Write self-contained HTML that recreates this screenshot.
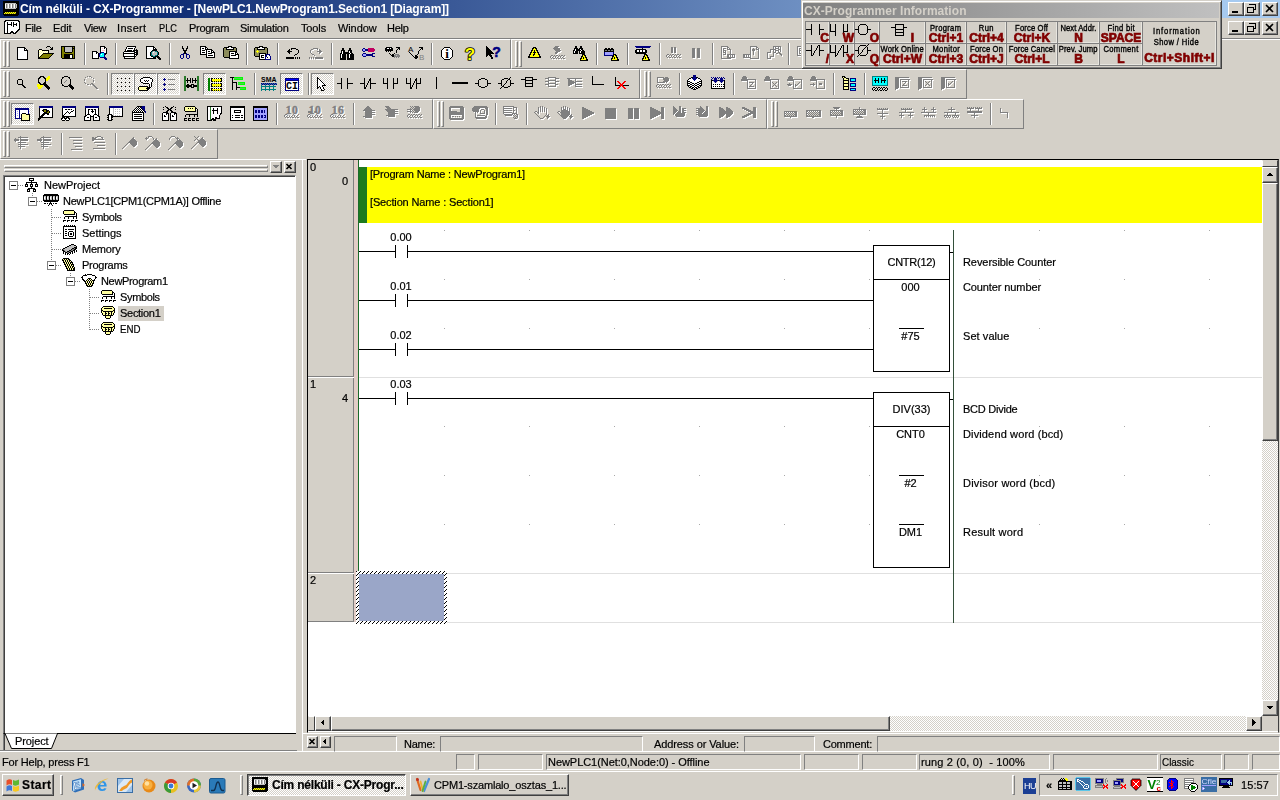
<!DOCTYPE html>
<html lang="hu">
<head>
<meta charset="utf-8">
<title>Cím nélküli - CX-Programmer</title>
<style>

*{box-sizing:border-box;margin:0;padding:0}
html,body{width:1280px;height:800px;overflow:hidden;background:#d4d0c8}
body{font-family:"Liberation Sans",sans-serif;font-size:11px;color:#000;line-height:1}
#screen{position:relative;width:1280px;height:800px;overflow:hidden;background:#d4d0c8}
.t{will-change:transform}
.a{position:absolute}
.t{position:absolute;white-space:nowrap;line-height:13px;height:13px;-webkit-text-stroke:0.2px currentColor}
.ui{font-family:"Liberation Sans",sans-serif;font-size:11px}
.b{font-weight:bold}
svg{position:absolute;display:block;overflow:visible}
.raised{border:1px solid;border-color:#fff #404040 #404040 #fff;box-shadow:inset -1px -1px 0 #808080,inset 1px 1px 0 #d4d0c8;background:#d4d0c8}
.btn{border:1px solid;border-color:#fff #404040 #404040 #fff;box-shadow:inset -1px -1px 0 #808080;background:#d4d0c8}
.sunk{border:1px solid;border-color:#808080 #fff #fff #808080}
.sunk2{border:1px solid;border-color:#808080 #fff #fff #808080;box-shadow:inset 1px 1px 0 #404040}
.tb{position:absolute;height:30px;border:1px solid;border-color:#fff #808080 #808080 #fff}
.grip{position:absolute;width:3px;height:26px;top:1px;border:1px solid;border-color:#fff #808080 #808080 #fff}
.sep{position:absolute;width:2px;height:22px;top:3px;border-left:1px solid #808080;border-right:1px solid #fff}
.ic{position:absolute}
.chk{position:absolute;width:23px;height:22px;border:1px solid;border-color:#808080 #fff #fff #808080;background-color:#e9e7e3;background-image:conic-gradient(#fff 25%,#d4d0c8 0 50%,#fff 0 75%,#d4d0c8 0);background-size:2px 2px}
.il{font-size:9.5px;text-align:center;line-height:11px;height:11px;-webkit-text-stroke:0.4px currentColor}
.il span{display:inline-block;transform:scaleX(.8);transform-origin:50% 50%}
.ik{font-size:12px;font-weight:bold;color:#800000;text-align:center;line-height:12px;height:12px;-webkit-text-stroke:0.7px #800000}
.dither{background-color:#e9e7e3;background-image:conic-gradient(#fff 25%,#d4d0c8 0 50%,#fff 0 75%,#d4d0c8 0);background-size:2px 2px}
</style>
</head>
<body>
<div id="screen">
<div class="a" style="left:0px;top:0px;width:1280px;height:18px;background:linear-gradient(90deg,#0a246a 0,#0d2a72 150px,#a6caf0 1180px,#a6caf0 100%)"></div>
<svg class="ic" style="left:3px;top:1px" width="16" height="16" viewBox="0 0 16 16" shape-rendering="crispEdges"><path fill="#000" d="M0 0h16v1h-16zM0 1h16v1h-16zM0 2h2v1h-2zM13 2h3v1h-3zM0 3h2v1h-2zM14 3h2v1h-2zM0 4h2v1h-2zM14 4h2v1h-2zM0 5h2v1h-2zM14 5h2v1h-2zM0 6h2v1h-2zM14 6h2v1h-2zM0 7h2v1h-2zM13 7h3v1h-3zM0 8h16v1h-16zM0 9h16v1h-16zM0 10h16v1h-16zM0 11h2v1h-2zM13 11h3v1h-3zM0 12h1v1h-1zM13 12h3v1h-3zM0 13h16v1h-16zM1 14h14v1h-14z"/><path fill="#c0c0c0" d="M2 2h11v1h-11zM4 3h1v1h-1zM7 3h1v1h-1zM10 3h1v1h-1zM13 3h1v1h-1zM4 4h1v1h-1zM7 4h1v1h-1zM10 4h1v1h-1zM13 4h1v1h-1zM4 5h1v1h-1zM7 5h1v1h-1zM10 5h1v1h-1zM13 5h1v1h-1zM4 6h1v1h-1zM7 6h1v1h-1zM10 6h1v1h-1zM13 6h1v1h-1zM2 7h11v1h-11z"/><path fill="#fff" d="M2 3h1v1h-1zM5 3h1v1h-1zM8 3h1v1h-1zM11 3h1v1h-1zM2 4h1v1h-1zM5 4h1v1h-1zM8 4h1v1h-1zM11 4h1v1h-1zM2 5h1v1h-1zM5 5h1v1h-1zM8 5h1v1h-1zM11 5h1v1h-1zM2 6h1v1h-1zM5 6h1v1h-1zM8 6h1v1h-1zM11 6h1v1h-1z"/><path fill="#808080" d="M3 3h1v1h-1zM6 3h1v1h-1zM9 3h1v1h-1zM12 3h1v1h-1zM3 4h1v1h-1zM6 4h1v1h-1zM9 4h1v1h-1zM12 4h1v1h-1zM3 5h1v1h-1zM6 5h1v1h-1zM9 5h1v1h-1zM12 5h1v1h-1zM3 6h1v1h-1zM6 6h1v1h-1zM9 6h1v1h-1zM12 6h1v1h-1z"/><path fill="#ff0" d="M2 11h1v1h-1zM4 11h1v1h-1zM6 11h1v1h-1zM8 11h1v1h-1zM10 11h1v1h-1zM12 11h1v1h-1zM1 12h1v1h-1zM3 12h1v1h-1zM5 12h1v1h-1zM7 12h1v1h-1zM9 12h1v1h-1zM11 12h1v1h-1z"/><path fill="#808000" d="M3 11h1v1h-1zM5 11h1v1h-1zM7 11h1v1h-1zM9 11h1v1h-1zM11 11h1v1h-1zM2 12h1v1h-1zM4 12h1v1h-1zM6 12h1v1h-1zM8 12h1v1h-1zM10 12h1v1h-1zM12 12h1v1h-1z"/></svg>
<div class="t ttl" style="left:20px;top:3px;color:#fff;font-weight:bold;font-size:12px;-webkit-text-stroke:0;letter-spacing:-0.121px;">Cím nélküli - CX-Programmer - [NewPLC1.NewProgram1.Section1 [Diagram]]</div>
<div class="a btn" style="left:1228px;top:2px;width:16px;height:14px"><svg style="left:-1px;top:-1px" width="16" height="14" viewBox="0 0 16 14" shape-rendering="crispEdges"><rect x="4" y="9" width="6" height="2" fill="#000"/></svg></div>
<div class="a btn" style="left:1244px;top:2px;width:16px;height:14px"><svg style="left:-1px;top:-1px" width="16" height="14" viewBox="0 0 16 14" shape-rendering="crispEdges"><path d="M5.5 2.5h6v5h-2" stroke="#000" fill="none" stroke-width="1" /><rect x="5" y="2" width="7" height="1" fill="#000"/><path d="M3.5 5.5h6v5h-6z" stroke="#000" fill="none" stroke-width="1" /><rect x="3" y="5" width="7" height="1" fill="#000"/></svg></div>
<div class="a btn" style="left:1262px;top:2px;width:16px;height:14px"><svg style="left:-1px;top:-1px" width="16" height="14" viewBox="0 0 16 14" shape-rendering="crispEdges"><path d="M4 3l7 7M11 3l-7 7" stroke="#000" fill="none" stroke-width="1.6" shape-rendering="auto"/></svg></div>
<div class="a" style="left:0px;top:18px;width:1280px;height:20px;background:#d4d0c8"></div>
<svg class="ic" style="left:4px;top:20px" width="16" height="16" viewBox="0 0 16 16" shape-rendering="crispEdges"><path fill="#000" d="M1 0h14v1h-14zM0 1h2v1h-2zM14 1h2v1h-2zM0 2h1v1h-1zM3 2h1v1h-1zM7 2h1v1h-1zM9 2h1v1h-1zM15 2h1v1h-1zM0 3h1v1h-1zM3 3h1v1h-1zM7 3h1v1h-1zM9 3h1v1h-1zM12 3h1v1h-1zM15 3h1v1h-1zM0 4h1v1h-1zM3 4h5v1h-5zM9 4h4v1h-4zM15 4h1v1h-1zM0 5h1v1h-1zM3 5h1v1h-1zM7 5h1v1h-1zM9 5h1v1h-1zM12 5h1v1h-1zM15 5h1v1h-1zM0 6h1v1h-1zM3 6h1v1h-1zM9 6h1v1h-1zM15 6h1v1h-1zM0 7h1v1h-1zM3 7h1v1h-1zM15 7h1v1h-1zM0 8h1v1h-1zM3 8h1v1h-1zM15 8h1v1h-1zM0 9h1v1h-1zM3 9h1v1h-1zM14 9h2v1h-2zM0 10h1v1h-1zM3 10h1v1h-1zM13 10h2v1h-2zM0 11h1v1h-1zM3 11h1v1h-1zM7 11h2v1h-2zM12 11h2v1h-2zM0 12h1v1h-1zM3 12h1v1h-1zM6 12h4v1h-4zM11 12h2v1h-2zM0 13h7v1h-7zM9 13h3v1h-3z"/><path fill="#fff" d="M2 1h12v1h-12zM1 2h2v1h-2zM4 2h3v1h-3zM8 2h1v1h-1zM10 2h5v1h-5zM1 3h2v1h-2zM4 3h3v1h-3zM8 3h1v1h-1zM10 3h2v1h-2zM13 3h2v1h-2zM1 4h2v1h-2zM8 4h1v1h-1zM13 4h2v1h-2zM1 5h2v1h-2zM4 5h3v1h-3zM8 5h1v1h-1zM10 5h2v1h-2zM13 5h2v1h-2zM1 6h2v1h-2zM4 6h5v1h-5zM10 6h5v1h-5zM1 7h2v1h-2zM4 7h11v1h-11zM1 8h2v1h-2zM4 8h11v1h-11zM1 9h2v1h-2zM4 9h10v1h-10zM1 10h2v1h-2zM4 10h9v1h-9zM1 11h2v1h-2zM4 11h3v1h-3zM9 11h3v1h-3zM1 12h2v1h-2zM4 12h2v1h-2zM10 12h1v1h-1z"/></svg>
<div class="t mn" style="left:25px;top:22px;letter-spacing:-0.309px;">File</div>
<div class="t mn" style="left:53px;top:22px;letter-spacing:-0.117px;">Edit</div>
<div class="t mn" style="left:84px;top:22px;letter-spacing:-0.414px;">View</div>
<div class="t mn" style="left:117px;top:22px;letter-spacing:0.331px;">Insert</div>
<div class="t mn" style="left:159px;top:22px;"><span style="display:inline-block;transform:scaleX(0.84);transform-origin:0 50%">PLC</span></div>
<div class="t mn" style="left:189px;top:22px;letter-spacing:-0.312px;">Program</div>
<div class="t mn" style="left:240px;top:22px;letter-spacing:-0.286px;">Simulation</div>
<div class="t mn" style="left:301px;top:22px;letter-spacing:-0.138px;">Tools</div>
<div class="t mn" style="left:338px;top:22px;letter-spacing:-0.104px;">Window</div>
<div class="t mn" style="left:387px;top:22px;letter-spacing:-0.281px;">Help</div>
<div class="a btn" style="left:1228px;top:21px;width:16px;height:14px"><svg style="left:-1px;top:-1px" width="16" height="14" viewBox="0 0 16 14" shape-rendering="crispEdges"><rect x="4" y="9" width="6" height="2" fill="#000"/></svg></div>
<div class="a btn" style="left:1244px;top:21px;width:16px;height:14px"><svg style="left:-1px;top:-1px" width="16" height="14" viewBox="0 0 16 14" shape-rendering="crispEdges"><path d="M5.5 2.5h6v5h-2" stroke="#000" fill="none" stroke-width="1" /><rect x="5" y="2" width="7" height="1" fill="#000"/><path d="M3.5 5.5h6v5h-6z" stroke="#000" fill="none" stroke-width="1" /><rect x="3" y="5" width="7" height="1" fill="#000"/></svg></div>
<div class="a btn" style="left:1262px;top:21px;width:16px;height:14px"><svg style="left:-1px;top:-1px" width="16" height="14" viewBox="0 0 16 14" shape-rendering="crispEdges"><path d="M4 3l7 7M11 3l-7 7" stroke="#000" fill="none" stroke-width="1.6" shape-rendering="auto"/></svg></div>
<div class="a" style="left:0px;top:38px;width:1280px;height:1px;background:#808080"></div>
<div class="a" style="left:0px;top:39px;width:1280px;height:1px;background:#fff"></div>
<div class="tb" style="left:0px;top:39px;width:511px"><div class="grip" style="left:2px"></div><div class="grip" style="left:6px"></div><svg class="ic" style="left:14px;top:5px" width="17" height="17" viewBox="0 0 17 17" shape-rendering="crispEdges"><path fill="#000" d="M2 2h8v1h-8zM2 3h1v1h-1zM9 3h2v1h-2zM2 4h1v1h-1zM9 4h1v1h-1zM11 4h1v1h-1zM2 5h1v1h-1zM9 5h4v1h-4zM2 6h1v1h-1zM12 6h1v1h-1zM2 7h1v1h-1zM12 7h1v1h-1zM2 8h1v1h-1zM12 8h1v1h-1zM2 9h1v1h-1zM12 9h1v1h-1zM2 10h1v1h-1zM12 10h1v1h-1zM2 11h1v1h-1zM12 11h1v1h-1zM2 12h1v1h-1zM12 12h1v1h-1zM2 13h1v1h-1zM12 13h1v1h-1zM2 14h11v1h-11z"/><path fill="#fff" d="M3 3h6v1h-6zM3 4h6v1h-6zM10 4h1v1h-1zM3 5h6v1h-6zM3 6h9v1h-9zM3 7h9v1h-9zM3 8h9v1h-9zM3 9h9v1h-9zM3 10h9v1h-9zM3 11h9v1h-9zM3 12h9v1h-9zM3 13h9v1h-9z"/></svg><svg class="ic" style="left:37px;top:5px" width="17" height="17" viewBox="0 0 17 17" shape-rendering="crispEdges"><path fill="#000" d="M9 1h3v1h-3zM8 2h1v1h-1zM12 2h1v1h-1zM14 2h1v1h-1zM13 3h2v1h-2zM1 4h3v1h-3zM12 4h3v1h-3zM0 5h1v1h-1zM4 5h7v1h-7zM0 6h1v1h-1zM10 6h1v1h-1zM0 7h1v1h-1zM10 7h1v1h-1zM0 8h1v1h-1zM5 8h11v1h-11zM0 9h1v1h-1zM4 9h1v1h-1zM14 9h1v1h-1zM0 10h1v1h-1zM3 10h1v1h-1zM13 10h1v1h-1zM0 11h1v1h-1zM2 11h1v1h-1zM12 11h1v1h-1zM0 12h2v1h-2zM11 12h1v1h-1zM0 13h11v1h-11z"/><path fill="#ffffa0" d="M1 5h1v1h-1zM3 5h1v1h-1zM2 6h1v1h-1zM4 6h1v1h-1zM6 6h1v1h-1zM8 6h1v1h-1zM1 7h1v1h-1zM3 7h1v1h-1zM5 7h1v1h-1zM7 7h1v1h-1zM9 7h1v1h-1zM2 8h1v1h-1zM4 8h1v1h-1zM1 9h1v1h-1zM3 9h1v1h-1zM2 10h1v1h-1zM1 11h1v1h-1z"/><path fill="#fff" d="M2 5h1v1h-1zM1 6h1v1h-1zM3 6h1v1h-1zM5 6h1v1h-1zM7 6h1v1h-1zM9 6h1v1h-1zM2 7h1v1h-1zM4 7h1v1h-1zM6 7h1v1h-1zM8 7h1v1h-1zM1 8h1v1h-1zM3 8h1v1h-1zM2 9h1v1h-1zM1 10h1v1h-1z"/><path fill="#808000" d="M5 9h9v1h-9zM4 10h9v1h-9zM3 11h9v1h-9zM2 12h9v1h-9z"/></svg><svg class="ic" style="left:60px;top:5px" width="17" height="17" viewBox="0 0 17 17" shape-rendering="crispEdges"><path fill="#000" d="M0 1h14v1h-14zM0 2h1v1h-1zM3 2h1v1h-1zM11 2h1v1h-1zM13 2h1v1h-1zM0 3h1v1h-1zM3 3h1v1h-1zM11 3h3v1h-3zM0 4h1v1h-1zM3 4h1v1h-1zM11 4h1v1h-1zM13 4h1v1h-1zM0 5h1v1h-1zM3 5h1v1h-1zM11 5h1v1h-1zM13 5h1v1h-1zM0 6h1v1h-1zM3 6h1v1h-1zM11 6h1v1h-1zM13 6h1v1h-1zM0 7h1v1h-1zM4 7h7v1h-7zM13 7h1v1h-1zM0 8h1v1h-1zM13 8h1v1h-1zM0 9h1v1h-1zM3 9h9v1h-9zM13 9h1v1h-1zM0 10h1v1h-1zM3 10h6v1h-6zM11 10h1v1h-1zM13 10h1v1h-1zM0 11h1v1h-1zM3 11h6v1h-6zM11 11h1v1h-1zM13 11h1v1h-1zM0 12h1v1h-1zM3 12h6v1h-6zM11 12h1v1h-1zM13 12h1v1h-1zM1 13h13v1h-13z"/><path fill="#808000" d="M1 2h2v1h-2zM12 2h1v1h-1zM1 3h2v1h-2zM1 4h2v1h-2zM12 4h1v1h-1zM1 5h2v1h-2zM12 5h1v1h-1zM1 6h2v1h-2zM12 6h1v1h-1zM1 7h3v1h-3zM11 7h2v1h-2zM1 8h12v1h-12zM1 9h2v1h-2zM12 9h1v1h-1zM1 10h2v1h-2zM12 10h1v1h-1zM1 11h2v1h-2zM12 11h1v1h-1zM1 12h2v1h-2zM12 12h1v1h-1z"/><path fill="#c0c0c0" d="M4 2h7v1h-7zM4 3h7v1h-7zM4 4h7v1h-7zM4 5h7v1h-7zM4 6h7v1h-7z"/><path fill="#fff" d="M9 10h2v1h-2zM9 11h2v1h-2zM9 12h2v1h-2z"/></svg><div class="sep" style="left:83px"></div><svg class="ic" style="left:91px;top:5px" width="17" height="17" viewBox="0 0 17 17" shape-rendering="crispEdges"><path fill="#000" d="M8 1h5v1h-5zM8 2h1v1h-1zM12 2h2v1h-2zM8 3h1v1h-1zM12 3h1v1h-1zM14 3h1v1h-1zM8 4h1v1h-1zM14 4h1v1h-1zM8 5h1v1h-1zM14 5h1v1h-1zM0 6h5v1h-5zM8 6h1v1h-1zM14 6h1v1h-1zM0 7h1v1h-1zM4 7h2v1h-2zM8 7h1v1h-1zM14 7h1v1h-1zM0 8h1v1h-1zM4 8h1v1h-1zM6 8h1v1h-1zM13 8h2v1h-2zM0 9h1v1h-1zM6 9h1v1h-1zM13 9h1v1h-1zM0 10h1v1h-1zM6 10h1v1h-1zM0 11h1v1h-1zM6 11h1v1h-1zM0 12h1v1h-1zM6 12h1v1h-1zM0 13h7v1h-7z"/><path fill="#fff" d="M9 2h3v1h-3zM9 3h1v1h-1zM11 3h1v1h-1zM13 3h1v1h-1zM9 4h5v1h-5zM9 5h1v1h-1zM13 5h1v1h-1zM9 6h5v1h-5zM1 7h3v1h-3zM12 7h2v1h-2zM1 8h3v1h-3zM5 8h1v1h-1zM1 9h5v1h-5zM9 9h1v1h-1zM1 10h5v1h-5zM1 11h5v1h-5zM1 12h5v1h-5z"/><path fill="#ffc0c0" d="M10 3h1v1h-1zM10 5h3v1h-3z"/><path fill="#000080" d="M9 7h3v1h-3zM7 8h2v1h-2zM12 8h1v1h-1zM7 9h1v1h-1zM12 9h1v1h-1zM7 10h1v1h-1zM12 10h1v1h-1zM7 11h1v1h-1zM12 11h1v1h-1zM8 12h6v1h-6zM12 13h3v1h-3zM13 14h2v1h-2z"/><path fill="#0ff" d="M9 8h3v1h-3zM8 9h1v1h-1zM10 9h2v1h-2zM8 10h4v1h-4zM8 11h4v1h-4z"/></svg><div class="sep" style="left:114px"></div><svg class="ic" style="left:122px;top:5px" width="17" height="17" viewBox="0 0 17 17" shape-rendering="crispEdges"><path fill="#000" d="M4 1h9v1h-9zM3 2h1v1h-1zM12 2h1v1h-1zM3 3h1v1h-1zM5 3h5v1h-5zM11 3h1v1h-1zM2 4h1v1h-1zM11 4h1v1h-1zM13 4h1v1h-1zM2 5h1v1h-1zM4 5h5v1h-5zM10 5h5v1h-5zM1 6h11v1h-11zM13 6h2v1h-2zM0 7h1v1h-1zM11 7h4v1h-4zM0 8h12v1h-12zM13 8h2v1h-2zM0 9h1v1h-1zM11 9h4v1h-4zM0 10h1v1h-1zM11 10h1v1h-1zM13 10h1v1h-1zM0 11h13v1h-13zM1 12h1v1h-1zM11 12h1v1h-1zM1 13h11v1h-11z"/><path fill="#fff" d="M4 2h8v1h-8zM4 3h1v1h-1zM10 3h1v1h-1zM3 4h8v1h-8zM3 5h1v1h-1zM9 5h1v1h-1zM12 6h1v1h-1zM1 7h10v1h-10zM12 8h1v1h-1zM1 9h10v1h-10zM1 10h10v1h-10zM12 10h1v1h-1zM2 12h9v1h-9z"/></svg><svg class="ic" style="left:145px;top:5px" width="17" height="17" viewBox="0 0 17 17" shape-rendering="crispEdges"><path fill="#000" d="M0 1h8v1h-8zM0 2h1v1h-1zM7 2h2v1h-2zM0 3h1v1h-1zM7 3h1v1h-1zM9 3h1v1h-1zM0 4h1v1h-1zM7 4h4v1h-4zM0 5h1v1h-1zM6 5h5v1h-5zM0 6h1v1h-1zM5 6h1v1h-1zM11 6h1v1h-1zM0 7h1v1h-1zM4 7h1v1h-1zM12 7h1v1h-1zM0 8h1v1h-1zM4 8h1v1h-1zM12 8h1v1h-1zM0 9h1v1h-1zM4 9h1v1h-1zM12 9h1v1h-1zM0 10h1v1h-1zM4 10h1v1h-1zM11 10h1v1h-1zM0 11h1v1h-1zM5 11h2v1h-2zM9 11h4v1h-4zM0 12h1v1h-1zM7 12h3v1h-3zM11 12h3v1h-3zM0 13h10v1h-10zM12 13h3v1h-3zM13 14h2v1h-2z"/><path fill="#fff" d="M1 2h6v1h-6zM1 3h6v1h-6zM8 3h1v1h-1zM1 4h6v1h-6zM1 5h5v1h-5zM1 6h4v1h-4zM1 7h3v1h-3zM7 7h1v1h-1zM1 8h3v1h-3zM1 9h3v1h-3zM1 10h3v1h-3zM1 11h4v1h-4zM1 12h6v1h-6z"/><path fill="#008080" d="M6 6h1v1h-1zM9 6h2v1h-2zM5 7h1v1h-1zM11 7h1v1h-1zM5 8h1v1h-1zM11 8h1v1h-1zM5 9h1v1h-1zM11 9h1v1h-1zM5 10h2v1h-2zM9 10h2v1h-2zM7 11h2v1h-2z"/><path fill="#c0c0c0" d="M7 6h2v1h-2zM6 7h1v1h-1zM8 7h3v1h-3zM6 8h5v1h-5zM6 9h5v1h-5zM7 10h2v1h-2z"/></svg><div class="sep" style="left:168px"></div><svg class="ic" style="left:176px;top:5px" width="17" height="17" viewBox="0 0 17 17" shape-rendering="crispEdges"><path fill="#000" d="M5 1h1v1h-1zM10 1h1v1h-1zM5 2h1v1h-1zM10 2h1v1h-1zM5 3h2v1h-2zM9 3h2v1h-2zM6 4h1v1h-1zM9 4h1v1h-1zM6 5h4v1h-4zM7 6h2v1h-2zM7 7h2v1h-2zM7 8h2v1h-2z"/><path fill="#000080" d="M6 8h1v1h-1zM9 8h1v1h-1zM4 9h3v1h-3zM9 9h3v1h-3zM3 10h1v1h-1zM6 10h1v1h-1zM9 10h1v1h-1zM12 10h1v1h-1zM3 11h1v1h-1zM6 11h1v1h-1zM9 11h1v1h-1zM12 11h1v1h-1zM3 12h1v1h-1zM6 12h1v1h-1zM9 12h1v1h-1zM12 12h1v1h-1zM4 13h2v1h-2zM10 13h2v1h-2z"/></svg><svg class="ic" style="left:199px;top:5px" width="17" height="17" viewBox="0 0 17 17" shape-rendering="crispEdges"><path fill="#000" d="M0 1h6v1h-6zM0 2h1v1h-1zM5 2h2v1h-2zM0 3h1v1h-1zM2 3h2v1h-2zM5 3h1v1h-1zM7 3h1v1h-1zM0 4h1v1h-1zM5 4h7v1h-7zM0 5h1v1h-1zM2 5h3v1h-3zM6 5h1v1h-1zM11 5h2v1h-2zM0 6h1v1h-1zM6 6h1v1h-1zM8 6h2v1h-2zM11 6h1v1h-1zM13 6h1v1h-1zM0 7h1v1h-1zM2 7h3v1h-3zM6 7h1v1h-1zM11 7h4v1h-4zM0 8h1v1h-1zM6 8h1v1h-1zM8 8h4v1h-4zM14 8h1v1h-1zM0 9h7v1h-7zM14 9h1v1h-1zM6 10h1v1h-1zM8 10h5v1h-5zM14 10h1v1h-1zM6 11h1v1h-1zM14 11h1v1h-1zM6 12h9v1h-9z"/><path fill="#fff" d="M1 2h4v1h-4zM1 3h1v1h-1zM4 3h1v1h-1zM6 3h1v1h-1zM1 4h4v1h-4zM1 5h1v1h-1zM5 5h1v1h-1zM7 5h4v1h-4zM1 6h5v1h-5zM7 6h1v1h-1zM10 6h1v1h-1zM12 6h1v1h-1zM1 7h1v1h-1zM5 7h1v1h-1zM7 7h4v1h-4zM1 8h5v1h-5zM7 8h1v1h-1zM12 8h2v1h-2zM7 9h7v1h-7zM7 10h1v1h-1zM13 10h1v1h-1zM7 11h7v1h-7z"/></svg><svg class="ic" style="left:222px;top:5px" width="17" height="17" viewBox="0 0 17 17" shape-rendering="crispEdges"><path fill="#000" d="M5 1h4v1h-4zM1 2h5v1h-5zM8 2h5v1h-5zM0 3h1v1h-1zM3 3h1v1h-1zM10 3h1v1h-1zM13 3h1v1h-1zM0 4h1v1h-1zM3 4h8v1h-8zM13 4h1v1h-1zM0 5h1v1h-1zM13 5h1v1h-1zM0 6h1v1h-1zM6 6h8v1h-8zM0 7h1v1h-1zM6 7h1v1h-1zM12 7h2v1h-2zM0 8h1v1h-1zM6 8h1v1h-1zM8 8h3v1h-3zM12 8h1v1h-1zM14 8h1v1h-1zM0 9h1v1h-1zM6 9h1v1h-1zM12 9h4v1h-4zM0 10h1v1h-1zM6 10h1v1h-1zM8 10h5v1h-5zM15 10h1v1h-1zM0 11h1v1h-1zM6 11h1v1h-1zM15 11h1v1h-1zM1 12h6v1h-6zM15 12h1v1h-1zM6 13h10v1h-10z"/><path fill="#fff" d="M6 2h2v1h-2zM4 3h6v1h-6zM7 7h5v1h-5zM7 8h1v1h-1zM11 8h1v1h-1zM13 8h1v1h-1zM7 9h5v1h-5zM7 10h1v1h-1zM13 10h2v1h-2zM7 11h8v1h-8zM7 12h8v1h-8z"/><path fill="#8c8c5a" d="M1 3h2v1h-2zM11 3h2v1h-2zM1 4h2v1h-2zM11 4h2v1h-2zM1 5h12v1h-12zM1 6h5v1h-5zM1 7h5v1h-5zM1 8h5v1h-5zM1 9h5v1h-5zM1 10h5v1h-5zM1 11h5v1h-5z"/></svg><div class="sep" style="left:245px"></div><svg class="ic" style="left:253px;top:5px" width="17" height="17" viewBox="0 0 17 17" shape-rendering="crispEdges"><path fill="#000" d="M5 1h4v1h-4zM1 2h5v1h-5zM8 2h5v1h-5zM0 3h1v1h-1zM3 3h1v1h-1zM10 3h1v1h-1zM13 3h1v1h-1zM0 4h1v1h-1zM3 4h8v1h-8zM13 4h1v1h-1zM0 5h1v1h-1zM13 5h1v1h-1zM0 6h1v1h-1zM13 6h1v1h-1zM0 7h1v1h-1zM13 7h1v1h-1zM0 8h1v1h-1zM5 8h7v1h-7zM13 8h1v1h-1zM0 9h1v1h-1zM5 9h1v1h-1zM11 9h1v1h-1zM0 10h1v1h-1zM5 10h1v1h-1zM7 10h3v1h-3zM11 10h1v1h-1zM1 11h5v1h-5zM7 11h1v1h-1zM5 12h1v1h-1zM7 12h3v1h-3zM13 12h1v1h-1zM5 13h1v1h-1zM5 14h6v1h-6z"/><path fill="#fff" d="M6 2h2v1h-2zM4 3h6v1h-6zM6 9h5v1h-5zM6 10h1v1h-1zM10 10h1v1h-1zM13 10h2v1h-2zM6 11h1v1h-1zM8 11h3v1h-3zM13 11h3v1h-3zM6 12h1v1h-1zM10 12h1v1h-1zM12 12h1v1h-1zM14 12h2v1h-2zM6 13h5v1h-5zM12 13h4v1h-4z"/><path fill="#8c8c5a" d="M1 3h2v1h-2zM11 3h2v1h-2zM1 4h2v1h-2zM11 4h2v1h-2zM1 5h2v1h-2zM4 5h9v1h-9zM1 6h1v1h-1zM5 6h8v1h-8zM1 7h2v1h-2zM4 7h9v1h-9zM1 8h4v1h-4zM12 8h1v1h-1zM1 9h4v1h-4zM1 10h4v1h-4z"/><path fill="#ff0" d="M3 5h1v1h-1zM2 6h3v1h-3zM3 7h1v1h-1z"/><path fill="#000080" d="M12 9h4v1h-4zM12 10h1v1h-1zM15 10h1v1h-1zM11 11h2v1h-2zM16 11h1v1h-1zM11 12h1v1h-1zM16 12h1v1h-1zM11 13h1v1h-1zM16 13h1v1h-1zM11 14h6v1h-6z"/></svg><div class="sep" style="left:276px"></div><svg class="ic" style="left:284px;top:5px" width="17" height="17" viewBox="0 0 17 17" shape-rendering="crispEdges"><path fill="#000" d="M6 3h5v1h-5zM4 4h1v1h-1zM6 4h1v1h-1zM11 4h2v1h-2zM3 5h2v1h-2zM13 5h1v1h-1zM2 6h5v1h-5zM13 6h1v1h-1zM3 7h2v1h-2zM13 7h1v1h-1zM4 8h1v1h-1zM12 8h1v1h-1zM10 9h2v1h-2zM9 10h1v1h-1zM1 12h8v1h-8zM10 12h1v1h-1zM12 12h1v1h-1zM14 12h1v1h-1zM1 13h8v1h-8zM10 13h1v1h-1zM12 13h1v1h-1zM14 13h1v1h-1z"/></svg><svg class="ic" style="left:307px;top:5px" width="17" height="17" viewBox="0 0 17 17" shape-rendering="crispEdges"><path fill="#808080" d="M5 3h5v1h-5zM3 4h2v1h-2zM9 4h1v1h-1zM11 4h1v1h-1zM2 5h1v1h-1zM11 5h2v1h-2zM2 6h1v1h-1zM9 6h5v1h-5zM2 7h1v1h-1zM11 7h2v1h-2zM3 8h1v1h-1zM11 8h1v1h-1zM4 9h2v1h-2zM6 10h1v1h-1zM1 12h1v1h-1zM3 12h1v1h-1zM5 12h1v1h-1zM7 12h8v1h-8zM1 13h1v1h-1zM3 13h1v1h-1zM5 13h1v1h-1zM7 13h8v1h-8z"/><path fill="#fff" d="M6 4h3v1h-3zM10 4h1v1h-1zM4 5h2v1h-2zM10 5h1v1h-1zM3 6h1v1h-1zM3 7h1v1h-1zM10 7h1v1h-1zM13 7h2v1h-2zM12 8h2v1h-2zM12 9h1v1h-1zM5 10h1v1h-1zM7 11h1v1h-1zM2 13h1v1h-1zM4 13h1v1h-1zM6 13h1v1h-1zM15 13h1v1h-1zM2 14h1v1h-1zM4 14h1v1h-1zM6 14h1v1h-1zM8 14h8v1h-8z"/></svg><div class="sep" style="left:330px"></div><svg class="ic" style="left:338px;top:5px" width="17" height="17" viewBox="0 0 17 17" shape-rendering="crispEdges"><path fill="#000" d="M3 3h2v1h-2zM10 3h2v1h-2zM3 4h2v1h-2zM10 4h2v1h-2zM2 5h4v1h-4zM9 5h4v1h-4zM2 6h1v1h-1zM4 6h2v1h-2zM9 6h1v1h-1zM11 6h2v1h-2zM2 7h1v1h-1zM4 7h6v1h-6zM11 7h2v1h-2zM1 8h2v1h-2zM4 8h7v1h-7zM12 8h2v1h-2zM1 9h1v1h-1zM3 9h4v1h-4zM8 9h2v1h-2zM11 9h4v1h-4zM1 10h1v1h-1zM3 10h4v1h-4zM8 10h2v1h-2zM11 10h4v1h-4zM1 11h1v1h-1zM3 11h4v1h-4zM8 11h2v1h-2zM11 11h4v1h-4zM1 12h1v1h-1zM3 12h4v1h-4zM8 12h2v1h-2zM11 12h4v1h-4zM1 13h6v1h-6zM8 13h7v1h-7zM1 14h6v1h-6zM8 14h7v1h-7z"/><path fill="#fff" d="M3 6h1v1h-1zM10 6h1v1h-1zM3 7h1v1h-1zM10 7h1v1h-1zM3 8h1v1h-1zM11 8h1v1h-1zM2 9h1v1h-1zM10 9h1v1h-1zM2 10h1v1h-1zM10 10h1v1h-1zM2 11h1v1h-1zM10 11h1v1h-1zM2 12h1v1h-1zM10 12h1v1h-1z"/></svg><svg class="ic" style="left:361px;top:5px" width="17" height="17" viewBox="0 0 17 17" shape-rendering="crispEdges"><path fill="#000080" d="M1 3h2v1h-2zM0 4h1v1h-1zM3 4h3v1h-3zM0 5h1v1h-1zM3 5h3v1h-3zM1 6h2v1h-2zM1 8h3v1h-3zM10 8h3v1h-3zM0 9h1v1h-1zM4 9h7v1h-7zM0 10h1v1h-1zM4 10h7v1h-7zM1 11h3v1h-3zM10 11h3v1h-3z"/><path fill="#c00060" d="M6 3h6v1h-6zM6 4h7v1h-7zM6 5h7v1h-7zM6 6h6v1h-6z"/><path fill="#a0a0ff" d="M1 4h2v1h-2zM1 5h2v1h-2zM1 9h3v1h-3zM1 10h3v1h-3z"/></svg><svg class="ic" style="left:384px;top:5px" width="17" height="17" viewBox="0 0 17 17" shape-rendering="crispEdges"><path fill="#000" d="M1 2h6v1h-6zM11 2h4v1h-4zM0 3h2v1h-2zM4 3h1v1h-1zM6 3h2v1h-2zM13 3h2v1h-2zM0 4h8v1h-8zM12 4h1v1h-1zM14 4h1v1h-1zM0 5h8v1h-8zM11 5h1v1h-1zM1 6h1v1h-1zM3 6h1v1h-1zM5 6h1v1h-1zM11 6h1v1h-1zM11 7h1v1h-1zM4 8h1v1h-1zM9 8h1v1h-1zM5 9h1v1h-1zM7 9h2v1h-2zM6 10h3v1h-3zM7 11h2v1h-2z"/><path fill="#fff" d="M2 3h2v1h-2zM5 3h1v1h-1z"/><path fill="#808080" d="M10 9h4v1h-4zM9 10h2v1h-2zM12 10h3v1h-3zM9 11h6v1h-6zM9 12h1v1h-1zM11 12h1v1h-1zM13 12h1v1h-1z"/><path fill="#c0c0c0" d="M11 10h1v1h-1z"/></svg><svg class="ic" style="left:407px;top:5px" width="17" height="17" viewBox="0 0 17 17" shape-rendering="crispEdges"><path fill="#000" d="M11 2h4v1h-4zM13 3h2v1h-2zM12 4h1v1h-1zM14 4h1v1h-1zM11 5h1v1h-1zM10 6h1v1h-1zM1 7h1v1h-1zM10 7h1v1h-1zM2 8h1v1h-1zM10 8h1v1h-1zM3 9h1v1h-1zM9 9h1v1h-1zM4 10h1v1h-1zM7 10h2v1h-2zM5 11h1v1h-1zM7 11h3v1h-3zM6 12h4v1h-4zM7 13h2v1h-2z"/><text x="0" y="6.5" font-family="Liberation Sans,sans-serif" font-size="8" font-weight="normal" fill="#000" text-anchor="start" >A</text><text x="11" y="15" font-family="Liberation Sans,sans-serif" font-size="8" font-weight="normal" fill="#808080" text-anchor="start" >B</text></svg><div class="sep" style="left:430px"></div><svg class="ic" style="left:438px;top:5px" width="17" height="17" viewBox="0 0 17 17" shape-rendering="crispEdges"><path fill="#000" d="M5 2h6v1h-6zM4 3h1v1h-1zM11 3h1v1h-1zM3 4h1v1h-1zM12 4h1v1h-1zM2 5h1v1h-1zM13 5h1v1h-1zM2 6h1v1h-1zM13 6h1v1h-1zM2 7h1v1h-1zM13 7h1v1h-1zM2 8h1v1h-1zM13 8h1v1h-1zM2 9h1v1h-1zM13 9h1v1h-1zM2 10h1v1h-1zM13 10h1v1h-1zM2 11h1v1h-1zM13 11h1v1h-1zM3 12h1v1h-1zM12 12h1v1h-1zM4 13h1v1h-1zM11 13h1v1h-1zM5 14h6v1h-6z"/><path fill="#fff" d="M5 3h6v1h-6zM4 4h8v1h-8zM3 5h10v1h-10zM3 6h10v1h-10zM3 7h10v1h-10zM3 8h10v1h-10zM3 9h10v1h-10zM3 10h10v1h-10zM3 11h10v1h-10zM4 12h8v1h-8zM5 13h6v1h-6z"/><text x="8" y="13" font-family="Liberation Serif,serif" font-size="13" font-weight="bold" fill="#000" text-anchor="middle" >i</text></svg><svg class="ic" style="left:461px;top:5px" width="17" height="17" viewBox="0 0 17 17" shape-rendering="crispEdges"><text x="8" y="15" font-family="Liberation Sans,sans-serif" font-size="17" font-weight="bold" fill="#ff0" text-anchor="middle" stroke="#000" stroke-width="1.6" paint-order="stroke" stroke-linejoin="round">?</text></svg><svg class="ic" style="left:484px;top:5px" width="17" height="17" viewBox="0 0 17 17" shape-rendering="crispEdges"><path fill="#000" d="M1 1h1v1h-1zM1 2h2v1h-2zM1 3h3v1h-3zM1 4h4v1h-4zM1 5h5v1h-5zM1 6h6v1h-6zM1 7h7v1h-7zM1 8h8v1h-8zM1 9h5v1h-5zM1 10h2v1h-2zM4 10h3v1h-3zM1 11h1v1h-1zM5 11h2v1h-2zM6 12h2v1h-2zM6 13h2v1h-2z"/><text x="11.5" y="11.5" font-family="Liberation Sans,sans-serif" font-size="14" font-weight="bold" fill="#000080" text-anchor="middle" stroke="#000080" stroke-width="0.5">?</text></svg></div>
<div class="tb" style="left:511px;top:39px;width:700px"><div class="grip" style="left:3px"></div><div class="grip" style="left:7px"></div><svg class="ic" style="left:15px;top:5px" width="17" height="17" viewBox="0 0 17 17" shape-rendering="crispEdges"><path fill="#000" d="M6 2h3v1h-3zM5 3h2v1h-2zM8 3h2v1h-2zM5 4h1v1h-1zM9 4h1v1h-1zM4 5h2v1h-2zM7 5h1v1h-1zM9 5h2v1h-2zM4 6h1v1h-1zM7 6h1v1h-1zM10 6h1v1h-1zM3 7h2v1h-2zM6 7h3v1h-3zM10 7h2v1h-2zM3 8h1v1h-1zM7 8h1v1h-1zM11 8h1v1h-1zM2 9h2v1h-2zM6 9h2v1h-2zM11 9h2v1h-2zM2 10h1v1h-1zM6 10h1v1h-1zM12 10h1v1h-1zM1 11h2v1h-2zM12 11h2v1h-2zM1 12h13v1h-13z"/><path fill="#ff0" d="M7 3h1v1h-1zM6 4h3v1h-3zM6 5h1v1h-1zM8 5h1v1h-1zM5 6h2v1h-2zM8 6h2v1h-2zM5 7h1v1h-1zM9 7h1v1h-1zM4 8h3v1h-3zM8 8h3v1h-3zM4 9h2v1h-2zM8 9h3v1h-3zM3 10h3v1h-3zM7 10h5v1h-5zM3 11h9v1h-9z"/></svg><svg class="ic" style="left:38px;top:5px" width="17" height="17" viewBox="0 0 17 17" shape-rendering="crispEdges"><path fill="#808080" d="M5 1h4v1h-4zM4 2h4v1h-4zM3 3h7v1h-7zM4 4h6v1h-6zM5 5h6v1h-6zM6 6h4v1h-4zM5 7h3v1h-3zM5 8h2v1h-2zM1 10h2v1h-2zM4 10h1v1h-1zM6 10h2v1h-2zM9 10h1v1h-1zM11 10h2v1h-2zM14 10h1v1h-1zM0 11h1v1h-1zM3 11h1v1h-1zM5 11h1v1h-1zM8 11h1v1h-1zM10 11h1v1h-1zM13 11h1v1h-1zM0 12h1v1h-1zM2 12h1v1h-1zM5 12h1v1h-1zM7 12h1v1h-1zM10 12h1v1h-1zM12 12h1v1h-1zM1 13h1v1h-1zM3 13h2v1h-2zM6 13h1v1h-1zM8 13h2v1h-2zM11 13h1v1h-1zM13 13h2v1h-2z"/><path fill="#fff" d="M8 2h2v1h-2zM10 4h1v1h-1zM10 6h2v1h-2zM8 7h3v1h-3zM7 8h2v1h-2zM6 9h2v1h-2zM2 11h1v1h-1zM7 11h1v1h-1zM12 11h1v1h-1zM15 11h1v1h-1zM1 12h1v1h-1zM4 12h1v1h-1zM6 12h1v1h-1zM9 12h1v1h-1zM11 12h1v1h-1zM14 12h1v1h-1zM2 14h1v1h-1zM4 14h2v1h-2zM7 14h1v1h-1zM9 14h2v1h-2zM12 14h1v1h-1zM14 14h2v1h-2z"/></svg><svg class="ic" style="left:61px;top:5px" width="17" height="17" viewBox="0 0 17 17" shape-rendering="crispEdges"><path fill="#000" d="M2 1h2v1h-2zM7 1h2v1h-2zM2 2h2v1h-2zM7 2h2v1h-2zM1 3h4v1h-4zM6 3h4v1h-4zM1 4h1v1h-1zM3 4h4v1h-4zM8 4h2v1h-2zM0 5h2v1h-2zM3 5h5v1h-5zM9 5h2v1h-2zM0 6h1v1h-1zM2 6h3v1h-3zM6 6h1v1h-1zM8 6h4v1h-4zM0 7h1v1h-1zM2 7h3v1h-3zM6 7h1v1h-1zM8 7h4v1h-4zM0 8h5v1h-5zM6 8h6v1h-6zM9 9h3v1h-3zM9 10h1v1h-1zM11 10h2v1h-2zM8 11h2v1h-2zM12 11h1v1h-1zM8 12h1v1h-1zM10 12h1v1h-1zM12 12h2v1h-2zM7 13h2v1h-2zM10 13h1v1h-1zM13 13h1v1h-1zM7 14h1v1h-1zM13 14h2v1h-2zM7 15h8v1h-8z"/><path fill="#fff" d="M2 4h1v1h-1zM7 4h1v1h-1zM2 5h1v1h-1zM8 5h1v1h-1zM1 6h1v1h-1zM7 6h1v1h-1zM1 7h1v1h-1zM7 7h1v1h-1z"/><path fill="#ff0" d="M10 10h1v1h-1zM10 11h2v1h-2zM9 12h1v1h-1zM11 12h1v1h-1zM9 13h1v1h-1zM11 13h2v1h-2zM8 14h5v1h-5z"/></svg><div class="sep" style="left:84px"></div><svg class="ic" style="left:92px;top:5px" width="17" height="17" viewBox="0 0 17 17" shape-rendering="crispEdges"><path fill="#000" d="M1 3h2v1h-2zM4 3h2v1h-2zM7 3h2v1h-2zM0 4h10v1h-10zM0 5h1v1h-1zM3 5h1v1h-1zM6 5h1v1h-1zM9 5h1v1h-1zM0 6h10v1h-10zM9 9h3v1h-3zM9 10h1v1h-1zM11 10h2v1h-2zM8 11h2v1h-2zM12 11h1v1h-1zM8 12h1v1h-1zM10 12h1v1h-1zM12 12h2v1h-2zM7 13h2v1h-2zM10 13h1v1h-1zM13 13h1v1h-1zM7 14h1v1h-1zM13 14h2v1h-2zM7 15h8v1h-8z"/><path fill="#808080" d="M1 5h2v1h-2zM4 5h2v1h-2zM7 5h2v1h-2z"/><path fill="#000080" d="M0 7h1v1h-1zM9 7h1v1h-1zM0 8h1v1h-1zM9 8h1v1h-1zM0 9h1v1h-1zM0 10h9v1h-9z"/><path fill="#a0a0ff" d="M1 7h8v1h-8zM1 8h8v1h-8zM1 9h8v1h-8z"/><path fill="#ff0" d="M10 10h1v1h-1zM10 11h2v1h-2zM9 12h1v1h-1zM11 12h1v1h-1zM9 13h1v1h-1zM11 13h2v1h-2zM8 14h5v1h-5z"/></svg><div class="sep" style="left:115px"></div><svg class="ic" style="left:123px;top:5px" width="17" height="17" viewBox="0 0 17 17" shape-rendering="crispEdges"><path fill="#000080" d="M0 1h16v1h-16zM1 2h14v1h-14z"/><path fill="#000" d="M7 3h1v1h-1zM1 4h10v1h-10zM0 5h2v1h-2zM4 5h1v1h-1zM7 5h1v1h-1zM10 5h2v1h-2zM0 6h2v1h-2zM4 6h1v1h-1zM7 6h1v1h-1zM10 6h2v1h-2zM0 7h12v1h-12zM1 8h10v1h-10zM9 9h3v1h-3zM9 10h1v1h-1zM11 10h2v1h-2zM8 11h2v1h-2zM12 11h1v1h-1zM8 12h1v1h-1zM10 12h1v1h-1zM12 12h2v1h-2zM7 13h2v1h-2zM10 13h1v1h-1zM13 13h1v1h-1zM7 14h1v1h-1zM13 14h2v1h-2zM7 15h8v1h-8z"/><path fill="#fff" d="M2 5h2v1h-2zM5 5h2v1h-2zM8 5h2v1h-2zM2 6h2v1h-2zM5 6h2v1h-2zM8 6h2v1h-2z"/><path fill="#ff0" d="M10 10h1v1h-1zM10 11h2v1h-2zM9 12h1v1h-1zM11 12h1v1h-1zM9 13h1v1h-1zM11 13h2v1h-2zM8 14h5v1h-5z"/></svg><div class="sep" style="left:147px"></div><svg class="ic" style="left:154px;top:5px" width="17" height="17" viewBox="0 0 17 17" shape-rendering="crispEdges"><path fill="#808080" d="M5 2h2v1h-2zM8 2h2v1h-2zM5 3h2v1h-2zM8 3h2v1h-2zM5 4h2v1h-2zM8 4h2v1h-2zM5 5h2v1h-2zM8 5h2v1h-2zM5 6h2v1h-2zM8 6h2v1h-2zM5 7h2v1h-2zM8 7h2v1h-2zM1 9h2v1h-2zM4 9h1v1h-1zM6 9h2v1h-2zM9 9h1v1h-1zM11 9h2v1h-2zM14 9h1v1h-1zM0 10h1v1h-1zM3 10h1v1h-1zM5 10h1v1h-1zM8 10h1v1h-1zM10 10h1v1h-1zM13 10h1v1h-1zM0 11h1v1h-1zM2 11h1v1h-1zM5 11h1v1h-1zM7 11h1v1h-1zM10 11h1v1h-1zM12 11h1v1h-1zM1 12h1v1h-1zM3 12h2v1h-2zM6 12h1v1h-1zM8 12h2v1h-2zM11 12h1v1h-1zM13 12h2v1h-2z"/><path fill="#fff" d="M7 3h1v1h-1zM10 3h1v1h-1zM7 4h1v1h-1zM10 4h1v1h-1zM7 5h1v1h-1zM10 5h1v1h-1zM7 6h1v1h-1zM10 6h1v1h-1zM7 7h1v1h-1zM10 7h1v1h-1zM6 8h2v1h-2zM9 8h2v1h-2zM2 10h1v1h-1zM7 10h1v1h-1zM12 10h1v1h-1zM15 10h1v1h-1zM1 11h1v1h-1zM4 11h1v1h-1zM6 11h1v1h-1zM9 11h1v1h-1zM11 11h1v1h-1zM14 11h1v1h-1zM2 13h1v1h-1zM4 13h2v1h-2zM7 13h1v1h-1zM9 13h2v1h-2zM12 13h1v1h-1zM14 13h2v1h-2z"/></svg><svg class="ic" style="left:177px;top:5px" width="17" height="17" viewBox="0 0 17 17" shape-rendering="crispEdges"><path fill="#808080" d="M3 3h3v1h-3zM8 3h3v1h-3zM3 4h3v1h-3zM8 4h3v1h-3zM3 5h3v1h-3zM8 5h3v1h-3zM3 6h3v1h-3zM8 6h3v1h-3zM3 7h3v1h-3zM8 7h3v1h-3zM3 8h3v1h-3zM8 8h3v1h-3zM3 9h3v1h-3zM8 9h3v1h-3zM3 10h3v1h-3zM8 10h3v1h-3zM3 11h3v1h-3zM8 11h3v1h-3zM3 12h3v1h-3zM8 12h3v1h-3z"/><path fill="#fff" d="M6 4h1v1h-1zM11 4h1v1h-1zM6 5h1v1h-1zM11 5h1v1h-1zM6 6h1v1h-1zM11 6h1v1h-1zM6 7h1v1h-1zM11 7h1v1h-1zM6 8h1v1h-1zM11 8h1v1h-1zM6 9h1v1h-1zM11 9h1v1h-1zM6 10h1v1h-1zM11 10h1v1h-1zM6 11h1v1h-1zM11 11h1v1h-1zM6 12h1v1h-1zM11 12h1v1h-1zM4 13h3v1h-3zM9 13h3v1h-3z"/></svg><div class="sep" style="left:200px"></div><svg class="ic" style="left:208px;top:5px" width="17" height="17" viewBox="0 0 17 17" shape-rendering="crispEdges"><path fill="#808080" d="M1 1h7v1h-7zM1 2h1v1h-1zM7 2h2v1h-2zM1 3h1v1h-1zM3 3h3v1h-3zM7 3h1v1h-1zM9 3h1v1h-1zM1 4h1v1h-1zM3 4h1v1h-1zM7 4h4v1h-4zM1 5h1v1h-1zM3 5h3v1h-3zM10 5h1v1h-1zM1 6h1v1h-1zM3 6h1v1h-1zM5 6h1v1h-1zM10 6h1v1h-1zM1 7h1v1h-1zM3 7h3v1h-3zM10 7h1v1h-1zM1 8h1v1h-1zM5 8h1v1h-1zM10 8h1v1h-1zM1 9h1v1h-1zM3 9h3v1h-3zM7 9h8v1h-8zM1 10h1v1h-1zM7 10h2v1h-2zM10 10h1v1h-1zM12 10h1v1h-1zM14 10h1v1h-1zM1 11h1v1h-1zM7 11h2v1h-2zM10 11h1v1h-1zM12 11h1v1h-1zM14 11h1v1h-1zM1 12h1v1h-1zM7 12h8v1h-8zM1 13h10v1h-10z"/><path fill="#fff" d="M2 2h5v1h-5zM2 3h1v1h-1zM8 3h1v1h-1zM2 4h1v1h-1zM4 4h3v1h-3zM2 5h1v1h-1zM8 5h2v1h-2zM11 5h1v1h-1zM2 6h1v1h-1zM4 6h1v1h-1zM6 6h1v1h-1zM11 6h1v1h-1zM2 7h1v1h-1zM6 7h1v1h-1zM11 7h1v1h-1zM2 8h1v1h-1zM4 8h1v1h-1zM6 8h1v1h-1zM11 8h1v1h-1zM2 9h1v1h-1zM6 9h1v1h-1zM2 10h1v1h-1zM4 10h3v1h-3zM9 10h1v1h-1zM11 10h1v1h-1zM13 10h1v1h-1zM15 10h1v1h-1zM2 11h1v1h-1zM9 11h1v1h-1zM11 11h1v1h-1zM13 11h1v1h-1zM15 11h1v1h-1zM2 12h1v1h-1zM15 12h1v1h-1zM11 13h5v1h-5zM2 14h10v1h-10z"/></svg><svg class="ic" style="left:231px;top:5px" width="17" height="17" viewBox="0 0 17 17" shape-rendering="crispEdges"><path fill="#808080" d="M7 1h7v1h-7zM7 2h1v1h-1zM13 2h2v1h-2zM7 3h1v1h-1zM10 3h1v1h-1zM13 3h1v1h-1zM15 3h1v1h-1zM7 4h1v1h-1zM9 4h3v1h-3zM13 4h3v1h-3zM7 5h1v1h-1zM9 5h3v1h-3zM15 5h1v1h-1zM7 6h1v1h-1zM10 6h1v1h-1zM15 6h1v1h-1zM7 7h1v1h-1zM10 7h1v1h-1zM15 7h1v1h-1zM7 8h1v1h-1zM10 8h1v1h-1zM15 8h1v1h-1zM0 9h8v1h-8zM10 9h1v1h-1zM15 9h1v1h-1zM0 10h2v1h-2zM3 10h1v1h-1zM5 10h1v1h-1zM7 10h1v1h-1zM15 10h1v1h-1zM0 11h2v1h-2zM3 11h1v1h-1zM5 11h1v1h-1zM7 11h1v1h-1zM15 11h1v1h-1zM0 12h8v1h-8zM15 12h1v1h-1zM7 13h9v1h-9z"/><path fill="#fff" d="M8 2h5v1h-5zM8 3h1v1h-1zM14 3h1v1h-1zM8 4h1v1h-1zM16 4h1v1h-1zM8 5h1v1h-1zM12 5h1v1h-1zM14 5h1v1h-1zM16 5h1v1h-1zM8 6h1v1h-1zM11 6h2v1h-2zM16 6h1v1h-1zM8 7h1v1h-1zM11 7h1v1h-1zM16 7h1v1h-1zM8 8h1v1h-1zM11 8h1v1h-1zM16 8h1v1h-1zM8 9h1v1h-1zM11 9h1v1h-1zM16 9h1v1h-1zM2 10h1v1h-1zM4 10h1v1h-1zM6 10h1v1h-1zM8 10h1v1h-1zM11 10h1v1h-1zM16 10h1v1h-1zM2 11h1v1h-1zM4 11h1v1h-1zM6 11h1v1h-1zM8 11h1v1h-1zM16 11h1v1h-1zM8 12h1v1h-1zM16 12h1v1h-1zM1 13h6v1h-6zM16 13h1v1h-1zM8 14h9v1h-9z"/></svg><svg class="ic" style="left:254px;top:5px" width="17" height="17" viewBox="0 0 17 17" shape-rendering="crispEdges"><path fill="#808080" d="M7 1h8v1h-8zM7 2h1v1h-1zM9 2h1v1h-1zM12 2h1v1h-1zM14 2h1v1h-1zM7 3h1v1h-1zM9 3h4v1h-4zM14 3h1v1h-1zM4 4h6v1h-6zM12 4h3v1h-3zM4 5h1v1h-1zM7 5h1v1h-1zM9 5h4v1h-4zM14 5h1v1h-1zM4 6h1v1h-1zM7 6h1v1h-1zM9 6h1v1h-1zM12 6h1v1h-1zM14 6h1v1h-1zM1 7h4v1h-4zM7 7h3v1h-3zM12 7h2v1h-2zM1 8h1v1h-1zM7 8h1v1h-1zM10 8h2v1h-2zM13 8h2v1h-2zM1 9h1v1h-1zM7 9h1v1h-1zM14 9h2v1h-2zM1 10h1v1h-1zM7 10h1v1h-1zM15 10h1v1h-1zM1 11h1v1h-1zM4 11h4v1h-4zM1 12h1v1h-1zM4 12h1v1h-1zM1 13h4v1h-4z"/><path fill="#fff" d="M8 2h1v1h-1zM10 2h2v1h-2zM13 2h1v1h-1zM15 2h1v1h-1zM8 3h1v1h-1zM13 3h1v1h-1zM15 3h1v1h-1zM10 4h2v1h-2zM15 4h1v1h-1zM5 5h2v1h-2zM8 5h1v1h-1zM13 5h1v1h-1zM15 5h1v1h-1zM5 6h1v1h-1zM8 6h1v1h-1zM10 6h2v1h-2zM13 6h1v1h-1zM15 6h1v1h-1zM5 7h1v1h-1zM10 7h1v1h-1zM15 7h1v1h-1zM2 8h4v1h-4zM8 8h2v1h-2zM2 9h1v1h-1zM8 9h1v1h-1zM11 9h2v1h-2zM2 10h1v1h-1zM8 10h1v1h-1zM16 10h1v1h-1zM2 11h1v1h-1zM8 11h1v1h-1zM16 11h1v1h-1zM2 12h1v1h-1zM5 12h4v1h-4zM5 13h1v1h-1zM2 14h4v1h-4z"/></svg><div class="sep" style="left:276px"></div><svg class="ic" style="left:284px;top:5px" width="17" height="17" viewBox="0 0 17 17" shape-rendering="crispEdges"><path fill="#808080" d="M1 1h7v1h-7zM1 2h1v1h-1zM7 2h2v1h-2zM1 3h1v1h-1zM3 3h2v1h-2zM7 3h1v1h-1zM9 3h1v1h-1zM1 4h1v1h-1zM3 4h1v1h-1zM5 4h1v1h-1zM7 4h4v1h-4zM1 5h1v1h-1zM3 5h3v1h-3zM10 5h1v1h-1zM1 6h1v1h-1zM3 6h1v1h-1zM10 6h1v1h-1zM1 7h1v1h-1zM3 7h1v1h-1zM10 7h1v1h-1zM1 8h1v1h-1zM3 8h3v1h-3zM7 8h8v1h-8zM1 9h1v1h-1zM7 9h2v1h-2zM10 9h1v1h-1zM12 9h1v1h-1zM14 9h1v1h-1zM1 10h14v1h-14z"/><path fill="#fff" d="M2 2h5v1h-5zM2 3h1v1h-1zM8 3h1v1h-1zM2 4h1v1h-1zM4 4h1v1h-1zM2 5h1v1h-1zM6 5h1v1h-1zM8 5h2v1h-2zM11 5h1v1h-1zM2 6h1v1h-1zM4 6h3v1h-3zM11 6h1v1h-1zM2 7h1v1h-1zM4 7h1v1h-1zM11 7h1v1h-1zM2 8h1v1h-1zM2 9h1v1h-1zM4 9h3v1h-3zM9 9h1v1h-1zM11 9h1v1h-1zM13 9h1v1h-1zM15 9h1v1h-1zM15 10h1v1h-1zM2 11h14v1h-14z"/></svg></div>
<div class="tb" style="left:0px;top:69px;width:640px"><div class="grip" style="left:2px"></div><div class="grip" style="left:6px"></div><svg class="ic" style="left:13px;top:5px" width="17" height="17" viewBox="0 0 17 17" shape-rendering="crispEdges"><path fill="#000" d="M4 4h4v1h-4zM3 5h1v1h-1zM8 5h1v1h-1zM3 6h1v1h-1zM8 6h1v1h-1zM3 7h1v1h-1zM8 7h1v1h-1zM3 8h1v1h-1zM8 8h1v1h-1zM4 9h5v1h-5zM8 10h2v1h-2zM9 11h2v1h-2zM10 12h2v1h-2z"/></svg><svg class="ic" style="left:36px;top:5px" width="17" height="17" viewBox="0 0 17 17" shape-rendering="crispEdges"><path fill="#000" d="M3 1h4v1h-4zM2 2h2v1h-2zM6 2h2v1h-2zM1 3h2v1h-2zM7 3h2v1h-2zM1 4h1v1h-1zM8 4h1v1h-1zM1 5h1v1h-1zM8 5h1v1h-1zM1 6h1v1h-1zM8 6h1v1h-1zM1 7h2v1h-2zM7 7h2v1h-2zM2 8h2v1h-2zM6 8h3v1h-3zM3 9h7v1h-7zM7 10h4v1h-4zM8 11h4v1h-4zM9 12h4v1h-4zM10 13h3v1h-3zM11 14h1v1h-1z"/><path fill="#ff0" d="M11 1h2v1h-2zM10 2h3v1h-3zM9 3h4v1h-4zM9 4h3v1h-3zM9 5h2v1h-2zM0 9h3v1h-3zM0 10h6v1h-6zM0 11h6v1h-6zM1 12h4v1h-4zM1 13h3v1h-3z"/></svg><svg class="ic" style="left:59px;top:5px" width="17" height="17" viewBox="0 0 17 17" shape-rendering="crispEdges"><path fill="#000" d="M4 1h4v1h-4zM2 2h2v1h-2zM8 2h2v1h-2zM2 3h1v1h-1zM9 3h1v1h-1zM1 4h1v1h-1zM10 4h1v1h-1zM1 5h1v1h-1zM10 5h1v1h-1zM1 6h1v1h-1zM10 6h1v1h-1zM1 7h1v1h-1zM10 7h1v1h-1zM1 8h1v1h-1zM10 8h1v1h-1zM2 9h1v1h-1zM9 9h2v1h-2zM2 10h2v1h-2zM8 10h4v1h-4zM4 11h4v1h-4zM9 11h4v1h-4zM10 12h4v1h-4zM11 13h3v1h-3zM12 14h1v1h-1z"/><path fill="#d4d0c8" d="M4 2h1v1h-1zM7 2h1v1h-1zM3 3h1v1h-1zM8 3h1v1h-1zM2 4h1v1h-1zM9 4h1v1h-1zM2 8h1v1h-1zM9 8h1v1h-1zM3 9h1v1h-1zM8 9h1v1h-1zM4 10h1v1h-1zM7 10h1v1h-1z"/><path fill="#808080" d="M6 5h1v1h-1zM5 6h1v1h-1zM4 7h1v1h-1z"/></svg><svg class="ic" style="left:82px;top:5px" width="17" height="17" viewBox="0 0 17 17" shape-rendering="crispEdges"><path fill="#808080" d="M4 1h1v1h-1zM6 1h2v1h-2zM2 2h1v1h-1zM8 2h1v1h-1zM10 3h1v1h-1zM1 4h1v1h-1zM1 5h1v1h-1zM10 5h1v1h-1zM10 6h1v1h-1zM1 7h1v1h-1zM2 8h1v1h-1zM8 8h2v1h-2zM4 9h2v1h-2zM7 9h1v1h-1zM9 9h2v1h-2zM10 10h2v1h-2zM11 11h2v1h-2zM12 12h2v1h-2zM13 13h2v1h-2z"/><path fill="#fff" d="M5 2h1v1h-1zM7 2h1v1h-1zM3 3h1v1h-1zM9 3h1v1h-1zM11 4h1v1h-1zM2 5h1v1h-1zM2 6h1v1h-1zM11 6h1v1h-1zM11 7h1v1h-1zM3 9h1v1h-1zM5 10h2v1h-2zM8 10h1v1h-1zM14 14h2v1h-2z"/></svg><div class="sep" style="left:106px"></div><div class="chk" style="left:110px;top:3px"></div><svg class="ic" style="left:114px;top:5px" width="17" height="17" viewBox="0 0 17 17" shape-rendering="crispEdges"><path fill="#000" d="M2 3h1v1h-1zM6 3h1v1h-1zM10 3h1v1h-1zM14 3h1v1h-1zM2 7h1v1h-1zM6 7h1v1h-1zM10 7h1v1h-1zM14 7h1v1h-1zM2 11h1v1h-1zM6 11h1v1h-1zM10 11h1v1h-1zM14 11h1v1h-1zM2 15h1v1h-1zM6 15h1v1h-1zM10 15h1v1h-1zM14 15h1v1h-1z"/></svg><div class="chk" style="left:133px;top:3px"></div><svg class="ic" style="left:137px;top:5px" width="17" height="17" viewBox="0 0 17 17" shape-rendering="crispEdges"><path fill="#000" d="M5 2h7v1h-7zM3 3h2v1h-2zM12 3h2v1h-2zM2 4h1v1h-1zM14 4h1v1h-1zM2 5h1v1h-1zM6 5h1v1h-1zM8 5h1v1h-1zM10 5h1v1h-1zM14 5h1v1h-1zM2 6h1v1h-1zM7 6h1v1h-1zM9 6h1v1h-1zM14 6h1v1h-1zM3 7h2v1h-2zM13 7h1v1h-1zM5 8h6v1h-6zM13 8h1v1h-1zM11 9h1v1h-1zM13 9h1v1h-1zM11 10h1v1h-1zM13 10h1v1h-1zM1 11h9v1h-9zM11 11h1v1h-1zM13 11h1v1h-1zM0 12h1v1h-1zM9 12h4v1h-4zM0 13h1v1h-1zM8 13h4v1h-4zM0 14h1v1h-1zM9 14h2v1h-2zM1 15h9v1h-9z"/><path fill="#fff" d="M5 3h7v1h-7zM3 4h11v1h-11zM3 5h3v1h-3zM7 5h1v1h-1zM9 5h1v1h-1zM11 5h3v1h-3zM3 6h4v1h-4zM8 6h1v1h-1zM10 6h4v1h-4zM5 7h8v1h-8zM11 8h2v1h-2zM12 9h1v1h-1zM12 10h1v1h-1zM12 11h1v1h-1z"/><path fill="#ffffa0" d="M1 12h8v1h-8zM1 13h7v1h-7zM1 14h8v1h-8z"/></svg><div class="chk" style="left:156px;top:3px"></div><svg class="ic" style="left:160px;top:5px" width="17" height="17" viewBox="0 0 17 17" shape-rendering="crispEdges"><path fill="#000080" d="M3 3h1v1h-1zM2 4h3v1h-3zM3 5h1v1h-1zM3 8h1v1h-1zM2 9h3v1h-3zM3 10h1v1h-1zM3 13h1v1h-1zM2 14h3v1h-3zM3 15h1v1h-1z"/><path fill="#808080" d="M7 4h7v1h-7zM7 9h7v1h-7zM7 14h7v1h-7z"/></svg><svg class="ic" style="left:183px;top:5px" width="17" height="17" viewBox="0 0 17 17" shape-rendering="crispEdges"><path fill="#2a7a2a" d="M0 1h2v1h-2zM13 1h2v1h-2zM0 2h2v1h-2zM13 2h2v1h-2zM0 3h2v1h-2zM13 3h2v1h-2zM0 4h2v1h-2zM13 4h2v1h-2zM0 5h2v1h-2zM13 5h2v1h-2zM0 6h2v1h-2zM13 6h2v1h-2zM0 7h2v1h-2zM13 7h2v1h-2zM0 8h2v1h-2zM13 8h2v1h-2zM0 9h2v1h-2zM13 9h2v1h-2zM0 10h2v1h-2zM13 10h2v1h-2zM0 11h2v1h-2zM13 11h2v1h-2zM0 12h2v1h-2zM13 12h2v1h-2zM0 13h2v1h-2zM13 13h2v1h-2zM0 14h2v1h-2zM13 14h2v1h-2zM0 15h2v1h-2zM13 15h2v1h-2z"/><path fill="#000" d="M3 3h1v1h-1zM6 3h1v1h-1zM8 3h1v1h-1zM11 3h1v1h-1zM3 4h1v1h-1zM6 4h1v1h-1zM8 4h1v1h-1zM11 4h1v1h-1zM2 5h5v1h-5zM8 5h5v1h-5zM3 6h1v1h-1zM6 6h1v1h-1zM8 6h1v1h-1zM11 6h1v1h-1zM3 7h1v1h-1zM6 7h1v1h-1zM8 7h1v1h-1zM11 7h1v1h-1zM3 9h2v1h-2zM7 9h3v1h-3zM2 10h6v1h-6zM9 10h4v1h-4zM2 11h6v1h-6zM9 11h4v1h-4zM3 12h2v1h-2zM7 12h3v1h-3z"/></svg><div class="chk" style="left:202px;top:3px"></div><svg class="ic" style="left:206px;top:5px" width="17" height="17" viewBox="0 0 17 17" shape-rendering="crispEdges"><path fill="#008000" d="M1 3h2v1h-2zM1 4h2v1h-2zM1 5h2v1h-2zM1 6h2v1h-2zM1 7h2v1h-2zM1 8h2v1h-2zM1 9h2v1h-2zM1 10h2v1h-2zM1 11h2v1h-2zM1 12h2v1h-2zM1 13h2v1h-2zM1 14h2v1h-2zM1 15h2v1h-2z"/><path fill="#000" d="M4 3h2v1h-2zM7 3h1v1h-1zM9 3h1v1h-1zM11 3h1v1h-1zM13 3h2v1h-2zM4 4h1v1h-1zM14 4h1v1h-1zM4 5h1v1h-1zM14 5h1v1h-1zM4 6h2v1h-2zM7 6h1v1h-1zM9 6h1v1h-1zM11 6h1v1h-1zM13 6h2v1h-2zM4 8h2v1h-2zM7 8h1v1h-1zM9 8h1v1h-1zM11 8h1v1h-1zM13 8h2v1h-2zM4 9h1v1h-1zM14 9h1v1h-1zM4 10h1v1h-1zM14 10h1v1h-1zM4 11h2v1h-2zM7 11h1v1h-1zM9 11h1v1h-1zM11 11h1v1h-1zM13 11h2v1h-2zM4 13h2v1h-2zM7 13h1v1h-1zM9 13h1v1h-1zM11 13h1v1h-1zM13 13h2v1h-2zM4 14h1v1h-1zM14 14h1v1h-1zM4 15h2v1h-2zM7 15h1v1h-1zM9 15h1v1h-1zM11 15h1v1h-1zM13 15h2v1h-2z"/><path fill="#ff0" d="M5 4h9v1h-9zM5 5h9v1h-9zM6 6h1v1h-1zM8 6h1v1h-1zM10 6h1v1h-1zM12 6h1v1h-1zM5 9h9v1h-9zM5 10h9v1h-9zM6 11h1v1h-1zM8 11h1v1h-1zM10 11h1v1h-1zM12 11h1v1h-1zM5 14h9v1h-9zM6 15h1v1h-1zM8 15h1v1h-1zM10 15h1v1h-1zM12 15h1v1h-1z"/></svg><svg class="ic" style="left:229px;top:5px" width="17" height="17" viewBox="0 0 17 17" shape-rendering="crispEdges"><path fill="#000" d="M0 2h4v1h-4zM2 3h1v1h-1zM2 4h1v1h-1zM2 5h1v1h-1zM2 6h1v1h-1zM2 7h5v1h-5zM2 8h1v1h-1zM6 8h1v1h-1zM2 9h1v1h-1zM6 9h1v1h-1zM2 10h1v1h-1zM6 10h1v1h-1zM2 11h1v1h-1zM6 11h1v1h-1zM2 12h1v1h-1zM6 12h4v1h-4zM2 13h1v1h-1zM6 13h1v1h-1zM2 14h1v1h-1zM6 14h1v1h-1z"/><path fill="#0f0" d="M4 2h9v1h-9zM12 3h1v1h-1zM4 4h9v1h-9zM8 7h7v1h-7zM14 8h1v1h-1zM8 9h7v1h-7zM10 12h6v1h-6zM15 13h1v1h-1zM10 14h6v1h-6z"/><path fill="#4fd24f" d="M4 3h8v1h-8zM8 8h6v1h-6zM10 13h5v1h-5z"/></svg><div class="sep" style="left:253px"></div><svg class="ic" style="left:260px;top:5px" width="17" height="17" viewBox="0 0 17 17" shape-rendering="crispEdges"><path fill="#000080" d="M0 8h1v1h-1zM2 8h1v1h-1zM4 8h1v1h-1zM6 8h1v1h-1zM8 8h1v1h-1zM10 8h1v1h-1zM12 8h1v1h-1zM14 8h1v1h-1zM1 9h1v1h-1zM3 9h1v1h-1zM5 9h1v1h-1zM7 9h1v1h-1zM9 9h1v1h-1zM11 9h1v1h-1zM13 9h1v1h-1zM15 9h1v1h-1z"/><path fill="#3a6ea5" d="M1 8h1v1h-1zM3 8h1v1h-1zM5 8h1v1h-1zM7 8h1v1h-1zM9 8h1v1h-1zM11 8h1v1h-1zM13 8h1v1h-1zM15 8h1v1h-1zM0 9h1v1h-1zM2 9h1v1h-1zM4 9h1v1h-1zM6 9h1v1h-1zM8 9h1v1h-1zM10 9h1v1h-1zM12 9h1v1h-1zM14 9h1v1h-1z"/><path fill="#008080" d="M0 10h1v1h-1zM4 10h1v1h-1zM8 10h1v1h-1zM12 10h1v1h-1zM0 11h15v1h-15zM0 12h1v1h-1zM4 12h1v1h-1zM8 12h1v1h-1zM12 12h1v1h-1zM0 13h1v1h-1zM4 13h1v1h-1zM8 13h1v1h-1zM12 13h1v1h-1zM0 14h15v1h-15zM0 15h1v1h-1zM4 15h1v1h-1zM8 15h1v1h-1zM12 15h1v1h-1z"/><text x="0" y="7" font-family="Liberation Sans,sans-serif" font-size="7.2" font-weight="bold" fill="#000" text-anchor="start" textLength="15.5" lengthAdjust="spacingAndGlyphs">SMA</text></svg><div class="chk" style="left:279px;top:3px"></div><svg class="ic" style="left:283px;top:5px" width="17" height="17" viewBox="0 0 17 17" shape-rendering="crispEdges"><path fill="#000080" d="M1 3h14v1h-14zM1 4h1v1h-1zM14 4h1v1h-1zM1 5h14v1h-14zM1 6h1v1h-1zM14 6h1v1h-1zM1 7h1v1h-1zM14 7h1v1h-1zM1 8h1v1h-1zM14 8h1v1h-1zM1 9h1v1h-1zM14 9h1v1h-1zM1 10h1v1h-1zM14 10h1v1h-1zM1 11h1v1h-1zM14 11h1v1h-1zM1 12h1v1h-1zM14 12h1v1h-1zM1 13h1v1h-1zM14 13h1v1h-1zM1 14h1v1h-1zM14 14h1v1h-1zM1 15h14v1h-14z"/><path fill="#00f" d="M2 4h12v1h-12z"/><path fill="#fff" d="M2 6h12v1h-12zM2 7h12v1h-12zM2 8h12v1h-12zM2 9h12v1h-12zM2 10h12v1h-12zM2 11h12v1h-12zM2 12h12v1h-12zM2 13h12v1h-12zM2 14h12v1h-12z"/><text x="8" y="14" font-family="Liberation Mono,monospace" font-size="10" font-weight="bold" fill="#000" text-anchor="middle" >CI</text></svg><div class="sep" style="left:307px"></div><div class="chk" style="left:310px;top:3px"></div><svg class="ic" style="left:314px;top:5px" width="17" height="17" viewBox="0 0 17 17" shape-rendering="crispEdges"><path fill="#000" d="M2 2h1v1h-1zM2 3h2v1h-2zM2 4h1v1h-1zM4 4h1v1h-1zM2 5h1v1h-1zM5 5h1v1h-1zM2 6h1v1h-1zM6 6h1v1h-1zM2 7h1v1h-1zM7 7h1v1h-1zM2 8h1v1h-1zM8 8h1v1h-1zM2 9h1v1h-1zM9 9h1v1h-1zM2 10h1v1h-1zM7 10h4v1h-4zM2 11h1v1h-1zM4 11h1v1h-1zM7 11h1v1h-1zM2 12h2v1h-2zM5 12h1v1h-1zM8 12h1v1h-1zM2 13h1v1h-1zM5 13h1v1h-1zM8 13h1v1h-1zM6 14h1v1h-1zM9 14h1v1h-1zM6 15h3v1h-3z"/><path fill="#fff" d="M3 4h1v1h-1zM3 5h2v1h-2zM3 6h3v1h-3zM3 7h4v1h-4zM3 8h5v1h-5zM3 9h6v1h-6zM3 10h4v1h-4zM3 11h1v1h-1zM5 11h2v1h-2zM6 12h2v1h-2zM6 13h2v1h-2zM7 14h2v1h-2z"/></svg><svg class="ic" style="left:337px;top:5px" width="17" height="17" viewBox="0 0 17 17" shape-rendering="crispEdges"><path fill="#000" d="M3 3h1v1h-1zM9 3h1v1h-1zM3 4h1v1h-1zM9 4h1v1h-1zM3 5h1v1h-1zM9 5h1v1h-1zM3 6h1v1h-1zM9 6h1v1h-1zM3 7h1v1h-1zM9 7h1v1h-1zM-1 8h5v1h-5zM9 8h6v1h-6zM3 9h1v1h-1zM9 9h1v1h-1zM3 10h1v1h-1zM9 10h1v1h-1zM3 11h1v1h-1zM9 11h1v1h-1zM3 12h1v1h-1zM9 12h1v1h-1zM3 13h1v1h-1zM9 13h1v1h-1z"/></svg><svg class="ic" style="left:360px;top:5px" width="17" height="17" viewBox="0 0 17 17" shape-rendering="crispEdges"><path fill="#000" d="M3 3h1v1h-1zM9 3h1v1h-1zM3 4h1v1h-1zM8 4h2v1h-2zM3 5h1v1h-1zM8 5h2v1h-2zM3 6h1v1h-1zM7 6h1v1h-1zM9 6h1v1h-1zM3 7h1v1h-1zM7 7h1v1h-1zM9 7h1v1h-1zM-1 8h5v1h-5zM6 8h1v1h-1zM9 8h6v1h-6zM3 9h1v1h-1zM6 9h1v1h-1zM9 9h1v1h-1zM3 10h1v1h-1zM5 10h1v1h-1zM9 10h1v1h-1zM3 11h1v1h-1zM5 11h1v1h-1zM9 11h1v1h-1zM3 12h2v1h-2zM9 12h1v1h-1zM3 13h2v1h-2zM9 13h1v1h-1z"/></svg><svg class="ic" style="left:383px;top:5px" width="17" height="17" viewBox="0 0 17 17" shape-rendering="crispEdges"><path fill="#000" d="M-1 3h1v1h-1zM3 3h1v1h-1zM9 3h1v1h-1zM13 3h1v1h-1zM-1 4h1v1h-1zM3 4h1v1h-1zM9 4h1v1h-1zM13 4h1v1h-1zM-1 5h1v1h-1zM3 5h1v1h-1zM9 5h1v1h-1zM13 5h1v1h-1zM-1 6h1v1h-1zM3 6h1v1h-1zM9 6h1v1h-1zM13 6h1v1h-1zM-1 7h1v1h-1zM3 7h1v1h-1zM9 7h1v1h-1zM13 7h1v1h-1zM-1 8h5v1h-5zM9 8h5v1h-5zM3 9h1v1h-1zM9 9h1v1h-1zM3 10h1v1h-1zM9 10h1v1h-1zM3 11h1v1h-1zM9 11h1v1h-1zM3 12h1v1h-1zM9 12h1v1h-1zM3 13h1v1h-1zM9 13h1v1h-1z"/></svg><svg class="ic" style="left:406px;top:5px" width="17" height="17" viewBox="0 0 17 17" shape-rendering="crispEdges"><path fill="#000" d="M-1 3h1v1h-1zM3 3h1v1h-1zM9 3h1v1h-1zM13 3h1v1h-1zM-1 4h1v1h-1zM3 4h1v1h-1zM8 4h2v1h-2zM13 4h1v1h-1zM-1 5h1v1h-1zM3 5h1v1h-1zM8 5h2v1h-2zM13 5h1v1h-1zM-1 6h1v1h-1zM3 6h1v1h-1zM7 6h1v1h-1zM9 6h1v1h-1zM13 6h1v1h-1zM-1 7h1v1h-1zM3 7h1v1h-1zM7 7h1v1h-1zM9 7h1v1h-1zM13 7h1v1h-1zM-1 8h5v1h-5zM6 8h1v1h-1zM9 8h5v1h-5zM3 9h1v1h-1zM6 9h1v1h-1zM9 9h1v1h-1zM3 10h1v1h-1zM5 10h1v1h-1zM9 10h1v1h-1zM3 11h1v1h-1zM5 11h1v1h-1zM9 11h1v1h-1zM3 12h2v1h-2zM9 12h1v1h-1zM3 13h2v1h-2zM9 13h1v1h-1z"/></svg><svg class="ic" style="left:429px;top:5px" width="17" height="17" viewBox="0 0 17 17" shape-rendering="crispEdges"><path fill="#000" d="M6 2h1v1h-1zM6 3h1v1h-1zM6 4h1v1h-1zM6 5h1v1h-1zM6 6h1v1h-1zM6 7h1v1h-1zM6 8h1v1h-1zM6 9h1v1h-1zM6 10h1v1h-1zM6 11h1v1h-1zM6 12h1v1h-1zM6 13h1v1h-1z"/></svg><svg class="ic" style="left:452px;top:5px" width="17" height="17" viewBox="0 0 17 17" shape-rendering="crispEdges"><path fill="#000" d="M-1 7h16v1h-16zM-1 8h16v1h-16z"/></svg><svg class="ic" style="left:475px;top:5px" width="17" height="17" viewBox="0 0 17 17" shape-rendering="crispEdges"><path fill="#000" d="M5 3h4v1h-4zM3 4h2v1h-2zM9 4h2v1h-2zM2 5h1v1h-1zM11 5h1v1h-1zM2 6h1v1h-1zM11 6h1v1h-1zM2 7h1v1h-1zM11 7h1v1h-1zM-1 8h4v1h-4zM11 8h4v1h-4zM2 9h1v1h-1zM11 9h1v1h-1zM2 10h1v1h-1zM11 10h1v1h-1zM3 11h2v1h-2zM9 11h2v1h-2zM5 12h4v1h-4z"/></svg><svg class="ic" style="left:498px;top:5px" width="17" height="17" viewBox="0 0 17 17" shape-rendering="crispEdges"><path fill="#000" d="M11 2h1v1h-1zM5 3h4v1h-4zM10 3h1v1h-1zM3 4h2v1h-2zM9 4h2v1h-2zM2 5h1v1h-1zM8 5h1v1h-1zM11 5h1v1h-1zM2 6h1v1h-1zM7 6h1v1h-1zM11 6h1v1h-1zM2 7h1v1h-1zM7 7h1v1h-1zM11 7h1v1h-1zM-1 8h4v1h-4zM6 8h1v1h-1zM11 8h4v1h-4zM2 9h1v1h-1zM5 9h1v1h-1zM11 9h1v1h-1zM2 10h1v1h-1zM4 10h1v1h-1zM11 10h1v1h-1zM3 11h2v1h-2zM9 11h2v1h-2zM2 12h1v1h-1zM5 12h4v1h-4zM1 13h1v1h-1z"/></svg><svg class="ic" style="left:521px;top:5px" width="17" height="17" viewBox="0 0 17 17" shape-rendering="crispEdges"><path fill="#000" d="M3 2h8v1h-8zM3 3h1v1h-1zM10 3h1v1h-1zM-1 4h5v1h-5zM10 4h5v1h-5zM3 5h8v1h-8zM3 6h1v1h-1zM10 6h1v1h-1zM3 7h1v1h-1zM10 7h1v1h-1zM3 8h8v1h-8zM3 9h1v1h-1zM10 9h1v1h-1zM3 10h1v1h-1zM10 10h1v1h-1zM3 11h8v1h-8z"/></svg><svg class="ic" style="left:544px;top:5px" width="17" height="17" viewBox="0 0 17 17" shape-rendering="crispEdges"><path fill="#808080" d="M3 2h8v1h-8zM0 3h4v1h-4zM10 3h4v1h-4zM3 4h1v1h-1zM10 4h1v1h-1zM3 5h8v1h-8zM0 6h4v1h-4zM10 6h4v1h-4zM3 7h1v1h-1zM10 7h1v1h-1zM3 8h8v1h-8zM0 9h4v1h-4zM10 9h3v1h-3zM3 10h1v1h-1zM10 10h1v1h-1zM3 11h8v1h-8z"/><path fill="#fff" d="M4 3h6v1h-6zM1 4h2v1h-2zM4 4h1v1h-1zM11 4h4v1h-4zM11 5h1v1h-1zM4 6h6v1h-6zM1 7h2v1h-2zM4 7h1v1h-1zM11 7h4v1h-4zM11 8h1v1h-1zM4 9h6v1h-6zM1 10h2v1h-2zM4 10h1v1h-1zM11 10h3v1h-3zM11 11h1v1h-1zM4 12h8v1h-8z"/></svg><svg class="ic" style="left:567px;top:5px" width="17" height="17" viewBox="0 0 17 17" shape-rendering="crispEdges"><path fill="#808080" d="M-1 3h15v1h-15zM0 4h2v1h-2zM7 4h1v1h-1zM0 5h4v1h-4zM7 5h1v1h-1zM0 6h6v1h-6zM7 6h7v1h-7zM0 7h8v1h-8zM0 8h6v1h-6zM7 8h1v1h-1zM0 9h4v1h-4zM7 9h7v1h-7zM0 10h2v1h-2zM7 10h1v1h-1zM7 11h7v1h-7z"/><path fill="#fff" d="M2 4h5v1h-5zM8 4h7v1h-7zM8 5h1v1h-1zM8 7h7v1h-7zM6 8h1v1h-1zM8 8h1v1h-1zM4 9h3v1h-3zM2 10h3v1h-3zM8 10h7v1h-7zM1 11h2v1h-2zM8 12h7v1h-7z"/></svg><svg class="ic" style="left:590px;top:5px" width="17" height="17" viewBox="0 0 17 17" shape-rendering="crispEdges"><path fill="#000" d="M1 1h1v1h-1zM1 2h1v1h-1zM1 3h1v1h-1zM1 4h1v1h-1zM1 5h1v1h-1zM1 6h1v1h-1zM1 7h1v1h-1zM1 8h1v1h-1zM1 9h12v1h-12z"/></svg><svg class="ic" style="left:613px;top:5px" width="17" height="17" viewBox="0 0 17 17" shape-rendering="crispEdges"><path fill="#000" d="M1 2h1v1h-1zM1 3h1v1h-1zM1 4h1v1h-1zM1 5h1v1h-1zM1 6h1v1h-1zM1 7h1v1h-1zM1 8h1v1h-1zM1 9h1v1h-1zM1 10h5v1h-5zM9 10h6v1h-6z"/><path fill="#f00" d="M3 6h2v1h-2zM10 6h2v1h-2zM4 7h2v1h-2zM9 7h2v1h-2zM5 8h2v1h-2zM8 8h2v1h-2zM6 9h3v1h-3zM6 10h3v1h-3zM5 11h2v1h-2zM8 11h2v1h-2zM4 12h2v1h-2zM9 12h2v1h-2zM3 13h2v1h-2zM10 13h2v1h-2z"/></svg></div>
<div class="tb" style="left:640px;top:69px;width:327px"><div class="grip" style="left:3px"></div><div class="grip" style="left:7px"></div><svg class="ic" style="left:15px;top:5px" width="17" height="17" viewBox="0 0 17 17" shape-rendering="crispEdges"><path fill="#808080" d="M1 2h7v1h-7zM9 2h3v1h-3zM1 3h1v1h-1zM7 3h6v1h-6zM1 4h1v1h-1zM7 4h6v1h-6zM1 5h1v1h-1zM8 5h5v1h-5zM1 6h1v1h-1zM7 6h5v1h-5zM1 7h8v1h-8zM10 7h1v1h-1zM1 9h2v1h-2zM4 9h1v1h-1zM6 9h2v1h-2zM9 9h1v1h-1zM11 9h2v1h-2zM14 9h1v1h-1zM0 10h1v1h-1zM3 10h1v1h-1zM5 10h1v1h-1zM8 10h1v1h-1zM10 10h1v1h-1zM13 10h1v1h-1zM0 11h1v1h-1zM2 11h1v1h-1zM5 11h1v1h-1zM7 11h1v1h-1zM10 11h1v1h-1zM12 11h1v1h-1zM1 12h1v1h-1zM3 12h2v1h-2zM6 12h1v1h-1zM8 12h2v1h-2zM11 12h1v1h-1zM13 12h2v1h-2z"/><path fill="#fff" d="M2 3h5v1h-5zM2 4h1v1h-1zM13 4h1v1h-1zM2 5h1v1h-1zM13 5h1v1h-1zM2 6h1v1h-1zM12 6h2v1h-2zM9 7h1v1h-1zM11 7h2v1h-2zM2 8h8v1h-8zM11 8h1v1h-1zM2 10h1v1h-1zM7 10h1v1h-1zM12 10h1v1h-1zM15 10h1v1h-1zM1 11h1v1h-1zM4 11h1v1h-1zM6 11h1v1h-1zM9 11h1v1h-1zM11 11h1v1h-1zM14 11h1v1h-1zM2 13h1v1h-1zM4 13h2v1h-2zM7 13h1v1h-1zM9 13h2v1h-2zM12 13h1v1h-1zM14 13h2v1h-2z"/></svg><div class="sep" style="left:38px"></div><svg class="ic" style="left:46px;top:5px" width="17" height="17" viewBox="0 0 17 17" shape-rendering="crispEdges"><path fill="#000080" d="M6 0h3v1h-3zM6 1h3v1h-3zM6 2h3v1h-3zM5 3h5v1h-5zM6 4h3v1h-3zM7 5h1v1h-1z"/><path fill="#000" d="M4 2h2v1h-2zM9 2h2v1h-2zM2 3h2v1h-2zM11 3h2v1h-2zM1 4h1v1h-1zM13 4h1v1h-1zM0 5h1v1h-1zM14 5h1v1h-1zM0 6h3v1h-3zM12 6h3v1h-3zM0 7h1v1h-1zM3 7h2v1h-2zM10 7h2v1h-2zM14 7h1v1h-1zM0 8h3v1h-3zM5 8h2v1h-2zM8 8h2v1h-2zM12 8h3v1h-3zM0 9h1v1h-1zM3 9h2v1h-2zM7 9h1v1h-1zM10 9h2v1h-2zM14 9h1v1h-1zM0 10h3v1h-3zM5 10h2v1h-2zM8 10h2v1h-2zM12 10h3v1h-3zM1 11h1v1h-1zM3 11h2v1h-2zM7 11h1v1h-1zM10 11h2v1h-2zM13 11h1v1h-1zM2 12h2v1h-2zM5 12h2v1h-2zM8 12h2v1h-2zM11 12h2v1h-2zM4 13h2v1h-2zM7 13h1v1h-1zM9 13h2v1h-2zM6 14h3v1h-3z"/><path fill="#fff" d="M4 3h1v1h-1zM10 3h1v1h-1zM2 4h4v1h-4zM9 4h4v1h-4zM1 5h6v1h-6zM8 5h6v1h-6zM3 6h9v1h-9zM1 7h2v1h-2zM5 7h5v1h-5zM12 7h2v1h-2zM3 8h2v1h-2zM7 8h1v1h-1zM10 8h2v1h-2zM1 9h2v1h-2zM5 9h2v1h-2zM8 9h2v1h-2zM12 9h2v1h-2zM3 10h2v1h-2zM7 10h1v1h-1zM10 10h2v1h-2zM2 11h1v1h-1zM5 11h2v1h-2zM8 11h2v1h-2zM12 11h1v1h-1zM4 12h1v1h-1zM7 12h1v1h-1zM10 12h1v1h-1zM6 13h1v1h-1zM8 13h1v1h-1z"/></svg><svg class="ic" style="left:69px;top:5px" width="17" height="17" viewBox="0 0 17 17" shape-rendering="crispEdges"><path fill="#000080" d="M1 2h1v1h-1zM3 2h1v1h-1zM5 2h1v1h-1zM7 2h1v1h-1zM9 2h1v1h-1zM11 2h1v1h-1zM13 2h1v1h-1zM2 3h1v1h-1zM4 3h3v1h-3zM8 3h1v1h-1zM10 3h3v1h-3zM14 3h1v1h-1zM1 4h1v1h-1zM4 4h3v1h-3zM10 4h3v1h-3zM3 5h5v1h-5zM9 5h5v1h-5zM4 6h3v1h-3zM10 6h3v1h-3zM5 7h1v1h-1zM11 7h1v1h-1z"/><path fill="#000" d="M1 5h2v1h-2zM8 5h1v1h-1zM14 5h1v1h-1zM1 6h1v1h-1zM14 6h1v1h-1zM1 7h1v1h-1zM14 7h1v1h-1zM1 8h1v1h-1zM14 8h1v1h-1zM1 9h1v1h-1zM3 9h1v1h-1zM5 9h1v1h-1zM7 9h1v1h-1zM9 9h1v1h-1zM11 9h1v1h-1zM13 9h2v1h-2zM1 10h1v1h-1zM14 10h1v1h-1zM1 11h1v1h-1zM3 11h1v1h-1zM5 11h1v1h-1zM7 11h1v1h-1zM9 11h1v1h-1zM11 11h1v1h-1zM13 11h2v1h-2zM1 12h1v1h-1zM14 12h1v1h-1zM1 13h14v1h-14z"/><path fill="#fff" d="M2 6h1v1h-1zM8 6h1v1h-1zM2 7h2v1h-2zM7 7h3v1h-3zM13 7h1v1h-1zM2 8h12v1h-12zM2 9h1v1h-1zM4 9h1v1h-1zM6 9h1v1h-1zM8 9h1v1h-1zM10 9h1v1h-1zM12 9h1v1h-1zM2 10h12v1h-12zM2 11h1v1h-1zM4 11h1v1h-1zM6 11h1v1h-1zM8 11h1v1h-1zM10 11h1v1h-1zM12 11h1v1h-1zM2 12h12v1h-12z"/></svg><div class="sep" style="left:92px"></div><svg class="ic" style="left:100px;top:5px" width="17" height="17" viewBox="0 0 17 17" shape-rendering="crispEdges"><path fill="#808080" d="M2 1h3v1h-3zM1 2h5v1h-5zM1 3h5v1h-5zM0 4h15v1h-15zM0 5h7v1h-7zM14 5h1v1h-1zM6 6h1v1h-1zM14 6h1v1h-1zM6 7h1v1h-1zM8 7h5v1h-5zM14 7h1v1h-1zM6 8h1v1h-1zM11 8h1v1h-1zM14 8h1v1h-1zM6 9h1v1h-1zM10 9h1v1h-1zM14 9h1v1h-1zM6 10h1v1h-1zM9 10h1v1h-1zM14 10h1v1h-1zM6 11h1v1h-1zM8 11h5v1h-5zM14 11h1v1h-1zM6 12h1v1h-1zM14 12h1v1h-1zM6 13h9v1h-9z"/><path fill="#fff" d="M6 3h1v1h-1zM7 5h7v1h-7zM15 5h1v1h-1zM1 6h5v1h-5zM7 6h1v1h-1zM15 6h1v1h-1zM7 7h1v1h-1zM15 7h1v1h-1zM7 8h1v1h-1zM9 8h2v1h-2zM12 8h2v1h-2zM15 8h1v1h-1zM7 9h1v1h-1zM12 9h1v1h-1zM15 9h1v1h-1zM7 10h1v1h-1zM11 10h1v1h-1zM15 10h1v1h-1zM7 11h1v1h-1zM15 11h1v1h-1zM7 12h1v1h-1zM9 12h5v1h-5zM15 12h1v1h-1zM15 13h1v1h-1zM7 14h9v1h-9z"/></svg><svg class="ic" style="left:123px;top:5px" width="17" height="17" viewBox="0 0 17 17" shape-rendering="crispEdges"><path fill="#808080" d="M2 1h3v1h-3zM1 2h5v1h-5zM1 3h5v1h-5zM0 4h15v1h-15zM0 5h7v1h-7zM14 5h1v1h-1zM6 6h1v1h-1zM14 6h1v1h-1zM6 7h1v1h-1zM8 7h1v1h-1zM12 7h1v1h-1zM14 7h1v1h-1zM6 8h1v1h-1zM9 8h1v1h-1zM11 8h1v1h-1zM14 8h1v1h-1zM6 9h1v1h-1zM10 9h1v1h-1zM14 9h1v1h-1zM6 10h1v1h-1zM9 10h1v1h-1zM11 10h1v1h-1zM14 10h1v1h-1zM6 11h1v1h-1zM8 11h1v1h-1zM12 11h1v1h-1zM14 11h1v1h-1zM6 12h1v1h-1zM14 12h1v1h-1zM6 13h9v1h-9z"/><path fill="#fff" d="M6 3h1v1h-1zM7 5h7v1h-7zM15 5h1v1h-1zM1 6h5v1h-5zM7 6h1v1h-1zM15 6h1v1h-1zM7 7h1v1h-1zM15 7h1v1h-1zM7 8h1v1h-1zM13 8h1v1h-1zM15 8h1v1h-1zM7 9h1v1h-1zM12 9h1v1h-1zM15 9h1v1h-1zM7 10h1v1h-1zM15 10h1v1h-1zM7 11h1v1h-1zM10 11h1v1h-1zM15 11h1v1h-1zM7 12h1v1h-1zM9 12h1v1h-1zM13 12h1v1h-1zM15 12h1v1h-1zM15 13h1v1h-1zM7 14h9v1h-9z"/></svg><svg class="ic" style="left:146px;top:5px" width="17" height="17" viewBox="0 0 17 17" shape-rendering="crispEdges"><path fill="#808080" d="M2 1h3v1h-3zM1 2h5v1h-5zM1 3h5v1h-5zM0 4h15v1h-15zM0 5h7v1h-7zM14 5h1v1h-1zM6 6h1v1h-1zM14 6h1v1h-1zM6 7h1v1h-1zM12 7h1v1h-1zM14 7h1v1h-1zM2 8h1v1h-1zM6 8h1v1h-1zM11 8h1v1h-1zM14 8h1v1h-1zM0 9h5v1h-5zM6 9h1v1h-1zM8 9h1v1h-1zM10 9h1v1h-1zM14 9h1v1h-1zM1 10h3v1h-3zM6 10h1v1h-1zM8 10h2v1h-2zM14 10h1v1h-1zM6 11h1v1h-1zM8 11h1v1h-1zM14 11h1v1h-1zM6 12h1v1h-1zM14 12h1v1h-1zM6 13h9v1h-9z"/><path fill="#fff" d="M6 3h1v1h-1zM7 5h7v1h-7zM15 5h1v1h-1zM1 6h5v1h-5zM7 6h1v1h-1zM15 6h1v1h-1zM7 7h1v1h-1zM15 7h1v1h-1zM7 8h1v1h-1zM13 8h1v1h-1zM15 8h1v1h-1zM7 9h1v1h-1zM12 9h1v1h-1zM15 9h1v1h-1zM4 10h2v1h-2zM7 10h1v1h-1zM11 10h1v1h-1zM15 10h1v1h-1zM2 11h3v1h-3zM7 11h1v1h-1zM9 11h2v1h-2zM15 11h1v1h-1zM7 12h1v1h-1zM9 12h1v1h-1zM15 12h1v1h-1zM15 13h1v1h-1zM7 14h9v1h-9z"/></svg><svg class="ic" style="left:169px;top:5px" width="17" height="17" viewBox="0 0 17 17" shape-rendering="crispEdges"><path fill="#808080" d="M2 1h3v1h-3zM1 2h5v1h-5zM1 3h5v1h-5zM0 4h15v1h-15zM0 5h7v1h-7zM14 5h1v1h-1zM6 6h1v1h-1zM14 6h1v1h-1zM6 7h1v1h-1zM14 7h1v1h-1zM3 8h1v1h-1zM6 8h1v1h-1zM9 8h3v1h-3zM14 8h1v1h-1zM0 9h5v1h-5zM6 9h1v1h-1zM9 9h3v1h-3zM14 9h1v1h-1zM3 10h1v1h-1zM6 10h1v1h-1zM14 10h1v1h-1zM6 11h1v1h-1zM14 11h1v1h-1zM6 12h1v1h-1zM14 12h1v1h-1zM6 13h9v1h-9z"/><path fill="#fff" d="M6 3h1v1h-1zM7 5h7v1h-7zM15 5h1v1h-1zM1 6h5v1h-5zM7 6h1v1h-1zM15 6h1v1h-1zM7 7h1v1h-1zM15 7h1v1h-1zM7 8h1v1h-1zM15 8h1v1h-1zM7 9h1v1h-1zM12 9h1v1h-1zM15 9h1v1h-1zM1 10h2v1h-2zM4 10h2v1h-2zM7 10h1v1h-1zM10 10h3v1h-3zM15 10h1v1h-1zM4 11h1v1h-1zM7 11h1v1h-1zM15 11h1v1h-1zM7 12h1v1h-1zM15 12h1v1h-1zM15 13h1v1h-1zM7 14h9v1h-9z"/></svg><div class="sep" style="left:192px"></div><svg class="ic" style="left:200px;top:5px" width="17" height="17" viewBox="0 0 17 17" shape-rendering="crispEdges"><path fill="#000" d="M1 1h3v1h-3zM1 2h1v1h-1zM3 2h2v1h-2zM2 3h1v1h-1zM5 3h3v1h-3zM2 4h1v1h-1zM7 4h1v1h-1zM2 5h6v1h-6zM2 6h1v1h-1zM7 6h1v1h-1zM2 7h1v1h-1zM7 7h1v1h-1zM2 8h6v1h-6zM2 9h1v1h-1zM7 9h1v1h-1zM2 10h1v1h-1zM7 10h1v1h-1zM2 11h6v1h-6zM2 12h1v1h-1zM7 12h1v1h-1zM2 13h1v1h-1zM7 13h1v1h-1zM2 14h6v1h-6z"/><path fill="#ffffa0" d="M2 2h1v1h-1zM3 3h2v1h-2zM3 4h4v1h-4zM3 6h4v1h-4zM3 7h4v1h-4zM3 9h4v1h-4zM3 10h4v1h-4zM3 12h4v1h-4zM3 13h4v1h-4z"/><path fill="#000080" d="M9 3h6v1h-6zM9 4h1v1h-1zM14 4h1v1h-1zM9 5h1v1h-1zM14 5h1v1h-1zM9 6h6v1h-6zM9 8h6v1h-6zM9 9h1v1h-1zM14 9h1v1h-1zM9 10h1v1h-1zM14 10h1v1h-1zM9 11h6v1h-6zM9 13h6v1h-6zM9 14h1v1h-1zM14 14h1v1h-1zM9 15h6v1h-6z"/><path fill="#0ff" d="M10 4h4v1h-4zM10 5h4v1h-4zM10 9h4v1h-4zM10 10h4v1h-4zM10 14h4v1h-4z"/></svg><div class="sep" style="left:223px"></div><svg class="ic" style="left:231px;top:5px" width="17" height="17" viewBox="0 0 17 17" shape-rendering="crispEdges"><path fill="#008080" d="M0 1h16v1h-16zM0 2h1v1h-1zM15 2h1v1h-1zM0 3h1v1h-1zM15 3h1v1h-1zM0 4h1v1h-1zM15 4h1v1h-1zM0 5h1v1h-1zM15 5h1v1h-1zM0 6h1v1h-1zM15 6h1v1h-1zM0 7h1v1h-1zM15 7h1v1h-1zM0 8h1v1h-1zM15 8h1v1h-1zM0 9h1v1h-1zM15 9h1v1h-1zM0 10h16v1h-16z"/><path fill="#0ff" d="M1 2h14v1h-14zM1 3h2v1h-2zM4 3h2v1h-2zM7 3h2v1h-2zM10 3h2v1h-2zM13 3h2v1h-2zM1 4h2v1h-2zM4 4h2v1h-2zM7 4h2v1h-2zM10 4h2v1h-2zM13 4h2v1h-2zM1 5h1v1h-1zM7 5h2v1h-2zM14 5h1v1h-1zM1 6h2v1h-2zM4 6h2v1h-2zM7 6h2v1h-2zM10 6h2v1h-2zM13 6h2v1h-2zM1 7h2v1h-2zM4 7h2v1h-2zM7 7h2v1h-2zM10 7h2v1h-2zM13 7h2v1h-2zM1 8h14v1h-14zM1 9h14v1h-14z"/><path fill="#000" d="M3 3h1v1h-1zM6 3h1v1h-1zM9 3h1v1h-1zM12 3h1v1h-1zM3 4h1v1h-1zM6 4h1v1h-1zM9 4h1v1h-1zM12 4h1v1h-1zM2 5h5v1h-5zM9 5h5v1h-5zM3 6h1v1h-1zM6 6h1v1h-1zM9 6h1v1h-1zM12 6h1v1h-1zM3 7h1v1h-1zM6 7h1v1h-1zM9 7h1v1h-1zM12 7h1v1h-1zM1 12h2v1h-2zM4 12h1v1h-1zM6 12h2v1h-2zM9 12h1v1h-1zM11 12h2v1h-2zM14 12h1v1h-1zM0 13h1v1h-1zM3 13h1v1h-1zM5 13h1v1h-1zM8 13h1v1h-1zM10 13h1v1h-1zM13 13h1v1h-1zM15 13h1v1h-1zM0 14h1v1h-1zM2 14h1v1h-1zM5 14h1v1h-1zM7 14h1v1h-1zM10 14h1v1h-1zM12 14h1v1h-1zM15 14h1v1h-1zM1 15h1v1h-1zM3 15h2v1h-2zM6 15h1v1h-1zM8 15h2v1h-2zM11 15h1v1h-1zM13 15h2v1h-2z"/></svg><svg class="ic" style="left:254px;top:5px" width="17" height="17" viewBox="0 0 17 17" shape-rendering="crispEdges"><path fill="#808080" d="M0 2h14v1h-14zM0 3h4v1h-4zM0 4h4v1h-4zM5 4h10v1h-10zM0 5h4v1h-4zM5 5h1v1h-1zM13 5h1v1h-1zM0 6h4v1h-4zM5 6h1v1h-1zM7 6h5v1h-5zM13 6h1v1h-1zM0 7h4v1h-4zM5 7h1v1h-1zM10 7h1v1h-1zM13 7h1v1h-1zM0 8h4v1h-4zM5 8h1v1h-1zM9 8h1v1h-1zM13 8h1v1h-1zM0 9h4v1h-4zM5 9h1v1h-1zM8 9h1v1h-1zM13 9h1v1h-1zM0 10h4v1h-4zM5 10h1v1h-1zM7 10h5v1h-5zM13 10h1v1h-1zM0 11h4v1h-4zM5 11h1v1h-1zM13 11h1v1h-1zM0 12h4v1h-4zM5 12h9v1h-9zM0 13h3v1h-3zM0 14h1v1h-1z"/><path fill="#fff" d="M4 3h11v1h-11zM4 4h1v1h-1zM4 5h1v1h-1zM6 5h7v1h-7zM14 5h2v1h-2zM4 6h1v1h-1zM6 6h1v1h-1zM14 6h1v1h-1zM4 7h1v1h-1zM6 7h1v1h-1zM8 7h2v1h-2zM11 7h2v1h-2zM14 7h1v1h-1zM4 8h1v1h-1zM6 8h1v1h-1zM11 8h1v1h-1zM14 8h1v1h-1zM4 9h1v1h-1zM6 9h1v1h-1zM10 9h1v1h-1zM14 9h1v1h-1zM4 10h1v1h-1zM6 10h1v1h-1zM14 10h1v1h-1zM4 11h1v1h-1zM6 11h1v1h-1zM8 11h5v1h-5zM14 11h1v1h-1zM4 12h1v1h-1zM14 12h1v1h-1zM3 13h2v1h-2zM6 13h9v1h-9zM1 14h3v1h-3zM1 15h1v1h-1z"/></svg><svg class="ic" style="left:277px;top:5px" width="17" height="17" viewBox="0 0 17 17" shape-rendering="crispEdges"><path fill="#808080" d="M0 2h14v1h-14zM0 3h4v1h-4zM0 4h4v1h-4zM5 4h10v1h-10zM0 5h4v1h-4zM5 5h1v1h-1zM13 5h1v1h-1zM0 6h4v1h-4zM5 6h1v1h-1zM7 6h1v1h-1zM11 6h1v1h-1zM13 6h1v1h-1zM0 7h4v1h-4zM5 7h1v1h-1zM8 7h1v1h-1zM10 7h1v1h-1zM13 7h1v1h-1zM0 8h4v1h-4zM5 8h1v1h-1zM9 8h1v1h-1zM13 8h1v1h-1zM0 9h4v1h-4zM5 9h1v1h-1zM8 9h1v1h-1zM10 9h1v1h-1zM13 9h1v1h-1zM0 10h4v1h-4zM5 10h1v1h-1zM7 10h1v1h-1zM11 10h1v1h-1zM13 10h1v1h-1zM0 11h4v1h-4zM5 11h1v1h-1zM13 11h1v1h-1zM0 12h4v1h-4zM5 12h9v1h-9zM0 13h3v1h-3zM0 14h1v1h-1z"/><path fill="#fff" d="M4 3h11v1h-11zM4 4h1v1h-1zM4 5h1v1h-1zM6 5h7v1h-7zM14 5h2v1h-2zM4 6h1v1h-1zM6 6h1v1h-1zM14 6h1v1h-1zM4 7h1v1h-1zM6 7h1v1h-1zM12 7h1v1h-1zM14 7h1v1h-1zM4 8h1v1h-1zM6 8h1v1h-1zM11 8h1v1h-1zM14 8h1v1h-1zM4 9h1v1h-1zM6 9h1v1h-1zM14 9h1v1h-1zM4 10h1v1h-1zM6 10h1v1h-1zM9 10h1v1h-1zM14 10h1v1h-1zM4 11h1v1h-1zM6 11h1v1h-1zM8 11h1v1h-1zM12 11h1v1h-1zM14 11h1v1h-1zM4 12h1v1h-1zM14 12h1v1h-1zM3 13h2v1h-2zM6 13h9v1h-9zM1 14h3v1h-3zM1 15h1v1h-1z"/></svg><svg class="ic" style="left:300px;top:5px" width="17" height="17" viewBox="0 0 17 17" shape-rendering="crispEdges"><path fill="#808080" d="M0 2h14v1h-14zM0 3h4v1h-4zM0 4h4v1h-4zM5 4h10v1h-10zM0 5h4v1h-4zM5 5h1v1h-1zM13 5h1v1h-1zM0 6h4v1h-4zM5 6h1v1h-1zM11 6h1v1h-1zM13 6h1v1h-1zM0 7h4v1h-4zM5 7h1v1h-1zM10 7h1v1h-1zM13 7h1v1h-1zM0 8h4v1h-4zM5 8h1v1h-1zM7 8h1v1h-1zM9 8h1v1h-1zM13 8h1v1h-1zM0 9h4v1h-4zM5 9h1v1h-1zM7 9h2v1h-2zM13 9h1v1h-1zM0 10h4v1h-4zM5 10h1v1h-1zM7 10h1v1h-1zM13 10h1v1h-1zM0 11h4v1h-4zM5 11h1v1h-1zM13 11h1v1h-1zM0 12h4v1h-4zM5 12h9v1h-9zM0 13h3v1h-3zM0 14h1v1h-1z"/><path fill="#fff" d="M4 3h11v1h-11zM4 4h1v1h-1zM4 5h1v1h-1zM6 5h7v1h-7zM14 5h2v1h-2zM4 6h1v1h-1zM6 6h1v1h-1zM14 6h1v1h-1zM4 7h1v1h-1zM6 7h1v1h-1zM12 7h1v1h-1zM14 7h1v1h-1zM4 8h1v1h-1zM6 8h1v1h-1zM11 8h1v1h-1zM14 8h1v1h-1zM4 9h1v1h-1zM6 9h1v1h-1zM10 9h1v1h-1zM14 9h1v1h-1zM4 10h1v1h-1zM6 10h1v1h-1zM8 10h2v1h-2zM14 10h1v1h-1zM4 11h1v1h-1zM6 11h1v1h-1zM8 11h1v1h-1zM14 11h1v1h-1zM4 12h1v1h-1zM14 12h1v1h-1zM3 13h2v1h-2zM6 13h9v1h-9zM1 14h3v1h-3zM1 15h1v1h-1z"/></svg></div>
<div class="tb" style="left:0px;top:99px;width:433px"><div class="grip" style="left:2px"></div><div class="grip" style="left:6px"></div><div class="chk" style="left:10px;top:3px"></div><svg class="ic" style="left:14px;top:5px" width="17" height="17" viewBox="0 0 17 17" shape-rendering="crispEdges"><path fill="#000080" d="M0 3h14v1h-14zM0 4h14v1h-14zM0 5h1v1h-1zM4 5h1v1h-1zM13 5h1v1h-1zM0 6h1v1h-1zM4 6h1v1h-1zM13 6h1v1h-1zM0 7h1v1h-1zM4 7h1v1h-1zM13 7h1v1h-1zM0 8h1v1h-1zM4 8h1v1h-1zM13 8h1v1h-1zM0 9h1v1h-1zM4 9h1v1h-1zM0 10h1v1h-1zM4 10h1v1h-1zM0 11h1v1h-1zM4 11h1v1h-1zM0 12h1v1h-1zM4 12h1v1h-1zM0 13h6v1h-6z"/><path fill="#fff" d="M1 5h3v1h-3zM5 5h8v1h-8zM1 6h1v1h-1zM3 6h1v1h-1zM5 6h8v1h-8zM1 7h3v1h-3zM5 7h8v1h-8zM1 8h1v1h-1zM3 8h1v1h-1zM5 8h2v1h-2zM11 8h2v1h-2zM1 9h3v1h-3zM5 9h1v1h-1zM1 10h1v1h-1zM3 10h1v1h-1zM5 10h1v1h-1zM1 11h3v1h-3zM5 11h1v1h-1zM1 12h3v1h-3zM5 12h1v1h-1z"/><path fill="#a0a0ff" d="M2 6h1v1h-1zM2 8h1v1h-1zM2 10h1v1h-1z"/><path fill="#000" d="M7 8h4v1h-4zM6 9h1v1h-1zM11 9h4v1h-4zM6 10h1v1h-1zM14 10h1v1h-1zM6 11h1v1h-1zM14 11h1v1h-1zM6 12h1v1h-1zM14 12h1v1h-1zM6 13h1v1h-1zM14 13h1v1h-1zM6 14h1v1h-1zM14 14h1v1h-1zM6 15h9v1h-9z"/><path fill="#ffffa0" d="M7 9h4v1h-4zM7 10h7v1h-7zM7 11h7v1h-7zM7 12h7v1h-7zM7 13h7v1h-7zM7 14h7v1h-7z"/></svg><svg class="ic" style="left:37px;top:5px" width="17" height="17" viewBox="0 0 17 17" shape-rendering="crispEdges"><path fill="#000080" d="M1 1h14v1h-14zM1 2h14v1h-14z"/><path fill="#000" d="M1 3h1v1h-1zM14 3h1v1h-1zM1 4h1v1h-1zM5 4h4v1h-4zM14 4h1v1h-1zM1 5h1v1h-1zM4 5h2v1h-2zM8 5h3v1h-3zM14 5h1v1h-1zM1 6h1v1h-1zM5 6h1v1h-1zM8 6h2v1h-2zM11 6h1v1h-1zM14 6h1v1h-1zM1 7h1v1h-1zM6 7h3v1h-3zM11 7h1v1h-1zM14 7h1v1h-1zM1 8h1v1h-1zM5 8h6v1h-6zM14 8h1v1h-1zM1 9h1v1h-1zM4 9h3v1h-3zM9 9h2v1h-2zM14 9h1v1h-1zM1 10h1v1h-1zM3 10h3v1h-3zM14 10h1v1h-1zM1 11h4v1h-4zM14 11h1v1h-1zM1 12h14v1h-14zM0 13h3v1h-3zM0 14h2v1h-2zM0 15h1v1h-1z"/><path fill="#fff" d="M2 3h12v1h-12zM2 4h3v1h-3zM9 4h5v1h-5zM2 5h2v1h-2zM11 5h3v1h-3zM2 6h3v1h-3zM12 6h2v1h-2zM2 7h4v1h-4zM12 7h2v1h-2zM2 8h3v1h-3zM11 8h3v1h-3zM2 9h2v1h-2zM7 9h2v1h-2zM11 9h3v1h-3zM2 10h1v1h-1zM6 10h8v1h-8zM5 11h9v1h-9z"/><path fill="#808000" d="M6 5h2v1h-2zM6 6h2v1h-2zM10 6h1v1h-1zM9 7h2v1h-2z"/></svg><svg class="ic" style="left:60px;top:5px" width="17" height="17" viewBox="0 0 17 17" shape-rendering="crispEdges"><path fill="#000080" d="M1 1h14v1h-14zM1 2h14v1h-14z"/><path fill="#000" d="M1 3h1v1h-1zM14 3h1v1h-1zM1 4h1v1h-1zM4 4h2v1h-2zM7 4h2v1h-2zM10 4h1v1h-1zM14 4h1v1h-1zM1 5h1v1h-1zM12 5h1v1h-1zM14 5h1v1h-1zM1 6h1v1h-1zM6 6h1v1h-1zM10 6h2v1h-2zM14 6h1v1h-1zM1 7h1v1h-1zM5 7h1v1h-1zM7 7h1v1h-1zM9 7h1v1h-1zM14 7h1v1h-1zM1 8h1v1h-1zM4 8h1v1h-1zM8 8h1v1h-1zM14 8h1v1h-1zM1 9h1v1h-1zM3 9h1v1h-1zM14 9h1v1h-1zM1 10h2v1h-2zM14 10h1v1h-1zM1 11h14v1h-14zM1 12h3v1h-3zM5 12h3v1h-3zM0 13h2v1h-2zM3 13h3v1h-3zM7 13h2v1h-2zM0 14h1v1h-1zM4 14h1v1h-1zM8 14h1v1h-1zM1 15h3v1h-3zM5 15h3v1h-3z"/><path fill="#fff" d="M2 3h12v1h-12zM2 4h2v1h-2zM11 4h3v1h-3zM2 5h10v1h-10zM13 5h1v1h-1zM2 6h4v1h-4zM7 6h3v1h-3zM12 6h2v1h-2zM2 7h3v1h-3zM6 7h1v1h-1zM8 7h1v1h-1zM10 7h4v1h-4zM2 8h2v1h-2zM5 8h3v1h-3zM9 8h5v1h-5zM2 9h1v1h-1zM4 9h10v1h-10zM3 10h11v1h-11zM2 13h1v1h-1zM6 13h1v1h-1zM1 14h3v1h-3zM5 14h3v1h-3z"/></svg><svg class="ic" style="left:83px;top:5px" width="17" height="17" viewBox="0 0 17 17" shape-rendering="crispEdges"><path fill="#000080" d="M1 1h14v1h-14zM1 2h14v1h-14z"/><path fill="#000" d="M1 3h1v1h-1zM14 3h1v1h-1zM1 4h1v1h-1zM4 4h2v1h-2zM7 4h2v1h-2zM10 4h2v1h-2zM14 4h1v1h-1zM1 5h1v1h-1zM4 5h1v1h-1zM8 5h1v1h-1zM11 5h1v1h-1zM14 5h1v1h-1zM1 6h1v1h-1zM4 6h1v1h-1zM7 6h3v1h-3zM11 6h1v1h-1zM14 6h1v1h-1zM1 7h1v1h-1zM4 7h1v1h-1zM8 7h1v1h-1zM11 7h1v1h-1zM14 7h1v1h-1zM1 8h1v1h-1zM4 8h1v1h-1zM11 8h1v1h-1zM14 8h1v1h-1zM1 9h1v1h-1zM3 9h3v1h-3zM10 9h3v1h-3zM14 9h1v1h-1zM1 10h2v1h-2zM6 10h1v1h-1zM9 10h1v1h-1zM13 10h2v1h-2zM0 11h2v1h-2zM6 11h4v1h-4zM14 11h2v1h-2zM0 12h1v1h-1zM3 12h2v1h-2zM6 12h1v1h-1zM9 12h1v1h-1zM11 12h2v1h-2zM15 12h1v1h-1zM0 13h1v1h-1zM6 13h1v1h-1zM9 13h1v1h-1zM15 13h1v1h-1zM0 14h1v1h-1zM6 14h1v1h-1zM9 14h1v1h-1zM15 14h1v1h-1zM0 15h7v1h-7zM9 15h7v1h-7z"/><path fill="#fff" d="M2 3h12v1h-12zM2 4h2v1h-2zM12 4h2v1h-2zM2 5h2v1h-2zM5 5h3v1h-3zM9 5h2v1h-2zM12 5h2v1h-2zM2 6h2v1h-2zM5 6h2v1h-2zM10 6h1v1h-1zM12 6h2v1h-2zM2 7h2v1h-2zM5 7h3v1h-3zM9 7h2v1h-2zM12 7h2v1h-2zM2 8h2v1h-2zM5 8h6v1h-6zM12 8h2v1h-2zM2 9h1v1h-1zM6 9h4v1h-4zM13 9h1v1h-1zM3 10h3v1h-3zM7 10h2v1h-2zM10 10h3v1h-3zM2 11h4v1h-4zM10 11h4v1h-4zM1 12h2v1h-2zM5 12h1v1h-1zM10 12h1v1h-1zM13 12h2v1h-2zM1 13h5v1h-5zM10 13h5v1h-5zM1 14h5v1h-5zM10 14h5v1h-5z"/></svg><svg class="ic" style="left:106px;top:5px" width="17" height="17" viewBox="0 0 17 17" shape-rendering="crispEdges"><path fill="#000080" d="M2 1h14v1h-14zM2 2h14v1h-14z"/><path fill="#000" d="M2 3h1v1h-1zM15 3h1v1h-1zM2 4h1v1h-1zM15 4h1v1h-1zM2 5h1v1h-1zM15 5h1v1h-1zM2 6h1v1h-1zM15 6h1v1h-1zM2 7h1v1h-1zM15 7h1v1h-1zM2 8h1v1h-1zM15 8h1v1h-1zM1 9h4v1h-4zM15 9h1v1h-1zM0 10h2v1h-2zM4 10h2v1h-2zM15 10h1v1h-1zM1 11h1v1h-1zM4 11h12v1h-12zM0 12h2v1h-2zM4 12h2v1h-2zM1 13h1v1h-1zM4 13h1v1h-1zM0 14h2v1h-2zM4 14h2v1h-2zM1 15h4v1h-4z"/><path fill="#fff" d="M3 3h3v1h-3zM7 3h8v1h-8zM3 4h3v1h-3zM7 4h1v1h-1zM9 4h1v1h-1zM11 4h1v1h-1zM13 4h2v1h-2zM3 5h3v1h-3zM7 5h8v1h-8zM3 6h3v1h-3zM7 6h1v1h-1zM9 6h1v1h-1zM11 6h1v1h-1zM13 6h2v1h-2zM3 7h3v1h-3zM7 7h8v1h-8zM3 8h3v1h-3zM7 8h1v1h-1zM9 8h1v1h-1zM11 8h1v1h-1zM13 8h2v1h-2zM5 9h1v1h-1zM7 9h8v1h-8zM2 10h2v1h-2zM7 10h1v1h-1zM9 10h1v1h-1zM11 10h1v1h-1zM13 10h2v1h-2zM2 11h2v1h-2zM2 12h2v1h-2zM2 13h2v1h-2zM2 14h2v1h-2z"/><path fill="#c0c0c0" d="M6 3h1v1h-1zM6 4h1v1h-1zM8 4h1v1h-1zM10 4h1v1h-1zM12 4h1v1h-1zM6 5h1v1h-1zM6 6h1v1h-1zM8 6h1v1h-1zM10 6h1v1h-1zM12 6h1v1h-1zM6 7h1v1h-1zM6 8h1v1h-1zM8 8h1v1h-1zM10 8h1v1h-1zM12 8h1v1h-1zM6 9h1v1h-1zM6 10h1v1h-1zM8 10h1v1h-1zM10 10h1v1h-1zM12 10h1v1h-1z"/></svg><svg class="ic" style="left:129px;top:5px" width="17" height="17" viewBox="0 0 17 17" shape-rendering="crispEdges"><path fill="#000" d="M7 1h5v1h-5zM6 2h1v1h-1zM8 2h1v1h-1zM10 2h1v1h-1zM5 3h1v1h-1zM7 3h1v1h-1zM9 3h1v1h-1zM11 3h1v1h-1zM4 4h1v1h-1zM6 4h1v1h-1zM8 4h1v1h-1zM10 4h1v1h-1zM12 4h1v1h-1zM3 5h1v1h-1zM5 5h1v1h-1zM7 5h1v1h-1zM9 5h1v1h-1zM11 5h1v1h-1zM13 5h1v1h-1zM2 6h1v1h-1zM4 6h1v1h-1zM6 6h1v1h-1zM8 6h1v1h-1zM10 6h1v1h-1zM12 6h1v1h-1zM14 6h1v1h-1zM2 7h12v1h-12zM2 8h1v1h-1zM13 8h1v1h-1zM2 9h1v1h-1zM4 9h8v1h-8zM13 9h1v1h-1zM2 10h1v1h-1zM13 10h1v1h-1zM2 11h1v1h-1zM4 11h8v1h-8zM13 11h1v1h-1zM2 12h1v1h-1zM13 12h1v1h-1zM2 13h1v1h-1zM4 13h8v1h-8zM13 13h1v1h-1zM2 14h1v1h-1zM13 14h1v1h-1zM2 15h12v1h-12z"/><path fill="#000080" d="M12 1h3v1h-3zM11 2h4v1h-4zM12 3h3v1h-3zM13 4h2v1h-2zM14 5h1v1h-1zM15 6h1v1h-1zM15 7h1v1h-1z"/><path fill="#fff" d="M7 2h1v1h-1zM9 2h1v1h-1zM6 3h1v1h-1zM8 3h1v1h-1zM10 3h1v1h-1zM5 4h1v1h-1zM7 4h1v1h-1zM9 4h1v1h-1zM11 4h1v1h-1zM4 5h1v1h-1zM6 5h1v1h-1zM8 5h1v1h-1zM10 5h1v1h-1zM12 5h1v1h-1zM3 6h1v1h-1zM5 6h1v1h-1zM7 6h1v1h-1zM9 6h1v1h-1zM11 6h1v1h-1zM13 6h1v1h-1zM3 8h10v1h-10zM3 9h1v1h-1zM12 9h1v1h-1zM3 10h10v1h-10zM3 11h1v1h-1zM12 11h1v1h-1zM3 12h10v1h-10zM3 13h1v1h-1zM12 13h1v1h-1zM3 14h10v1h-10z"/></svg><div class="sep" style="left:152px"></div><svg class="ic" style="left:160px;top:5px" width="17" height="17" viewBox="0 0 17 17" shape-rendering="crispEdges"><path fill="#000" d="M4 1h1v1h-1zM12 1h1v1h-1zM2 2h1v1h-1zM5 2h2v1h-2zM10 2h2v1h-2zM14 2h1v1h-1zM6 3h2v1h-2zM9 3h2v1h-2zM2 4h1v1h-1zM7 4h3v1h-3zM14 4h1v1h-1zM6 5h2v1h-2zM9 5h2v1h-2zM5 6h2v1h-2zM10 6h2v1h-2zM2 7h5v1h-5zM10 7h5v1h-5zM1 8h1v1h-1zM5 8h3v1h-3zM9 8h1v1h-1zM13 8h3v1h-3zM1 9h1v1h-1zM5 9h1v1h-1zM7 9h1v1h-1zM9 9h1v1h-1zM13 9h1v1h-1zM15 9h1v1h-1zM1 10h1v1h-1zM3 10h1v1h-1zM7 10h1v1h-1zM9 10h1v1h-1zM11 10h1v1h-1zM15 10h1v1h-1zM1 11h1v1h-1zM3 11h2v1h-2zM7 11h1v1h-1zM9 11h1v1h-1zM11 11h2v1h-2zM15 11h1v1h-1zM1 12h1v1h-1zM7 12h1v1h-1zM9 12h1v1h-1zM15 12h1v1h-1zM1 13h1v1h-1zM7 13h1v1h-1zM9 13h1v1h-1zM15 13h1v1h-1zM1 14h1v1h-1zM7 14h1v1h-1zM9 14h1v1h-1zM15 14h1v1h-1zM1 15h7v1h-7zM9 15h7v1h-7z"/><path fill="#fff" d="M2 8h3v1h-3zM10 8h3v1h-3zM2 9h3v1h-3zM6 9h1v1h-1zM10 9h3v1h-3zM14 9h1v1h-1zM2 10h1v1h-1zM4 10h3v1h-3zM10 10h1v1h-1zM12 10h3v1h-3zM2 11h1v1h-1zM5 11h2v1h-2zM10 11h1v1h-1zM13 11h2v1h-2zM2 12h5v1h-5zM10 12h5v1h-5zM2 13h5v1h-5zM10 13h5v1h-5zM2 14h5v1h-5zM10 14h5v1h-5z"/></svg><svg class="ic" style="left:183px;top:5px" width="17" height="17" viewBox="0 0 17 17" shape-rendering="crispEdges"><path fill="#000" d="M1 1h10v1h-10zM0 2h1v1h-1zM11 2h1v1h-1zM0 3h1v1h-1zM4 3h1v1h-1zM6 3h1v1h-1zM8 3h1v1h-1zM11 3h2v1h-2zM0 4h1v1h-1zM11 4h1v1h-1zM13 4h1v1h-1zM0 5h1v1h-1zM11 5h1v1h-1zM13 5h1v1h-1zM1 6h11v1h-11zM13 6h1v1h-1zM13 7h1v1h-1zM13 8h1v1h-1zM2 9h12v1h-12zM1 10h1v1h-1zM5 10h1v1h-1zM10 10h1v1h-1zM13 10h1v1h-1zM1 11h1v1h-1zM5 11h1v1h-1zM10 11h1v1h-1zM13 11h1v1h-1zM0 13h3v1h-3zM4 13h3v1h-3zM8 13h3v1h-3zM12 13h3v1h-3zM0 14h1v1h-1zM4 14h1v1h-1zM8 14h1v1h-1zM12 14h1v1h-1zM0 15h3v1h-3zM4 15h3v1h-3zM8 15h3v1h-3zM12 15h3v1h-3z"/><path fill="#ffffa0" d="M1 2h10v1h-10zM1 3h3v1h-3zM5 3h1v1h-1zM7 3h1v1h-1zM9 3h2v1h-2zM1 4h10v1h-10zM1 5h10v1h-10z"/><path fill="#fff" d="M12 4h1v1h-1z"/></svg><svg class="ic" style="left:206px;top:5px" width="17" height="17" viewBox="0 0 17 17" shape-rendering="crispEdges"><path fill="#000" d="M0 1h15v1h-15zM0 2h1v1h-1zM14 2h1v1h-1zM0 3h1v1h-1zM6 3h1v1h-1zM10 3h1v1h-1zM14 3h1v1h-1zM0 4h1v1h-1zM6 4h1v1h-1zM10 4h1v1h-1zM14 4h1v1h-1zM0 5h1v1h-1zM5 5h6v1h-6zM14 5h1v1h-1zM0 6h1v1h-1zM6 6h1v1h-1zM10 6h1v1h-1zM14 6h1v1h-1zM0 7h1v1h-1zM6 7h1v1h-1zM10 7h1v1h-1zM14 7h1v1h-1zM0 8h1v1h-1zM6 8h1v1h-1zM10 8h1v1h-1zM13 8h2v1h-2zM0 9h1v1h-1zM13 9h1v1h-1zM0 10h1v1h-1zM12 10h1v1h-1zM0 11h1v1h-1zM12 11h1v1h-1zM0 12h1v1h-1zM8 12h2v1h-2zM12 12h1v1h-1zM0 13h1v1h-1zM5 13h2v1h-2zM8 13h5v1h-5zM0 14h1v1h-1zM4 14h5v1h-5zM0 15h5v1h-5zM6 15h3v1h-3z"/><path fill="#fff" d="M1 2h2v1h-2zM4 2h10v1h-10zM1 3h2v1h-2zM4 3h2v1h-2zM7 3h3v1h-3zM11 3h3v1h-3zM1 4h2v1h-2zM4 4h2v1h-2zM7 4h3v1h-3zM11 4h3v1h-3zM1 5h2v1h-2zM4 5h1v1h-1zM11 5h3v1h-3zM1 6h2v1h-2zM4 6h2v1h-2zM7 6h3v1h-3zM11 6h3v1h-3zM1 7h2v1h-2zM4 7h2v1h-2zM7 7h3v1h-3zM11 7h3v1h-3zM1 8h2v1h-2zM4 8h2v1h-2zM7 8h3v1h-3zM11 8h2v1h-2zM1 9h2v1h-2zM4 9h9v1h-9zM1 10h2v1h-2zM4 10h8v1h-8zM1 11h2v1h-2zM4 11h8v1h-8zM1 12h2v1h-2zM4 12h4v1h-4zM10 12h2v1h-2zM1 13h2v1h-2zM4 13h1v1h-1zM7 13h1v1h-1zM1 14h2v1h-2z"/><path fill="#2a7a2a" d="M3 2h1v1h-1zM3 3h1v1h-1zM3 4h1v1h-1zM3 5h1v1h-1zM3 6h1v1h-1zM3 7h1v1h-1zM3 8h1v1h-1zM3 9h1v1h-1zM3 10h1v1h-1zM3 11h1v1h-1zM3 12h1v1h-1zM3 13h1v1h-1zM3 14h1v1h-1z"/></svg><svg class="ic" style="left:229px;top:5px" width="17" height="17" viewBox="0 0 17 17" shape-rendering="crispEdges"><path fill="#000" d="M0 1h15v1h-15zM0 2h15v1h-15zM0 3h1v1h-1zM14 3h1v1h-1zM0 4h1v1h-1zM14 4h1v1h-1zM0 5h1v1h-1zM4 5h7v1h-7zM14 5h1v1h-1zM0 6h1v1h-1zM4 6h1v1h-1zM10 6h1v1h-1zM14 6h1v1h-1zM0 7h1v1h-1zM4 7h7v1h-7zM14 7h1v1h-1zM0 8h1v1h-1zM14 8h1v1h-1zM0 9h1v1h-1zM14 9h1v1h-1zM0 10h1v1h-1zM2 10h1v1h-1zM5 10h5v1h-5zM11 10h2v1h-2zM14 10h1v1h-1zM0 11h1v1h-1zM14 11h1v1h-1zM0 12h1v1h-1zM2 12h1v1h-1zM5 12h5v1h-5zM11 12h2v1h-2zM14 12h1v1h-1zM0 13h1v1h-1zM14 13h1v1h-1zM0 14h1v1h-1zM14 14h1v1h-1zM0 15h15v1h-15z"/><path fill="#fff" d="M1 3h13v1h-13zM1 4h13v1h-13zM1 5h3v1h-3zM11 5h3v1h-3zM1 6h3v1h-3zM5 6h5v1h-5zM11 6h3v1h-3zM1 7h3v1h-3zM11 7h3v1h-3zM1 8h13v1h-13zM1 9h13v1h-13zM1 10h1v1h-1zM3 10h2v1h-2zM10 10h1v1h-1zM13 10h1v1h-1zM1 11h13v1h-13zM1 12h1v1h-1zM3 12h2v1h-2zM10 12h1v1h-1zM13 12h1v1h-1zM1 13h13v1h-13zM1 14h13v1h-13z"/></svg><svg class="ic" style="left:252px;top:5px" width="17" height="17" viewBox="0 0 17 17" shape-rendering="crispEdges"><path fill="#000" d="M0 1h15v1h-15zM0 2h15v1h-15zM0 3h1v1h-1zM14 3h1v1h-1zM0 4h1v1h-1zM14 4h1v1h-1zM0 5h1v1h-1zM14 5h1v1h-1zM0 6h1v1h-1zM14 6h1v1h-1zM0 7h1v1h-1zM14 7h1v1h-1zM0 8h1v1h-1zM14 8h1v1h-1zM0 9h1v1h-1zM14 9h1v1h-1zM0 10h1v1h-1zM14 10h1v1h-1zM0 11h1v1h-1zM14 11h1v1h-1zM0 12h1v1h-1zM14 12h1v1h-1zM0 13h1v1h-1zM14 13h1v1h-1zM0 14h1v1h-1zM14 14h1v1h-1zM0 15h15v1h-15z"/><path fill="#a0a0ff" d="M1 3h13v1h-13zM1 4h13v1h-13zM1 5h1v1h-1zM4 5h1v1h-1zM7 5h1v1h-1zM10 5h1v1h-1zM12 5h2v1h-2zM1 6h1v1h-1zM4 6h1v1h-1zM7 6h1v1h-1zM10 6h1v1h-1zM12 6h2v1h-2zM1 7h1v1h-1zM4 7h1v1h-1zM7 7h1v1h-1zM10 7h1v1h-1zM12 7h2v1h-2zM1 8h13v1h-13zM1 9h13v1h-13zM1 10h1v1h-1zM4 10h1v1h-1zM7 10h1v1h-1zM10 10h1v1h-1zM13 10h1v1h-1zM1 11h1v1h-1zM4 11h1v1h-1zM7 11h1v1h-1zM10 11h2v1h-2zM13 11h1v1h-1zM1 12h1v1h-1zM4 12h1v1h-1zM7 12h1v1h-1zM10 12h1v1h-1zM13 12h1v1h-1zM1 13h13v1h-13zM1 14h13v1h-13z"/><path fill="#000080" d="M2 5h2v1h-2zM5 5h2v1h-2zM8 5h2v1h-2zM11 5h1v1h-1zM2 6h2v1h-2zM5 6h2v1h-2zM8 6h2v1h-2zM11 6h1v1h-1zM2 7h2v1h-2zM5 7h2v1h-2zM8 7h2v1h-2zM11 7h1v1h-1zM2 10h2v1h-2zM5 10h2v1h-2zM8 10h2v1h-2zM11 10h2v1h-2zM2 11h2v1h-2zM5 11h2v1h-2zM8 11h2v1h-2zM12 11h1v1h-1zM2 12h2v1h-2zM5 12h2v1h-2zM8 12h2v1h-2zM11 12h2v1h-2z"/></svg><div class="sep" style="left:275px"></div><svg class="ic" style="left:283px;top:5px" width="17" height="17" viewBox="0 0 17 17" shape-rendering="crispEdges"><path fill="#808080" d="M1 9h2v1h-2zM4 9h1v1h-1zM6 9h2v1h-2zM9 9h1v1h-1zM11 9h2v1h-2zM14 9h1v1h-1zM0 10h1v1h-1zM3 10h1v1h-1zM5 10h1v1h-1zM8 10h1v1h-1zM10 10h1v1h-1zM13 10h1v1h-1zM0 11h1v1h-1zM2 11h1v1h-1zM5 11h1v1h-1zM7 11h1v1h-1zM10 11h1v1h-1zM12 11h1v1h-1zM1 12h1v1h-1zM3 12h2v1h-2zM6 12h1v1h-1zM8 12h2v1h-2zM11 12h1v1h-1zM13 12h2v1h-2z"/><path fill="#fff" d="M2 10h1v1h-1zM7 10h1v1h-1zM12 10h1v1h-1zM15 10h1v1h-1zM1 11h1v1h-1zM4 11h1v1h-1zM6 11h1v1h-1zM9 11h1v1h-1zM11 11h1v1h-1zM14 11h1v1h-1zM2 13h1v1h-1zM4 13h2v1h-2zM7 13h1v1h-1zM9 13h2v1h-2zM12 13h1v1h-1zM14 13h2v1h-2z"/><text x="9" y="9.5" font-family="Liberation Serif,serif" font-size="11.5" font-weight="bold" fill="#fff" text-anchor="middle" letter-spacing="0.6" stroke="#fff" stroke-width="0.5">10</text><text x="8" y="8.5" font-family="Liberation Serif,serif" font-size="11.5" font-weight="bold" fill="#808080" text-anchor="middle" letter-spacing="0.6" stroke="#808080" stroke-width="0.5">10</text></svg><svg class="ic" style="left:306px;top:5px" width="17" height="17" viewBox="0 0 17 17" shape-rendering="crispEdges"><path fill="#808080" d="M6 5h1v1h-1zM10 5h1v1h-1zM1 6h13v1h-13zM1 7h12v1h-12zM6 8h1v1h-1zM10 8h1v1h-1zM1 9h2v1h-2zM4 9h1v1h-1zM6 9h2v1h-2zM9 9h1v1h-1zM11 9h2v1h-2zM14 9h1v1h-1zM0 10h1v1h-1zM3 10h1v1h-1zM5 10h1v1h-1zM8 10h1v1h-1zM10 10h1v1h-1zM13 10h1v1h-1zM0 11h1v1h-1zM2 11h1v1h-1zM5 11h1v1h-1zM7 11h1v1h-1zM10 11h1v1h-1zM12 11h1v1h-1zM1 12h1v1h-1zM3 12h2v1h-2zM6 12h1v1h-1zM8 12h2v1h-2zM11 12h1v1h-1zM13 12h2v1h-2z"/><path fill="#fff" d="M13 7h2v1h-2zM2 8h4v1h-4zM7 8h3v1h-3zM11 8h3v1h-3zM2 10h1v1h-1zM7 10h1v1h-1zM12 10h1v1h-1zM15 10h1v1h-1zM1 11h1v1h-1zM4 11h1v1h-1zM6 11h1v1h-1zM9 11h1v1h-1zM11 11h1v1h-1zM14 11h1v1h-1zM2 13h1v1h-1zM4 13h2v1h-2zM7 13h1v1h-1zM9 13h2v1h-2zM12 13h1v1h-1zM14 13h2v1h-2z"/><text x="9" y="9.5" font-family="Liberation Serif,serif" font-size="11.5" font-weight="bold" fill="#fff" text-anchor="middle" letter-spacing="0.6" stroke="#fff" stroke-width="0.5">10</text><text x="8" y="8.5" font-family="Liberation Serif,serif" font-size="11.5" font-weight="bold" fill="#808080" text-anchor="middle" letter-spacing="0.6" stroke="#808080" stroke-width="0.5">10</text></svg><svg class="ic" style="left:329px;top:5px" width="17" height="17" viewBox="0 0 17 17" shape-rendering="crispEdges"><path fill="#808080" d="M1 9h2v1h-2zM4 9h1v1h-1zM6 9h2v1h-2zM9 9h1v1h-1zM11 9h2v1h-2zM14 9h1v1h-1zM0 10h1v1h-1zM3 10h1v1h-1zM5 10h1v1h-1zM8 10h1v1h-1zM10 10h1v1h-1zM13 10h1v1h-1zM0 11h1v1h-1zM2 11h1v1h-1zM5 11h1v1h-1zM7 11h1v1h-1zM10 11h1v1h-1zM12 11h1v1h-1zM1 12h1v1h-1zM3 12h2v1h-2zM6 12h1v1h-1zM8 12h2v1h-2zM11 12h1v1h-1zM13 12h2v1h-2z"/><path fill="#fff" d="M2 10h1v1h-1zM7 10h1v1h-1zM12 10h1v1h-1zM15 10h1v1h-1zM1 11h1v1h-1zM4 11h1v1h-1zM6 11h1v1h-1zM9 11h1v1h-1zM11 11h1v1h-1zM14 11h1v1h-1zM2 13h1v1h-1zM4 13h2v1h-2zM7 13h1v1h-1zM9 13h2v1h-2zM12 13h1v1h-1zM14 13h2v1h-2z"/><text x="9" y="9.5" font-family="Liberation Serif,serif" font-size="11.5" font-weight="bold" fill="#fff" text-anchor="middle" letter-spacing="0.6" stroke="#fff" stroke-width="0.5">16</text><text x="8" y="8.5" font-family="Liberation Serif,serif" font-size="11.5" font-weight="bold" fill="#808080" text-anchor="middle" letter-spacing="0.6" stroke="#808080" stroke-width="0.5">16</text></svg><div class="sep" style="left:352px"></div><svg class="ic" style="left:360px;top:5px" width="17" height="17" viewBox="0 0 17 17" shape-rendering="crispEdges"><path fill="#808080" d="M6 1h2v1h-2zM5 2h4v1h-4zM4 3h6v1h-6zM3 4h8v1h-8zM2 5h12v1h-12zM4 6h7v1h-7zM4 7h10v1h-10zM4 8h7v1h-7zM4 9h10v1h-10zM4 10h7v1h-7zM2 11h9v1h-9zM4 12h7v1h-7z"/><path fill="#fff" d="M3 6h1v1h-1zM11 6h4v1h-4zM11 8h4v1h-4zM11 10h4v1h-4zM11 11h1v1h-1zM3 12h1v1h-1zM11 12h1v1h-1zM5 13h7v1h-7z"/></svg><svg class="ic" style="left:383px;top:5px" width="17" height="17" viewBox="0 0 17 17" shape-rendering="crispEdges"><path fill="#808080" d="M1 1h4v1h-4zM2 2h4v1h-4zM3 3h4v1h-4zM1 4h13v1h-13zM2 5h9v1h-9zM3 6h11v1h-11zM4 7h7v1h-7zM4 8h10v1h-10zM4 9h7v1h-7zM2 10h9v1h-9zM4 11h7v1h-7z"/><path fill="#fff" d="M11 5h4v1h-4zM11 7h4v1h-4zM11 9h4v1h-4zM11 10h1v1h-1zM3 11h1v1h-1zM11 11h1v1h-1zM5 12h7v1h-7z"/></svg><svg class="ic" style="left:406px;top:5px" width="17" height="17" viewBox="0 0 17 17" shape-rendering="crispEdges"><path fill="#808080" d="M3 1h1v1h-1zM5 1h1v1h-1zM7 1h5v1h-5zM4 2h1v1h-1zM6 2h1v1h-1zM8 2h5v1h-5zM3 3h1v1h-1zM5 3h1v1h-1zM7 3h6v1h-6zM0 4h5v1h-5zM6 4h7v1h-7zM3 5h1v1h-1zM5 5h1v1h-1zM7 5h6v1h-6zM0 6h5v1h-5zM6 6h1v1h-1zM8 6h4v1h-4zM3 7h1v1h-1zM5 7h1v1h-1zM7 7h4v1h-4zM1 9h2v1h-2zM4 9h1v1h-1zM6 9h2v1h-2zM9 9h1v1h-1zM11 9h2v1h-2zM14 9h1v1h-1zM0 10h1v1h-1zM3 10h1v1h-1zM5 10h1v1h-1zM8 10h1v1h-1zM10 10h1v1h-1zM13 10h1v1h-1zM0 11h1v1h-1zM2 11h1v1h-1zM5 11h1v1h-1zM7 11h1v1h-1zM10 11h1v1h-1zM12 11h1v1h-1zM1 12h1v1h-1zM3 12h2v1h-2zM6 12h1v1h-1zM8 12h2v1h-2zM11 12h1v1h-1zM13 12h2v1h-2z"/><path fill="#fff" d="M13 3h1v1h-1zM13 4h1v1h-1zM1 5h2v1h-2zM4 5h1v1h-1zM13 5h1v1h-1zM12 6h2v1h-2zM1 7h2v1h-2zM4 7h1v1h-1zM11 7h2v1h-2zM4 8h1v1h-1zM6 8h1v1h-1zM8 8h4v1h-4zM2 10h1v1h-1zM7 10h1v1h-1zM12 10h1v1h-1zM15 10h1v1h-1zM1 11h1v1h-1zM4 11h1v1h-1zM6 11h1v1h-1zM9 11h1v1h-1zM11 11h1v1h-1zM14 11h1v1h-1zM2 13h1v1h-1zM4 13h2v1h-2zM7 13h1v1h-1zM9 13h2v1h-2zM12 13h1v1h-1zM14 13h2v1h-2z"/></svg></div>
<div class="tb" style="left:433px;top:99px;width:334px"><div class="grip" style="left:3px"></div><div class="grip" style="left:7px"></div><svg class="ic" style="left:15px;top:5px" width="17" height="17" viewBox="0 0 17 17" shape-rendering="crispEdges"><path fill="#808080" d="M1 1h13v1h-13zM0 2h15v1h-15zM0 3h2v1h-2zM11 3h4v1h-4zM0 4h2v1h-2zM11 4h4v1h-4zM0 5h2v1h-2zM11 5h4v1h-4zM0 6h8v1h-8zM11 6h4v1h-4zM0 7h15v1h-15zM0 8h15v1h-15zM0 9h15v1h-15zM0 10h2v1h-2zM13 10h2v1h-2zM0 11h2v1h-2zM3 11h2v1h-2zM6 11h1v1h-1zM8 11h1v1h-1zM10 11h1v1h-1zM13 11h2v1h-2zM0 12h2v1h-2zM13 12h2v1h-2zM0 13h15v1h-15zM1 14h13v1h-13z"/><path fill="#fff" d="M2 3h9v1h-9zM15 3h1v1h-1zM2 4h1v1h-1zM15 4h1v1h-1zM2 5h1v1h-1zM15 5h1v1h-1zM15 6h1v1h-1zM15 7h1v1h-1zM15 8h1v1h-1zM15 9h1v1h-1zM2 10h11v1h-11zM15 10h1v1h-1zM2 11h1v1h-1zM15 11h1v1h-1zM2 12h1v1h-1zM4 12h2v1h-2zM7 12h1v1h-1zM9 12h1v1h-1zM11 12h1v1h-1zM15 12h1v1h-1zM15 13h1v1h-1zM14 14h2v1h-2zM2 15h13v1h-13z"/></svg><svg class="ic" style="left:38px;top:5px" width="17" height="17" viewBox="0 0 17 17" shape-rendering="crispEdges"><path fill="#808080" d="M2 1h13v1h-13zM1 2h15v1h-15zM0 3h8v1h-8zM13 3h3v1h-3zM0 4h7v1h-7zM9 4h3v1h-3zM14 4h2v1h-2zM0 5h7v1h-7zM8 5h1v1h-1zM12 5h1v1h-1zM14 5h2v1h-2zM1 6h6v1h-6zM8 6h1v1h-1zM12 6h1v1h-1zM14 6h2v1h-2zM3 7h1v1h-1zM5 7h1v1h-1zM8 7h1v1h-1zM12 7h1v1h-1zM14 7h2v1h-2zM3 8h1v1h-1zM8 8h5v1h-5zM14 8h2v1h-2zM3 9h1v1h-1zM14 9h2v1h-2zM3 10h1v1h-1zM5 10h8v1h-8zM14 10h1v1h-1zM3 11h1v1h-1zM13 11h2v1h-2zM3 12h12v1h-12zM4 13h10v1h-10z"/><path fill="#fff" d="M8 3h5v1h-5zM16 3h1v1h-1zM7 4h2v1h-2zM16 4h1v1h-1zM7 5h1v1h-1zM10 5h2v1h-2zM16 5h1v1h-1zM7 6h1v1h-1zM9 6h1v1h-1zM13 6h1v1h-1zM16 6h1v1h-1zM2 7h1v1h-1zM4 7h1v1h-1zM6 7h2v1h-2zM9 7h1v1h-1zM13 7h1v1h-1zM16 7h1v1h-1zM4 8h1v1h-1zM6 8h1v1h-1zM13 8h1v1h-1zM16 8h1v1h-1zM4 9h1v1h-1zM9 9h5v1h-5zM16 9h1v1h-1zM4 10h1v1h-1zM15 10h2v1h-2zM4 11h1v1h-1zM6 11h7v1h-7zM15 11h1v1h-1zM15 12h1v1h-1zM14 13h2v1h-2zM5 14h10v1h-10z"/></svg><div class="sep" style="left:61px"></div><svg class="ic" style="left:69px;top:5px" width="17" height="17" viewBox="0 0 17 17" shape-rendering="crispEdges"><path fill="#808080" d="M0 1h11v1h-11zM0 2h1v1h-1zM10 2h4v1h-4zM0 3h9v1h-9zM10 3h1v1h-1zM13 3h1v1h-1zM0 4h1v1h-1zM10 4h1v1h-1zM13 4h1v1h-1zM0 5h9v1h-9zM10 5h2v1h-2zM13 5h1v1h-1zM0 6h1v1h-1zM10 6h1v1h-1zM13 6h1v1h-1zM0 7h9v1h-9zM10 7h1v1h-1zM13 7h1v1h-1zM0 8h1v1h-1zM9 8h5v1h-5zM1 9h9v1h-9zM11 9h1v1h-1zM13 9h2v1h-2zM2 10h7v1h-7zM10 10h1v1h-1zM12 10h1v1h-1zM14 10h1v1h-1zM11 11h1v1h-1zM13 11h2v1h-2zM10 12h1v1h-1zM12 12h1v1h-1zM14 12h1v1h-1zM11 13h3v1h-3z"/><path fill="#fff" d="M1 2h9v1h-9zM11 3h2v1h-2zM14 3h1v1h-1zM1 4h9v1h-9zM11 4h1v1h-1zM14 4h1v1h-1zM14 5h1v1h-1zM1 6h9v1h-9zM11 6h2v1h-2zM14 6h1v1h-1zM11 7h1v1h-1zM14 7h1v1h-1zM1 8h8v1h-8zM14 8h1v1h-1zM10 9h1v1h-1zM12 9h1v1h-1zM9 10h1v1h-1zM15 10h1v1h-1zM3 11h7v1h-7zM15 11h1v1h-1zM15 12h1v1h-1zM15 13h1v1h-1zM12 14h3v1h-3z"/></svg><div class="sep" style="left:92px"></div><svg class="ic" style="left:100px;top:5px" width="17" height="17" viewBox="0 0 17 17" shape-rendering="crispEdges"><path fill="#808080" d="M6 1h1v1h-1zM8 1h1v1h-1zM4 2h1v1h-1zM6 2h1v1h-1zM8 2h1v1h-1zM10 2h1v1h-1zM4 3h1v1h-1zM6 3h1v1h-1zM8 3h1v1h-1zM10 3h1v1h-1zM12 3h1v1h-1zM4 4h1v1h-1zM6 4h1v1h-1zM8 4h1v1h-1zM10 4h1v1h-1zM12 4h1v1h-1zM4 5h1v1h-1zM6 5h1v1h-1zM8 5h1v1h-1zM10 5h1v1h-1zM12 5h1v1h-1zM1 6h2v1h-2zM4 6h1v1h-1zM6 6h1v1h-1zM8 6h1v1h-1zM10 6h1v1h-1zM12 6h1v1h-1zM0 7h1v1h-1zM3 7h2v1h-2zM12 7h1v1h-1zM1 8h1v1h-1zM4 8h1v1h-1zM12 8h1v1h-1zM2 9h1v1h-1zM12 9h1v1h-1zM14 9h1v1h-1zM3 10h1v1h-1zM11 10h1v1h-1zM13 10h2v1h-2zM4 11h1v1h-1zM10 11h1v1h-1zM12 11h4v1h-4zM5 12h1v1h-1zM9 12h1v1h-1zM13 12h2v1h-2zM6 13h3v1h-3zM13 13h1v1h-1z"/><path fill="#fff" d="M7 2h1v1h-1zM9 2h1v1h-1zM5 3h1v1h-1zM7 3h1v1h-1zM9 3h1v1h-1zM11 3h1v1h-1zM5 4h1v1h-1zM7 4h1v1h-1zM9 4h1v1h-1zM11 4h1v1h-1zM13 4h1v1h-1zM5 5h1v1h-1zM7 5h1v1h-1zM9 5h1v1h-1zM11 5h1v1h-1zM13 5h1v1h-1zM5 6h1v1h-1zM7 6h1v1h-1zM9 6h1v1h-1zM11 6h1v1h-1zM13 6h1v1h-1zM2 7h1v1h-1zM5 7h1v1h-1zM7 7h1v1h-1zM9 7h1v1h-1zM11 7h1v1h-1zM13 7h1v1h-1zM5 8h1v1h-1zM13 8h1v1h-1zM5 9h1v1h-1zM13 9h1v1h-1zM15 10h1v1h-1zM11 12h1v1h-1zM15 12h2v1h-2zM10 13h1v1h-1zM14 13h2v1h-2zM7 14h3v1h-3zM14 14h1v1h-1z"/></svg><svg class="ic" style="left:123px;top:5px" width="17" height="17" viewBox="0 0 17 17" shape-rendering="crispEdges"><path fill="#808080" d="M6 1h1v1h-1zM8 1h1v1h-1zM4 2h1v1h-1zM6 2h1v1h-1zM8 2h1v1h-1zM10 2h1v1h-1zM4 3h1v1h-1zM6 3h1v1h-1zM8 3h1v1h-1zM10 3h1v1h-1zM12 3h1v1h-1zM4 4h1v1h-1zM6 4h3v1h-3zM10 4h1v1h-1zM12 4h1v1h-1zM4 5h7v1h-7zM12 5h1v1h-1zM1 6h2v1h-2zM4 6h9v1h-9zM0 7h1v1h-1zM3 7h10v1h-10zM1 8h1v1h-1zM4 8h9v1h-9zM2 9h1v1h-1zM4 9h9v1h-9zM14 9h1v1h-1zM3 10h9v1h-9zM13 10h2v1h-2zM4 11h7v1h-7zM12 11h4v1h-4zM5 12h5v1h-5zM13 12h2v1h-2zM6 13h3v1h-3zM13 13h1v1h-1z"/><path fill="#fff" d="M7 2h1v1h-1zM9 2h1v1h-1zM5 3h1v1h-1zM7 3h1v1h-1zM9 3h1v1h-1zM11 3h1v1h-1zM5 4h1v1h-1zM9 4h1v1h-1zM11 4h1v1h-1zM13 4h1v1h-1zM11 5h1v1h-1zM13 5h1v1h-1zM13 6h1v1h-1zM2 7h1v1h-1zM13 7h1v1h-1zM13 8h1v1h-1zM13 9h1v1h-1zM12 10h1v1h-1zM15 10h1v1h-1zM11 11h1v1h-1zM10 12h2v1h-2zM15 12h2v1h-2zM9 13h2v1h-2zM14 13h2v1h-2zM7 14h3v1h-3zM14 14h1v1h-1z"/></svg><svg class="ic" style="left:146px;top:5px" width="17" height="17" viewBox="0 0 17 17" shape-rendering="crispEdges"><path fill="#808080" d="M2 2h2v1h-2zM2 3h4v1h-4zM2 4h6v1h-6zM2 5h8v1h-8zM2 6h10v1h-10zM2 7h12v1h-12zM2 8h12v1h-12zM2 9h10v1h-10zM2 10h8v1h-8zM2 11h6v1h-6zM2 12h4v1h-4zM2 13h2v1h-2z"/><path fill="#fff" d="M14 8h1v1h-1zM12 9h3v1h-3zM10 10h3v1h-3zM8 11h3v1h-3zM6 12h3v1h-3zM4 13h3v1h-3zM3 14h2v1h-2z"/></svg><svg class="ic" style="left:169px;top:5px" width="17" height="17" viewBox="0 0 17 17" shape-rendering="crispEdges"><path fill="#808080" d="M2 3h11v1h-11zM2 4h11v1h-11zM2 5h11v1h-11zM2 6h11v1h-11zM2 7h11v1h-11zM2 8h11v1h-11zM2 9h11v1h-11zM2 10h11v1h-11zM2 11h11v1h-11zM2 12h11v1h-11zM2 13h11v1h-11z"/><path fill="#fff" d="M13 4h1v1h-1zM13 5h1v1h-1zM13 6h1v1h-1zM13 7h1v1h-1zM13 8h1v1h-1zM13 9h1v1h-1zM13 10h1v1h-1zM13 11h1v1h-1zM13 12h1v1h-1zM13 13h1v1h-1zM3 14h11v1h-11z"/></svg><svg class="ic" style="left:192px;top:5px" width="17" height="17" viewBox="0 0 17 17" shape-rendering="crispEdges"><path fill="#808080" d="M2 3h5v1h-5zM8 3h5v1h-5zM2 4h5v1h-5zM8 4h5v1h-5zM2 5h5v1h-5zM8 5h5v1h-5zM2 6h5v1h-5zM8 6h5v1h-5zM2 7h5v1h-5zM8 7h5v1h-5zM2 8h5v1h-5zM8 8h5v1h-5zM2 9h5v1h-5zM8 9h5v1h-5zM2 10h5v1h-5zM8 10h5v1h-5zM2 11h5v1h-5zM8 11h5v1h-5zM2 12h5v1h-5zM8 12h5v1h-5zM2 13h5v1h-5zM8 13h5v1h-5z"/><path fill="#fff" d="M7 4h1v1h-1zM13 4h1v1h-1zM7 5h1v1h-1zM13 5h1v1h-1zM7 6h1v1h-1zM13 6h1v1h-1zM7 7h1v1h-1zM13 7h1v1h-1zM7 8h1v1h-1zM13 8h1v1h-1zM7 9h1v1h-1zM13 9h1v1h-1zM7 10h1v1h-1zM13 10h1v1h-1zM7 11h1v1h-1zM13 11h1v1h-1zM7 12h1v1h-1zM13 12h1v1h-1zM7 13h1v1h-1zM13 13h1v1h-1zM3 14h5v1h-5zM9 14h5v1h-5z"/></svg><svg class="ic" style="left:215px;top:5px" width="17" height="17" viewBox="0 0 17 17" shape-rendering="crispEdges"><path fill="#808080" d="M1 2h2v1h-2zM12 2h3v1h-3zM1 3h4v1h-4zM12 3h3v1h-3zM1 4h6v1h-6zM12 4h3v1h-3zM1 5h8v1h-8zM12 5h3v1h-3zM1 6h10v1h-10zM12 6h3v1h-3zM1 7h14v1h-14zM1 8h14v1h-14zM1 9h10v1h-10zM12 9h3v1h-3zM1 10h8v1h-8zM12 10h3v1h-3zM1 11h6v1h-6zM12 11h3v1h-3zM1 12h4v1h-4zM12 12h3v1h-3zM1 13h2v1h-2zM12 13h3v1h-3z"/><path fill="#fff" d="M15 3h1v1h-1zM15 4h1v1h-1zM15 5h1v1h-1zM15 6h1v1h-1zM15 7h1v1h-1zM15 8h1v1h-1zM11 9h1v1h-1zM15 9h1v1h-1zM9 10h3v1h-3zM15 10h1v1h-1zM7 11h3v1h-3zM15 11h1v1h-1zM5 12h3v1h-3zM15 12h1v1h-1zM3 13h3v1h-3zM15 13h1v1h-1zM2 14h2v1h-2zM13 14h3v1h-3z"/></svg><svg class="ic" style="left:238px;top:5px" width="17" height="17" viewBox="0 0 17 17" shape-rendering="crispEdges"><path fill="#808080" d="M1 1h1v1h-1zM7 1h2v1h-2zM1 2h2v1h-2zM7 2h2v1h-2zM1 3h3v1h-3zM7 3h2v1h-2zM10 3h4v1h-4zM1 4h4v1h-4zM7 4h2v1h-2zM10 4h2v1h-2zM1 5h5v1h-5zM7 5h2v1h-2zM10 5h4v1h-4zM1 6h4v1h-4zM6 6h3v1h-3zM10 6h2v1h-2zM1 7h3v1h-3zM5 7h4v1h-4zM10 7h4v1h-4zM1 8h2v1h-2zM4 8h9v1h-9zM1 9h1v1h-1zM3 9h10v1h-10zM3 10h10v1h-10zM4 11h8v1h-8z"/><path fill="#fff" d="M9 2h1v1h-1zM9 3h1v1h-1zM9 4h1v1h-1zM12 4h3v1h-3zM9 5h1v1h-1zM5 6h1v1h-1zM9 6h1v1h-1zM12 6h3v1h-3zM4 7h1v1h-1zM9 7h1v1h-1zM3 8h1v1h-1zM13 8h2v1h-2zM2 9h1v1h-1zM13 9h1v1h-1zM2 10h1v1h-1zM13 10h1v1h-1zM12 11h2v1h-2zM5 12h8v1h-8z"/></svg><svg class="ic" style="left:261px;top:5px" width="17" height="17" viewBox="0 0 17 17" shape-rendering="crispEdges"><path fill="#808080" d="M5 1h1v1h-1zM11 1h2v1h-2zM5 2h2v1h-2zM11 2h2v1h-2zM1 3h7v1h-7zM11 3h2v1h-2zM3 4h6v1h-6zM11 4h2v1h-2zM1 5h9v1h-9zM11 5h2v1h-2zM3 6h6v1h-6zM10 6h3v1h-3zM1 7h7v1h-7zM9 7h4v1h-4zM3 8h4v1h-4zM8 8h5v1h-5zM1 9h12v1h-12zM3 10h10v1h-10zM4 11h8v1h-8z"/><path fill="#fff" d="M13 2h1v1h-1zM13 3h1v1h-1zM2 4h1v1h-1zM13 4h1v1h-1zM13 5h1v1h-1zM2 6h1v1h-1zM9 6h1v1h-1zM13 6h1v1h-1zM8 7h1v1h-1zM13 7h1v1h-1zM2 8h1v1h-1zM7 8h1v1h-1zM13 8h1v1h-1zM13 9h1v1h-1zM2 10h1v1h-1zM13 10h1v1h-1zM12 11h2v1h-2zM5 12h8v1h-8z"/></svg><svg class="ic" style="left:284px;top:5px" width="17" height="17" viewBox="0 0 17 17" shape-rendering="crispEdges"><path fill="#808080" d="M1 2h2v1h-2zM8 2h2v1h-2zM1 3h4v1h-4zM8 3h4v1h-4zM1 4h5v1h-5zM8 4h5v1h-5zM1 5h6v1h-6zM8 5h6v1h-6zM1 6h14v1h-14zM1 7h14v1h-14zM1 8h14v1h-14zM1 9h6v1h-6zM8 9h6v1h-6zM1 10h5v1h-5zM8 10h5v1h-5zM1 11h4v1h-4zM8 11h4v1h-4zM1 12h2v1h-2zM8 12h2v1h-2z"/><path fill="#fff" d="M15 7h1v1h-1zM15 8h1v1h-1zM7 9h1v1h-1zM14 9h2v1h-2zM6 10h2v1h-2zM13 10h2v1h-2zM5 11h2v1h-2zM12 11h2v1h-2zM3 12h3v1h-3zM10 12h3v1h-3zM2 13h2v1h-2zM9 13h2v1h-2z"/></svg><svg class="ic" style="left:307px;top:5px" width="17" height="17" viewBox="0 0 17 17" shape-rendering="crispEdges"><path fill="#808080" d="M1 2h3v1h-3zM12 2h3v1h-3zM1 3h5v1h-5zM12 3h3v1h-3zM3 4h5v1h-5zM12 4h3v1h-3zM5 5h5v1h-5zM12 5h3v1h-3zM7 6h8v1h-8zM9 7h6v1h-6zM7 8h8v1h-8zM5 9h5v1h-5zM12 9h3v1h-3zM3 10h5v1h-5zM12 10h3v1h-3zM1 11h5v1h-5zM12 11h3v1h-3zM1 12h3v1h-3zM12 12h3v1h-3z"/><path fill="#fff" d="M15 3h1v1h-1zM2 4h1v1h-1zM15 4h1v1h-1zM4 5h1v1h-1zM15 5h1v1h-1zM6 6h1v1h-1zM15 6h1v1h-1zM8 7h1v1h-1zM15 7h1v1h-1zM15 8h1v1h-1zM10 9h2v1h-2zM15 9h1v1h-1zM8 10h3v1h-3zM15 10h1v1h-1zM6 11h3v1h-3zM15 11h1v1h-1zM4 12h3v1h-3zM15 12h1v1h-1zM2 13h3v1h-3zM13 13h3v1h-3z"/></svg></div>
<div class="tb" style="left:767px;top:99px;width:257px"><div class="grip" style="left:3px"></div><div class="grip" style="left:7px"></div><svg class="ic" style="left:15px;top:5px" width="17" height="17" viewBox="0 0 17 17" shape-rendering="crispEdges"><path fill="#808080" d="M1 6h13v1h-13zM1 7h1v1h-1zM3 7h1v1h-1zM5 7h1v1h-1zM7 7h1v1h-1zM9 7h1v1h-1zM11 7h3v1h-3zM1 8h2v1h-2zM4 8h1v1h-1zM6 8h1v1h-1zM8 8h1v1h-1zM10 8h1v1h-1zM12 8h2v1h-2zM1 9h1v1h-1zM3 9h1v1h-1zM5 9h1v1h-1zM7 9h1v1h-1zM9 9h1v1h-1zM11 9h3v1h-3zM1 10h2v1h-2zM4 10h1v1h-1zM6 10h1v1h-1zM8 10h1v1h-1zM10 10h1v1h-1zM12 10h2v1h-2zM1 11h13v1h-13zM7 12h1v1h-1z"/><path fill="#fff" d="M2 7h1v1h-1zM4 7h1v1h-1zM6 7h1v1h-1zM8 7h1v1h-1zM10 7h1v1h-1zM14 7h1v1h-1zM14 8h1v1h-1zM2 9h1v1h-1zM14 9h1v1h-1zM14 10h1v1h-1zM14 11h1v1h-1zM2 12h5v1h-5zM8 12h7v1h-7zM8 13h1v1h-1z"/></svg><svg class="ic" style="left:38px;top:5px" width="17" height="17" viewBox="0 0 17 17" shape-rendering="crispEdges"><path fill="#808080" d="M0 5h15v1h-15zM0 6h2v1h-2zM3 6h1v1h-1zM5 6h1v1h-1zM7 6h1v1h-1zM9 6h1v1h-1zM11 6h1v1h-1zM13 6h2v1h-2zM0 7h1v1h-1zM2 7h1v1h-1zM4 7h1v1h-1zM6 7h1v1h-1zM8 7h1v1h-1zM10 7h1v1h-1zM12 7h3v1h-3zM0 8h2v1h-2zM3 8h1v1h-1zM5 8h1v1h-1zM7 8h1v1h-1zM9 8h1v1h-1zM11 8h1v1h-1zM13 8h2v1h-2zM0 9h1v1h-1zM2 9h1v1h-1zM4 9h1v1h-1zM6 9h1v1h-1zM8 9h1v1h-1zM10 9h1v1h-1zM12 9h3v1h-3zM0 10h2v1h-2zM3 10h1v1h-1zM5 10h1v1h-1zM7 10h1v1h-1zM9 10h1v1h-1zM11 10h1v1h-1zM13 10h2v1h-2zM0 11h15v1h-15zM6 12h2v1h-2z"/><path fill="#fff" d="M2 6h1v1h-1zM4 6h1v1h-1zM6 6h1v1h-1zM8 6h1v1h-1zM10 6h1v1h-1zM12 6h1v1h-1zM15 6h1v1h-1zM1 7h1v1h-1zM15 7h1v1h-1zM15 8h1v1h-1zM1 9h1v1h-1zM15 9h1v1h-1zM15 10h1v1h-1zM15 11h1v1h-1zM1 12h5v1h-5zM8 12h8v1h-8zM7 13h2v1h-2z"/></svg><svg class="ic" style="left:61px;top:5px" width="17" height="17" viewBox="0 0 17 17" shape-rendering="crispEdges"><path fill="#808080" d="M4 2h7v1h-7zM5 3h5v1h-5zM7 4h1v1h-1zM1 5h13v1h-13zM1 6h1v1h-1zM3 6h1v1h-1zM5 6h1v1h-1zM7 6h1v1h-1zM9 6h1v1h-1zM11 6h3v1h-3zM1 7h2v1h-2zM4 7h1v1h-1zM6 7h1v1h-1zM8 7h1v1h-1zM10 7h1v1h-1zM12 7h2v1h-2zM1 8h1v1h-1zM3 8h1v1h-1zM5 8h1v1h-1zM7 8h1v1h-1zM9 8h1v1h-1zM11 8h3v1h-3zM1 9h2v1h-2zM4 9h1v1h-1zM6 9h1v1h-1zM8 9h1v1h-1zM10 9h1v1h-1zM12 9h2v1h-2zM1 10h13v1h-13zM7 11h1v1h-1zM7 12h1v1h-1z"/><path fill="#fff" d="M10 3h2v1h-2zM6 4h1v1h-1zM8 4h3v1h-3zM2 6h1v1h-1zM4 6h1v1h-1zM6 6h1v1h-1zM8 6h1v1h-1zM10 6h1v1h-1zM14 6h1v1h-1zM14 7h1v1h-1zM2 8h1v1h-1zM14 8h1v1h-1zM14 9h1v1h-1zM14 10h1v1h-1zM2 11h5v1h-5zM8 11h7v1h-7zM8 12h1v1h-1zM8 13h1v1h-1z"/></svg><svg class="ic" style="left:84px;top:5px" width="17" height="17" viewBox="0 0 17 17" shape-rendering="crispEdges"><path fill="#808080" d="M7 2h1v1h-1zM7 3h1v1h-1zM1 4h13v1h-13zM1 5h1v1h-1zM3 5h1v1h-1zM5 5h1v1h-1zM7 5h1v1h-1zM9 5h1v1h-1zM11 5h3v1h-3zM1 6h2v1h-2zM4 6h1v1h-1zM6 6h1v1h-1zM8 6h1v1h-1zM10 6h1v1h-1zM12 6h2v1h-2zM1 7h1v1h-1zM3 7h1v1h-1zM5 7h1v1h-1zM7 7h1v1h-1zM9 7h1v1h-1zM11 7h3v1h-3zM1 8h2v1h-2zM4 8h1v1h-1zM6 8h1v1h-1zM8 8h1v1h-1zM10 8h1v1h-1zM12 8h2v1h-2zM1 9h13v1h-13zM7 10h1v1h-1zM5 11h5v1h-5zM4 12h7v1h-7z"/><path fill="#fff" d="M8 3h1v1h-1zM2 5h1v1h-1zM4 5h1v1h-1zM6 5h1v1h-1zM8 5h1v1h-1zM10 5h1v1h-1zM14 5h1v1h-1zM14 6h1v1h-1zM2 7h1v1h-1zM14 7h1v1h-1zM14 8h1v1h-1zM14 9h1v1h-1zM2 10h5v1h-5zM8 10h7v1h-7zM5 13h7v1h-7z"/></svg><svg class="ic" style="left:107px;top:5px" width="17" height="17" viewBox="0 0 17 17" shape-rendering="crispEdges"><path fill="#808080" d="M2 3h1v1h-1zM4 3h1v1h-1zM6 3h1v1h-1zM8 3h1v1h-1zM10 3h1v1h-1zM12 3h1v1h-1zM2 4h11v1h-11zM7 5h1v1h-1zM7 6h1v1h-1zM7 7h1v1h-1zM2 8h11v1h-11zM7 9h1v1h-1zM7 10h1v1h-1zM5 11h5v1h-5zM7 12h1v1h-1zM7 13h1v1h-1z"/><path fill="#fff" d="M13 4h1v1h-1zM3 5h4v1h-4zM8 5h6v1h-6zM8 6h1v1h-1zM8 7h1v1h-1zM3 9h4v1h-4zM8 9h6v1h-6zM8 10h1v1h-1zM6 12h1v1h-1zM8 12h3v1h-3zM8 13h1v1h-1zM8 14h1v1h-1z"/></svg><svg class="ic" style="left:130px;top:5px" width="17" height="17" viewBox="0 0 17 17" shape-rendering="crispEdges"><path fill="#808080" d="M3 3h1v1h-1zM5 3h1v1h-1zM7 3h1v1h-1zM9 3h1v1h-1zM11 3h1v1h-1zM13 3h1v1h-1zM3 4h11v1h-11zM7 5h1v1h-1zM7 6h1v1h-1zM1 7h15v1h-15zM3 8h1v1h-1zM12 8h1v1h-1zM3 9h1v1h-1zM12 9h1v1h-1zM1 10h5v1h-5zM10 10h5v1h-5zM3 11h1v1h-1zM12 11h1v1h-1zM3 12h1v1h-1zM12 12h1v1h-1z"/><path fill="#fff" d="M14 4h1v1h-1zM4 5h3v1h-3zM8 5h7v1h-7zM8 6h1v1h-1zM2 8h1v1h-1zM4 8h8v1h-8zM13 8h4v1h-4zM4 9h1v1h-1zM13 9h1v1h-1zM2 11h1v1h-1zM4 11h3v1h-3zM11 11h1v1h-1zM13 11h3v1h-3zM4 12h1v1h-1zM13 12h1v1h-1zM4 13h1v1h-1zM13 13h1v1h-1z"/></svg><svg class="ic" style="left:153px;top:5px" width="17" height="17" viewBox="0 0 17 17" shape-rendering="crispEdges"><path fill="#808080" d="M3 2h1v1h-1zM12 2h1v1h-1zM3 3h1v1h-1zM12 3h1v1h-1zM1 4h5v1h-5zM10 4h5v1h-5zM3 5h1v1h-1zM12 5h1v1h-1zM3 6h1v1h-1zM12 6h1v1h-1zM0 7h15v1h-15zM7 8h1v1h-1zM7 9h1v1h-1zM3 10h11v1h-11zM3 11h1v1h-1zM5 11h1v1h-1zM7 11h1v1h-1zM9 11h1v1h-1zM11 11h1v1h-1zM13 11h1v1h-1z"/><path fill="#fff" d="M4 3h1v1h-1zM13 3h1v1h-1zM2 5h1v1h-1zM4 5h3v1h-3zM11 5h1v1h-1zM13 5h3v1h-3zM4 6h1v1h-1zM13 6h1v1h-1zM1 8h6v1h-6zM8 8h8v1h-8zM8 9h1v1h-1zM4 11h1v1h-1zM6 11h1v1h-1zM8 11h1v1h-1zM10 11h1v1h-1zM12 11h1v1h-1zM14 11h1v1h-1zM4 12h1v1h-1zM6 12h1v1h-1zM8 12h1v1h-1zM10 12h1v1h-1zM12 12h1v1h-1zM14 12h1v1h-1z"/></svg><svg class="ic" style="left:176px;top:5px" width="17" height="17" viewBox="0 0 17 17" shape-rendering="crispEdges"><path fill="#808080" d="M7 2h1v1h-1zM7 3h1v1h-1zM4 4h7v1h-7zM7 5h1v1h-1zM7 6h1v1h-1zM0 7h15v1h-15zM3 8h1v1h-1zM11 8h1v1h-1zM3 9h1v1h-1zM11 9h1v1h-1zM0 10h7v1h-7zM8 10h7v1h-7zM0 11h1v1h-1zM2 11h1v1h-1zM4 11h1v1h-1zM6 11h1v1h-1zM8 11h1v1h-1zM10 11h1v1h-1zM12 11h1v1h-1zM14 11h1v1h-1zM1 12h1v1h-1zM3 12h1v1h-1zM5 12h1v1h-1zM9 12h1v1h-1zM11 12h1v1h-1zM13 12h1v1h-1z"/><path fill="#fff" d="M8 3h1v1h-1zM5 5h2v1h-2zM8 5h4v1h-4zM8 6h1v1h-1zM1 8h2v1h-2zM4 8h7v1h-7zM12 8h4v1h-4zM4 9h1v1h-1zM12 9h1v1h-1zM1 11h1v1h-1zM3 11h1v1h-1zM5 11h1v1h-1zM7 11h1v1h-1zM9 11h1v1h-1zM11 11h1v1h-1zM13 11h1v1h-1zM15 11h1v1h-1zM7 12h1v1h-1zM15 12h1v1h-1zM2 13h1v1h-1zM4 13h1v1h-1zM6 13h1v1h-1zM10 13h1v1h-1zM12 13h1v1h-1zM14 13h1v1h-1z"/></svg><svg class="ic" style="left:199px;top:5px" width="17" height="17" viewBox="0 0 17 17" shape-rendering="crispEdges"><path fill="#808080" d="M0 2h1v1h-1zM2 2h1v1h-1zM4 2h1v1h-1zM6 2h1v1h-1zM8 2h1v1h-1zM10 2h1v1h-1zM12 2h1v1h-1zM14 2h1v1h-1zM0 3h7v1h-7zM8 3h7v1h-7zM3 4h1v1h-1zM11 4h1v1h-1zM3 5h1v1h-1zM11 5h1v1h-1zM0 6h15v1h-15zM0 7h15v1h-15zM7 8h1v1h-1zM7 9h1v1h-1zM4 10h7v1h-7zM7 11h1v1h-1zM7 12h1v1h-1z"/><path fill="#fff" d="M7 3h1v1h-1zM15 3h1v1h-1zM1 4h2v1h-2zM4 4h4v1h-4zM9 4h2v1h-2zM12 4h4v1h-4zM4 5h1v1h-1zM12 5h1v1h-1zM15 7h1v1h-1zM1 8h6v1h-6zM8 8h8v1h-8zM8 9h1v1h-1zM5 11h2v1h-2zM8 11h4v1h-4zM8 12h1v1h-1zM8 13h1v1h-1z"/></svg><div class="sep" style="left:222px"></div><svg class="ic" style="left:230px;top:5px" width="17" height="17" viewBox="0 0 17 17" shape-rendering="crispEdges"><path fill="#808080" d="M2 3h1v1h-1zM2 4h1v1h-1zM2 5h1v1h-1zM2 6h1v1h-1zM2 7h8v1h-8zM9 8h1v1h-1zM9 9h1v1h-1zM9 10h1v1h-1zM9 11h1v1h-1zM9 12h1v1h-1z"/><path fill="#fff" d="M3 4h1v1h-1zM3 5h1v1h-1zM3 6h1v1h-1zM3 8h6v1h-6zM10 8h1v1h-1zM10 9h1v1h-1zM10 10h1v1h-1zM10 11h1v1h-1zM10 12h1v1h-1zM10 13h1v1h-1z"/></svg></div>
<div class="tb" style="left:0px;top:129px;width:218px"><div class="grip" style="left:2px"></div><div class="grip" style="left:6px"></div><svg class="ic" style="left:13px;top:5px" width="17" height="17" viewBox="0 0 17 17" shape-rendering="crispEdges"><path fill="#808080" d="M6 1h1v1h-1zM4 2h10v1h-10zM1 3h1v1h-1zM6 3h1v1h-1zM0 4h5v1h-5zM6 4h8v1h-8zM0 5h5v1h-5zM6 5h8v1h-8zM1 6h1v1h-1zM6 6h1v1h-1zM4 7h8v1h-8zM6 8h1v1h-1zM4 9h10v1h-10zM6 10h1v1h-1zM4 11h7v1h-7zM6 12h1v1h-1zM6 13h1v1h-1z"/><path fill="#fff" d="M5 3h1v1h-1zM7 3h8v1h-8zM5 5h1v1h-1zM14 5h1v1h-1zM2 6h4v1h-4zM7 6h8v1h-8zM2 7h1v1h-1zM5 8h1v1h-1zM7 8h6v1h-6zM5 10h1v1h-1zM7 10h8v1h-8zM5 12h1v1h-1zM7 12h5v1h-5zM7 13h1v1h-1zM7 14h1v1h-1z"/></svg><svg class="ic" style="left:36px;top:5px" width="17" height="17" viewBox="0 0 17 17" shape-rendering="crispEdges"><path fill="#808080" d="M6 1h1v1h-1zM4 2h10v1h-10zM3 3h1v1h-1zM6 3h1v1h-1zM0 4h5v1h-5zM6 4h8v1h-8zM0 5h5v1h-5zM6 5h8v1h-8zM3 6h1v1h-1zM6 6h1v1h-1zM4 7h8v1h-8zM6 8h1v1h-1zM4 9h10v1h-10zM6 10h1v1h-1zM4 11h7v1h-7zM6 12h1v1h-1zM6 13h1v1h-1z"/><path fill="#fff" d="M5 3h1v1h-1zM7 3h8v1h-8zM5 5h1v1h-1zM14 5h1v1h-1zM1 6h2v1h-2zM4 6h2v1h-2zM7 6h8v1h-8zM5 8h1v1h-1zM7 8h6v1h-6zM5 10h1v1h-1zM7 10h8v1h-8zM5 12h1v1h-1zM7 12h5v1h-5zM7 13h1v1h-1zM7 14h1v1h-1z"/></svg><div class="sep" style="left:60px"></div><svg class="ic" style="left:67px;top:5px" width="17" height="17" viewBox="0 0 17 17" shape-rendering="crispEdges"><path fill="#808080" d="M1 2h13v1h-13zM5 5h9v1h-9zM5 8h9v1h-9zM7 11h7v1h-7zM3 14h11v1h-11z"/><path fill="#fff" d="M2 3h13v1h-13zM6 6h9v1h-9zM6 9h9v1h-9zM8 12h7v1h-7zM4 15h11v1h-11z"/></svg><svg class="ic" style="left:90px;top:5px" width="17" height="17" viewBox="0 0 17 17" shape-rendering="crispEdges"><path fill="#808080" d="M6 1h4v1h-4zM1 2h2v1h-2zM4 2h2v1h-2zM10 2h2v1h-2zM1 3h4v1h-4zM11 3h1v1h-1zM1 4h12v1h-12zM1 5h2v1h-2zM3 7h11v1h-11zM6 10h8v1h-8zM2 13h12v1h-12z"/><path fill="#fff" d="M7 2h3v1h-3zM5 3h2v1h-2zM12 3h1v1h-1zM3 5h11v1h-11zM2 6h2v1h-2zM4 8h11v1h-11zM7 11h8v1h-8zM3 14h12v1h-12z"/></svg><div class="sep" style="left:114px"></div><svg class="ic" style="left:121px;top:5px" width="17" height="17" viewBox="0 0 17 17" shape-rendering="crispEdges"><path fill="#808080" d="M11 2h1v1h-1zM10 3h2v1h-2zM9 4h4v1h-4zM8 5h6v1h-6zM7 6h8v1h-8zM6 7h9v1h-9zM5 8h1v1h-1zM8 8h7v1h-7zM4 9h1v1h-1zM9 9h6v1h-6zM3 10h1v1h-1zM10 10h4v1h-4zM2 11h1v1h-1zM11 11h2v1h-2zM1 12h1v1h-1zM0 13h1v1h-1z"/><path fill="#fff" d="M12 3h1v1h-1zM15 7h1v1h-1zM7 8h1v1h-1zM15 8h1v1h-1zM6 9h1v1h-1zM15 9h1v1h-1zM5 10h1v1h-1zM14 10h2v1h-2zM4 11h1v1h-1zM13 11h2v1h-2zM3 12h1v1h-1zM12 12h2v1h-2zM2 13h1v1h-1zM1 14h1v1h-1z"/></svg><svg class="ic" style="left:144px;top:5px" width="17" height="17" viewBox="0 0 17 17" shape-rendering="crispEdges"><path fill="#808080" d="M3 1h4v1h-4zM1 2h1v1h-1zM3 2h1v1h-1zM7 2h1v1h-1zM0 3h3v1h-3zM8 3h1v1h-1zM11 3h1v1h-1zM1 4h1v1h-1zM8 4h1v1h-1zM10 4h2v1h-2zM9 5h4v1h-4zM8 6h6v1h-6zM7 7h8v1h-8zM6 8h9v1h-9zM5 9h1v1h-1zM8 9h7v1h-7zM4 10h1v1h-1zM9 10h6v1h-6zM3 11h1v1h-1zM10 11h4v1h-4zM2 12h1v1h-1zM11 12h2v1h-2zM1 13h1v1h-1zM0 14h1v1h-1z"/><path fill="#fff" d="M4 2h3v1h-3zM4 3h1v1h-1zM2 4h2v1h-2zM9 4h1v1h-1zM12 4h1v1h-1zM2 5h1v1h-1zM15 8h1v1h-1zM7 9h1v1h-1zM15 9h1v1h-1zM6 10h1v1h-1zM15 10h1v1h-1zM5 11h1v1h-1zM14 11h2v1h-2zM4 12h1v1h-1zM13 12h2v1h-2zM3 13h1v1h-1zM12 13h2v1h-2zM2 14h1v1h-1zM1 15h1v1h-1z"/></svg><svg class="ic" style="left:167px;top:5px" width="17" height="17" viewBox="0 0 17 17" shape-rendering="crispEdges"><path fill="#808080" d="M3 1h4v1h-4zM2 2h1v1h-1zM7 2h1v1h-1zM9 2h1v1h-1zM1 3h1v1h-1zM8 3h3v1h-3zM1 4h1v1h-1zM9 4h1v1h-1zM11 4h1v1h-1zM9 5h4v1h-4zM8 6h6v1h-6zM7 7h8v1h-8zM6 8h9v1h-9zM5 9h1v1h-1zM8 9h7v1h-7zM4 10h1v1h-1zM9 10h6v1h-6zM3 11h1v1h-1zM10 11h4v1h-4zM2 12h1v1h-1zM11 12h2v1h-2zM1 13h1v1h-1zM0 14h1v1h-1z"/><path fill="#fff" d="M4 2h3v1h-3zM3 3h1v1h-1zM2 4h1v1h-1zM10 4h1v1h-1zM2 5h1v1h-1zM15 8h1v1h-1zM7 9h1v1h-1zM15 9h1v1h-1zM6 10h1v1h-1zM15 10h1v1h-1zM5 11h1v1h-1zM14 11h2v1h-2zM4 12h1v1h-1zM13 12h2v1h-2zM3 13h1v1h-1zM12 13h2v1h-2zM2 14h1v1h-1zM1 15h1v1h-1z"/></svg><svg class="ic" style="left:190px;top:5px" width="17" height="17" viewBox="0 0 17 17" shape-rendering="crispEdges"><path fill="#808080" d="M3 1h1v1h-1zM7 1h1v1h-1zM4 2h1v1h-1zM6 2h1v1h-1zM11 2h1v1h-1zM5 3h1v1h-1zM10 3h2v1h-2zM4 4h1v1h-1zM6 4h1v1h-1zM9 4h4v1h-4zM3 5h1v1h-1zM7 5h7v1h-7zM7 6h8v1h-8zM6 7h9v1h-9zM5 8h1v1h-1zM8 8h7v1h-7zM4 9h1v1h-1zM9 9h6v1h-6zM3 10h1v1h-1zM10 10h4v1h-4zM2 11h1v1h-1zM11 11h2v1h-2zM1 12h1v1h-1zM0 13h1v1h-1z"/><path fill="#fff" d="M8 2h1v1h-1zM7 3h1v1h-1zM12 3h1v1h-1zM5 5h1v1h-1zM4 6h1v1h-1zM15 7h1v1h-1zM7 8h1v1h-1zM15 8h1v1h-1zM6 9h1v1h-1zM15 9h1v1h-1zM5 10h1v1h-1zM14 10h2v1h-2zM4 11h1v1h-1zM13 11h2v1h-2zM3 12h1v1h-1zM12 12h2v1h-2zM2 13h1v1h-1zM1 14h1v1h-1z"/></svg></div>
<div class="a" style="left:801px;top:0px;width:421px;height:69px;background:#d4d0c8;border:1px solid;border-color:#d4d0c8 #404040 #404040 #d4d0c8;box-shadow:inset 1px 1px 0 #fff,inset -1px -1px 0 #808080"></div>
<div class="a" style="left:803px;top:3px;width:416px;height:15px;background:linear-gradient(90deg,#808080,#c0c0c0)"></div>
<div class="t" style="left:804px;top:5px;color:#d4d0c8;font-weight:bold;font-size:12px;-webkit-text-stroke:0;letter-spacing:0.046px;">CX-Programmer Information</div>
<div class="a" style="left:805px;top:21px;width:25px;height:23px;border:1px solid #808080;box-shadow:inset -1px -1px 0 #e8e6e0"></div>
<div class="a" style="left:805px;top:43px;width:25px;height:23px;border:1px solid #808080;box-shadow:inset -1px -1px 0 #e8e6e0"></div>
<div class="a" style="left:829px;top:21px;width:26px;height:23px;border:1px solid #808080;box-shadow:inset -1px -1px 0 #e8e6e0"></div>
<div class="a" style="left:829px;top:43px;width:26px;height:23px;border:1px solid #808080;box-shadow:inset -1px -1px 0 #e8e6e0"></div>
<div class="a" style="left:854px;top:21px;width:26px;height:23px;border:1px solid #808080;box-shadow:inset -1px -1px 0 #e8e6e0"></div>
<div class="a" style="left:854px;top:43px;width:26px;height:23px;border:1px solid #808080;box-shadow:inset -1px -1px 0 #e8e6e0"></div>
<div class="a" style="left:879px;top:21px;width:47px;height:23px;border:1px solid #808080;box-shadow:inset -1px -1px 0 #e8e6e0"></div>
<div class="a" style="left:879px;top:43px;width:47px;height:23px;border:1px solid #808080;box-shadow:inset -1px -1px 0 #e8e6e0"></div>
<div class="a" style="left:925px;top:21px;width:42px;height:23px;border:1px solid #808080;box-shadow:inset -1px -1px 0 #e8e6e0"></div>
<div class="a" style="left:925px;top:43px;width:42px;height:23px;border:1px solid #808080;box-shadow:inset -1px -1px 0 #e8e6e0"></div>
<div class="a" style="left:966px;top:21px;width:41px;height:23px;border:1px solid #808080;box-shadow:inset -1px -1px 0 #e8e6e0"></div>
<div class="a" style="left:966px;top:43px;width:41px;height:23px;border:1px solid #808080;box-shadow:inset -1px -1px 0 #e8e6e0"></div>
<div class="a" style="left:1006px;top:21px;width:52px;height:23px;border:1px solid #808080;box-shadow:inset -1px -1px 0 #e8e6e0"></div>
<div class="a" style="left:1006px;top:43px;width:52px;height:23px;border:1px solid #808080;box-shadow:inset -1px -1px 0 #e8e6e0"></div>
<div class="a" style="left:1057px;top:21px;width:43px;height:23px;border:1px solid #808080;box-shadow:inset -1px -1px 0 #e8e6e0"></div>
<div class="a" style="left:1057px;top:43px;width:43px;height:23px;border:1px solid #808080;box-shadow:inset -1px -1px 0 #e8e6e0"></div>
<div class="a" style="left:1099px;top:21px;width:44px;height:23px;border:1px solid #808080;box-shadow:inset -1px -1px 0 #e8e6e0"></div>
<div class="a" style="left:1099px;top:43px;width:44px;height:23px;border:1px solid #808080;box-shadow:inset -1px -1px 0 #e8e6e0"></div>
<div class="a" style="left:1142px;top:21px;width:75px;height:45px;border:1px solid #808080;box-shadow:inset -1px -1px 0 #e8e6e0"></div>
<svg class="ic" style="left:806px;top:23px" width="16" height="16" viewBox="0 0 16 16" shape-rendering="crispEdges"><path fill="#000" d="M5 1h1v1h-1zM13 1h1v1h-1zM5 2h1v1h-1zM13 2h1v1h-1zM5 3h1v1h-1zM13 3h1v1h-1zM5 4h1v1h-1zM13 4h1v1h-1zM5 5h1v1h-1zM13 5h1v1h-1zM0 6h6v1h-6zM13 6h5v1h-5zM5 7h1v1h-1zM13 7h1v1h-1zM5 8h1v1h-1zM13 8h1v1h-1zM5 9h1v1h-1zM13 9h1v1h-1zM5 10h1v1h-1zM13 10h1v1h-1zM5 11h1v1h-1zM13 11h1v1h-1z"/></svg>
<div class="t ik" style="left:805px;top:32px;width:24px;text-align:right;letter-spacing:0px">C</div>
<svg class="ic" style="left:830px;top:23px" width="16" height="16" viewBox="0 0 16 16" shape-rendering="crispEdges"><path fill="#000" d="M0 1h1v1h-1zM5 1h1v1h-1zM13 1h1v1h-1zM17 1h1v1h-1zM0 2h1v1h-1zM5 2h1v1h-1zM13 2h1v1h-1zM17 2h1v1h-1zM0 3h1v1h-1zM5 3h1v1h-1zM13 3h1v1h-1zM17 3h1v1h-1zM0 4h1v1h-1zM5 4h1v1h-1zM13 4h1v1h-1zM17 4h1v1h-1zM0 5h1v1h-1zM5 5h1v1h-1zM13 5h1v1h-1zM17 5h1v1h-1zM0 6h1v1h-1zM5 6h1v1h-1zM13 6h1v1h-1zM17 6h1v1h-1zM0 7h1v1h-1zM5 7h1v1h-1zM13 7h1v1h-1zM17 7h1v1h-1zM0 8h6v1h-6zM13 8h5v1h-5zM5 9h1v1h-1zM13 9h1v1h-1zM5 10h1v1h-1zM13 10h1v1h-1zM5 11h1v1h-1zM13 11h1v1h-1zM5 12h1v1h-1zM13 12h1v1h-1z"/></svg>
<div class="t ik" style="left:829px;top:32px;width:25px;text-align:right;letter-spacing:0px">W</div>
<svg class="ic" style="left:855px;top:23px" width="16" height="16" viewBox="0 0 16 16" shape-rendering="crispEdges"><path fill="#000" d="M5 1h6v1h-6zM4 2h1v1h-1zM11 2h1v1h-1zM3 3h1v1h-1zM12 3h1v1h-1zM3 4h1v1h-1zM12 4h1v1h-1zM3 5h1v1h-1zM12 5h1v1h-1zM0 6h4v1h-4zM12 6h4v1h-4zM3 7h1v1h-1zM12 7h1v1h-1zM3 8h1v1h-1zM12 8h1v1h-1zM3 9h1v1h-1zM12 9h1v1h-1zM4 10h1v1h-1zM11 10h1v1h-1zM5 11h6v1h-6z"/></svg>
<div class="t ik" style="left:854px;top:32px;width:25px;text-align:right;letter-spacing:0px">O</div>
<svg class="ic" style="left:806px;top:44px" width="16" height="16" viewBox="0 0 16 16" shape-rendering="crispEdges"><path fill="#000" d="M5 1h1v1h-1zM12 1h2v1h-2zM5 2h1v1h-1zM11 2h1v1h-1zM13 2h1v1h-1zM5 3h1v1h-1zM11 3h1v1h-1zM13 3h1v1h-1zM5 4h1v1h-1zM10 4h1v1h-1zM13 4h1v1h-1zM5 5h1v1h-1zM10 5h1v1h-1zM13 5h1v1h-1zM0 6h6v1h-6zM9 6h1v1h-1zM13 6h5v1h-5zM5 7h1v1h-1zM8 7h1v1h-1zM13 7h1v1h-1zM5 8h1v1h-1zM8 8h1v1h-1zM13 8h1v1h-1zM5 9h1v1h-1zM7 9h1v1h-1zM13 9h1v1h-1zM5 10h1v1h-1zM7 10h1v1h-1zM13 10h1v1h-1zM5 11h2v1h-2zM13 11h1v1h-1z"/></svg>
<div class="t ik" style="left:805px;top:53px;width:24px;text-align:right;letter-spacing:0px">/</div>
<svg class="ic" style="left:830px;top:44px" width="16" height="16" viewBox="0 0 16 16" shape-rendering="crispEdges"><path fill="#000" d="M0 1h1v1h-1zM5 1h1v1h-1zM12 1h2v1h-2zM17 1h1v1h-1zM0 2h1v1h-1zM5 2h1v1h-1zM11 2h1v1h-1zM13 2h1v1h-1zM17 2h1v1h-1zM0 3h1v1h-1zM5 3h1v1h-1zM11 3h1v1h-1zM13 3h1v1h-1zM17 3h1v1h-1zM0 4h1v1h-1zM5 4h1v1h-1zM10 4h1v1h-1zM13 4h1v1h-1zM17 4h1v1h-1zM0 5h1v1h-1zM5 5h1v1h-1zM10 5h1v1h-1zM13 5h1v1h-1zM17 5h1v1h-1zM0 6h1v1h-1zM5 6h1v1h-1zM9 6h1v1h-1zM13 6h1v1h-1zM17 6h1v1h-1zM0 7h1v1h-1zM5 7h1v1h-1zM8 7h1v1h-1zM13 7h1v1h-1zM17 7h1v1h-1zM0 8h6v1h-6zM8 8h1v1h-1zM13 8h5v1h-5zM5 9h1v1h-1zM7 9h1v1h-1zM13 9h1v1h-1zM5 10h1v1h-1zM7 10h1v1h-1zM13 10h1v1h-1zM5 11h2v1h-2zM13 11h1v1h-1zM5 12h1v1h-1zM13 12h1v1h-1z"/></svg>
<div class="t ik" style="left:829px;top:53px;width:25px;text-align:right;letter-spacing:0px">X</div>
<svg class="ic" style="left:855px;top:44px" width="16" height="16" viewBox="0 0 16 16" shape-rendering="crispEdges"><path fill="#000" d="M13 0h1v1h-1zM5 1h6v1h-6zM12 1h1v1h-1zM4 2h1v1h-1zM11 2h1v1h-1zM3 3h1v1h-1zM10 3h1v1h-1zM12 3h1v1h-1zM3 4h1v1h-1zM9 4h1v1h-1zM12 4h1v1h-1zM3 5h1v1h-1zM8 5h1v1h-1zM12 5h1v1h-1zM0 6h4v1h-4zM7 6h1v1h-1zM12 6h4v1h-4zM3 7h1v1h-1zM7 7h1v1h-1zM12 7h1v1h-1zM3 8h1v1h-1zM6 8h1v1h-1zM12 8h1v1h-1zM3 9h1v1h-1zM5 9h1v1h-1zM12 9h1v1h-1zM4 10h1v1h-1zM11 10h1v1h-1zM3 11h1v1h-1zM5 11h6v1h-6zM2 12h1v1h-1z"/></svg>
<div class="t ik" style="left:854px;top:53px;width:25px;text-align:right;letter-spacing:0px">Q</div>
<svg class="ic" style="left:889px;top:23px" width="16" height="16" viewBox="0 0 16 16" shape-rendering="crispEdges"><path fill="#000" d="M6 1h9v1h-9zM6 2h1v1h-1zM14 2h1v1h-1zM6 3h1v1h-1zM14 3h1v1h-1zM2 4h5v1h-5zM14 4h4v1h-4zM6 5h1v1h-1zM14 5h1v1h-1zM6 6h9v1h-9zM6 7h1v1h-1zM14 7h1v1h-1zM6 8h1v1h-1zM14 8h1v1h-1zM6 9h9v1h-9zM6 10h1v1h-1zM14 10h1v1h-1zM6 11h1v1h-1zM14 11h1v1h-1zM6 12h9v1h-9z"/></svg>
<div class="t ik" style="left:879px;top:32px;width:35px;text-align:right;letter-spacing:0px">I</div>
<div class="t il" style="left:869px;top:43px;width:67px;letter-spacing:0.2px"><span>Work Online</span></div>
<div class="t ik" style="left:869px;top:53px;width:67px;letter-spacing:0px">Ctrl+W</div>
<div class="t il" style="left:915px;top:22px;width:62px;letter-spacing:0.4px"><span>Program</span></div>
<div class="t ik" style="left:915px;top:32px;width:62px;letter-spacing:0px">Ctrl+1</div>
<div class="t il" style="left:915px;top:43px;width:62px;letter-spacing:0.4px"><span>Monitor</span></div>
<div class="t ik" style="left:915px;top:53px;width:62px;letter-spacing:0px">Ctrl+3</div>
<div class="t il" style="left:956px;top:22px;width:61px;letter-spacing:0.4px"><span>Run</span></div>
<div class="t ik" style="left:956px;top:32px;width:61px;letter-spacing:0px">Ctrl+4</div>
<div class="t il" style="left:956px;top:43px;width:61px;letter-spacing:0.2px"><span>Force On</span></div>
<div class="t ik" style="left:956px;top:53px;width:61px;letter-spacing:0px">Ctrl+J</div>
<div class="t il" style="left:996px;top:22px;width:72px;letter-spacing:0.2px"><span>Force Off</span></div>
<div class="t ik" style="left:996px;top:32px;width:72px;letter-spacing:0px">Ctrl+K</div>
<div class="t il" style="left:996px;top:43px;width:72px;letter-spacing:0.1px"><span>Force Cancel</span></div>
<div class="t ik" style="left:996px;top:53px;width:72px;letter-spacing:0px">Ctrl+L</div>
<div class="t il" style="left:1047px;top:22px;width:63px;letter-spacing:0.1px"><span>Next Addr.</span></div>
<div class="t ik" style="left:1047px;top:32px;width:63px;letter-spacing:0px">N</div>
<div class="t il" style="left:1047px;top:43px;width:63px;letter-spacing:0.1px"><span>Prev. Jump</span></div>
<div class="t ik" style="left:1047px;top:53px;width:63px;letter-spacing:0px">B</div>
<div class="t il" style="left:1089px;top:22px;width:64px;letter-spacing:0.4px"><span>Find bit</span></div>
<div class="t ik" style="left:1089px;top:32px;width:64px;letter-spacing:0px">SPACE</div>
<div class="t il" style="left:1089px;top:43px;width:64px;letter-spacing:0.4px"><span>Comment</span></div>
<div class="t ik" style="left:1089px;top:53px;width:64px;letter-spacing:0px">L</div>
<div class="t il" style="left:1129px;top:25px;width:95px;letter-spacing:1.1px"><span>Information</span></div>
<div class="t il" style="left:1129px;top:36px;width:95px;letter-spacing:0.5px"><span>Show / Hide</span></div>
<div class="t ik" style="left:1132px;top:52px;width:95px;letter-spacing:0.5px">Ctrl+Shift+I</div>
<div class="a" style="left:4px;top:165px;width:264px;height:3px;border:1px solid;border-color:#fff #808080 #808080 #fff"></div>
<div class="a" style="left:4px;top:169px;width:264px;height:3px;border:1px solid;border-color:#fff #808080 #808080 #fff"></div>
<div class="a btn" style="left:270px;top:161px;width:12px;height:12px;"><svg width="12" height="12" viewBox="0 0 12 12" shape-rendering="crispEdges" style="left:-1px;top:-1px"><path d="M2 4h7l-3.5 3.5z" fill="#808080"/></svg></div>
<div class="a btn" style="left:284px;top:161px;width:12px;height:12px;"><svg width="12" height="12" viewBox="0 0 12 12" shape-rendering="crispEdges" style="left:-1px;top:-1px"><path d="M2.5 3l5 5M7.5 3l-5 5" stroke="#000" stroke-width="1.6" shape-rendering="auto"/></svg></div>
<div class="a" style="left:3px;top:175px;width:293px;height:559px;background:#fff;border:1px solid;border-color:#808080 #fff #000 #808080;box-shadow:inset 1px 1px 0 #404040"></div>
<div class="a" style="left:32px;top:193px;width:1px;height:12px;background-image:linear-gradient(180deg,#808080 50%,transparent 0);background-size:1px 2px"></div>
<div class="a" style="left:51px;top:209px;width:1px;height:56px;background-image:linear-gradient(180deg,#808080 50%,transparent 0);background-size:1px 2px"></div>
<div class="a" style="left:70px;top:273px;width:1px;height:8px;background-image:linear-gradient(180deg,#808080 50%,transparent 0);background-size:1px 2px"></div>
<div class="a" style="left:89px;top:289px;width:1px;height:41px;background-image:linear-gradient(180deg,#808080 50%,transparent 0);background-size:1px 2px"></div>
<div class="a" style="left:18px;top:185px;width:5px;height:1px;background-image:linear-gradient(90deg,#808080 50%,transparent 0);background-size:2px 1px"></div>
<div class="a" style="left:9px;top:181px;width:9px;height:9px;border:1px solid #808080;background:#fff"></div>
<div class="a" style="left:11px;top:185px;width:5px;height:1px;background:#000"></div>
<svg class="ic" style="left:24px;top:177px" width="16" height="16" viewBox="0 0 16 16" shape-rendering="crispEdges"><path fill="#000" d="M5 1h5v1h-5zM5 2h1v1h-1zM9 2h1v1h-1zM5 3h5v1h-5zM7 4h1v1h-1zM2 5h11v1h-11zM2 6h1v1h-1zM7 6h1v1h-1zM12 6h1v1h-1zM1 7h3v1h-3zM6 7h3v1h-3zM11 7h3v1h-3zM1 8h1v1h-1zM3 8h1v1h-1zM6 8h1v1h-1zM8 8h1v1h-1zM11 8h1v1h-1zM13 8h1v1h-1zM1 9h3v1h-3zM6 9h3v1h-3zM11 9h3v1h-3zM7 10h1v1h-1zM4 11h7v1h-7zM3 12h3v1h-3zM9 12h3v1h-3zM3 13h1v1h-1zM5 13h1v1h-1zM9 13h1v1h-1zM11 13h1v1h-1zM3 14h3v1h-3zM9 14h3v1h-3z"/><path fill="#fff" d="M6 2h3v1h-3zM2 8h1v1h-1zM7 8h1v1h-1zM12 8h1v1h-1zM4 13h1v1h-1zM10 13h1v1h-1z"/></svg>
<div class="t tr" style="left:44px;top:179px;letter-spacing:-0.025px;">NewProject</div>
<div class="a" style="left:37px;top:201px;width:5px;height:1px;background-image:linear-gradient(90deg,#808080 50%,transparent 0);background-size:2px 1px"></div>
<div class="a" style="left:28px;top:197px;width:9px;height:9px;border:1px solid #808080;background:#fff"></div>
<div class="a" style="left:30px;top:201px;width:5px;height:1px;background:#000"></div>
<svg class="ic" style="left:43px;top:193px" width="16" height="16" viewBox="0 0 16 16" shape-rendering="crispEdges"><path fill="#000" d="M1 1h14v1h-14zM0 2h16v1h-16zM0 3h1v1h-1zM3 3h1v1h-1zM6 3h1v1h-1zM9 3h1v1h-1zM12 3h1v1h-1zM15 3h1v1h-1zM0 4h1v1h-1zM3 4h1v1h-1zM6 4h1v1h-1zM9 4h1v1h-1zM12 4h1v1h-1zM15 4h1v1h-1zM0 5h1v1h-1zM3 5h1v1h-1zM6 5h1v1h-1zM9 5h1v1h-1zM12 5h1v1h-1zM15 5h1v1h-1zM0 6h1v1h-1zM3 6h1v1h-1zM6 6h1v1h-1zM9 6h1v1h-1zM12 6h1v1h-1zM15 6h1v1h-1zM0 7h16v1h-16zM1 8h14v1h-14zM7 9h1v1h-1zM1 10h2v1h-2zM4 10h1v1h-1zM6 10h3v1h-3zM10 10h1v1h-1zM12 10h2v1h-2zM6 11h1v1h-1zM8 11h1v1h-1zM5 12h1v1h-1zM9 12h1v1h-1z"/><path fill="#c0c0c0" d="M1 3h2v1h-2zM4 3h2v1h-2zM7 3h2v1h-2zM10 3h2v1h-2zM13 3h2v1h-2zM2 4h1v1h-1zM5 4h1v1h-1zM8 4h1v1h-1zM11 4h1v1h-1zM14 4h1v1h-1zM2 5h1v1h-1zM5 5h1v1h-1zM8 5h1v1h-1zM11 5h1v1h-1zM14 5h1v1h-1zM1 6h2v1h-2zM4 6h2v1h-2zM7 6h2v1h-2zM10 6h2v1h-2zM13 6h2v1h-2z"/><path fill="#fff" d="M1 4h1v1h-1zM4 4h1v1h-1zM7 4h1v1h-1zM10 4h1v1h-1zM13 4h1v1h-1zM1 5h1v1h-1zM4 5h1v1h-1zM7 5h1v1h-1zM10 5h1v1h-1zM13 5h1v1h-1z"/></svg>
<div class="t tr" style="left:63px;top:195px;letter-spacing:-0.289px;">NewPLC1[CPM1(CPM1A)] Offline</div>
<div class="a" style="left:52px;top:217px;width:10px;height:1px;background-image:linear-gradient(90deg,#808080 50%,transparent 0);background-size:2px 1px"></div>
<svg class="ic" style="left:62px;top:209px" width="16" height="16" viewBox="0 0 16 16" shape-rendering="crispEdges"><path fill="#000" d="M2 1h10v1h-10zM1 2h1v1h-1zM12 2h1v1h-1zM1 3h1v1h-1zM12 3h2v1h-2zM1 4h1v1h-1zM12 4h1v1h-1zM14 4h1v1h-1zM2 5h11v1h-11zM14 5h1v1h-1zM14 6h1v1h-1zM3 7h12v1h-12zM2 8h1v1h-1zM6 8h1v1h-1zM11 8h1v1h-1zM14 8h1v1h-1zM2 9h1v1h-1zM6 9h1v1h-1zM11 9h1v1h-1zM14 9h1v1h-1zM1 11h3v1h-3zM5 11h3v1h-3zM9 11h3v1h-3zM13 11h3v1h-3zM1 12h1v1h-1zM5 12h1v1h-1zM9 12h1v1h-1zM13 12h1v1h-1z"/><path fill="#ffffa0" d="M2 2h10v1h-10zM2 3h10v1h-10zM2 4h10v1h-10z"/><path fill="#fff" d="M13 4h1v1h-1z"/></svg>
<div class="t tr" style="left:82px;top:211px;letter-spacing:-0.355px;">Symbols</div>
<div class="a" style="left:52px;top:233px;width:10px;height:1px;background-image:linear-gradient(90deg,#808080 50%,transparent 0);background-size:2px 1px"></div>
<svg class="ic" style="left:62px;top:225px" width="16" height="16" viewBox="0 0 16 16" shape-rendering="crispEdges"><path fill="#000" d="M2 0h1v1h-1zM4 0h1v1h-1zM6 0h1v1h-1zM8 0h1v1h-1zM10 0h1v1h-1zM12 0h1v1h-1zM1 1h13v1h-13zM1 2h1v1h-1zM13 2h1v1h-1zM1 3h1v1h-1zM13 3h1v1h-1zM1 4h1v1h-1zM3 4h2v1h-2zM6 4h6v1h-6zM13 4h1v1h-1zM1 5h1v1h-1zM13 5h1v1h-1zM1 6h1v1h-1zM3 6h2v1h-2zM7 6h4v1h-4zM13 6h1v1h-1zM1 7h1v1h-1zM6 7h1v1h-1zM11 7h1v1h-1zM13 7h1v1h-1zM1 8h1v1h-1zM3 8h2v1h-2zM6 8h1v1h-1zM8 8h2v1h-2zM11 8h1v1h-1zM13 8h1v1h-1zM1 9h1v1h-1zM6 9h1v1h-1zM8 9h2v1h-2zM11 9h1v1h-1zM13 9h1v1h-1zM1 10h1v1h-1zM3 10h2v1h-2zM6 10h1v1h-1zM11 10h1v1h-1zM13 10h1v1h-1zM1 11h1v1h-1zM7 11h4v1h-4zM13 11h1v1h-1zM1 12h1v1h-1zM13 12h1v1h-1zM1 13h13v1h-13z"/><path fill="#fff" d="M2 2h11v1h-11zM2 3h11v1h-11zM2 4h1v1h-1zM5 4h1v1h-1zM12 4h1v1h-1zM2 5h11v1h-11zM2 6h1v1h-1zM5 6h2v1h-2zM11 6h2v1h-2zM2 7h4v1h-4zM7 7h4v1h-4zM12 7h1v1h-1zM2 8h1v1h-1zM5 8h1v1h-1zM7 8h1v1h-1zM10 8h1v1h-1zM12 8h1v1h-1zM2 9h4v1h-4zM7 9h1v1h-1zM10 9h1v1h-1zM12 9h1v1h-1zM2 10h1v1h-1zM5 10h1v1h-1zM7 10h4v1h-4zM12 10h1v1h-1zM2 11h5v1h-5zM11 11h2v1h-2zM2 12h11v1h-11z"/></svg>
<div class="t tr" style="left:82px;top:227px;letter-spacing:-0.031px;">Settings</div>
<div class="a" style="left:52px;top:249px;width:10px;height:1px;background-image:linear-gradient(90deg,#808080 50%,transparent 0);background-size:2px 1px"></div>
<svg class="ic" style="left:62px;top:241px" width="16" height="16" viewBox="0 0 16 16" shape-rendering="crispEdges"><path fill="#000" d="M9 3h3v1h-3zM7 4h2v1h-2zM12 4h2v1h-2zM5 5h2v1h-2zM14 5h1v1h-1zM3 6h2v1h-2zM12 6h3v1h-3zM1 7h2v1h-2zM10 7h2v1h-2zM13 7h2v1h-2zM0 8h1v1h-1zM9 8h1v1h-1zM12 8h2v1h-2zM0 9h2v1h-2zM7 9h2v1h-2zM11 9h2v1h-2zM14 9h1v1h-1zM1 10h2v1h-2zM5 10h2v1h-2zM9 10h2v1h-2zM12 10h1v1h-1zM14 10h1v1h-1zM1 11h1v1h-1zM3 11h2v1h-2zM7 11h2v1h-2zM10 11h1v1h-1zM12 11h1v1h-1zM1 12h1v1h-1zM3 12h1v1h-1zM5 12h2v1h-2zM8 12h1v1h-1zM10 12h1v1h-1zM3 13h1v1h-1zM5 13h1v1h-1zM7 13h1v1h-1z"/><path fill="#c0c0c0" d="M9 4h3v1h-3zM7 5h7v1h-7zM5 6h7v1h-7zM3 7h7v1h-7zM2 8h7v1h-7zM3 9h4v1h-4zM4 10h1v1h-1z"/><path fill="#808080" d="M12 7h1v1h-1zM1 8h1v1h-1zM10 8h2v1h-2zM2 9h1v1h-1zM9 9h2v1h-2zM3 10h1v1h-1zM7 10h2v1h-2zM5 11h2v1h-2z"/></svg>
<div class="t tr" style="left:82px;top:243px;letter-spacing:-0.206px;">Memory</div>
<div class="a" style="left:56px;top:265px;width:5px;height:1px;background-image:linear-gradient(90deg,#808080 50%,transparent 0);background-size:2px 1px"></div>
<div class="a" style="left:47px;top:261px;width:9px;height:9px;border:1px solid #808080;background:#fff"></div>
<div class="a" style="left:49px;top:265px;width:5px;height:1px;background:#000"></div>
<svg class="ic" style="left:62px;top:257px" width="16" height="16" viewBox="0 0 16 16" shape-rendering="crispEdges"><path fill="#000" d="M1 1h6v1h-6zM0 2h1v1h-1zM2 2h1v1h-1zM4 2h1v1h-1zM6 2h2v1h-2zM0 3h2v1h-2zM3 3h1v1h-1zM5 3h1v1h-1zM7 3h2v1h-2zM1 4h1v1h-1zM3 4h1v1h-1zM5 4h1v1h-1zM7 4h1v1h-1zM9 4h1v1h-1zM1 5h2v1h-2zM4 5h1v1h-1zM6 5h1v1h-1zM8 5h3v1h-3zM2 6h1v1h-1zM4 6h1v1h-1zM6 6h1v1h-1zM8 6h1v1h-1zM10 6h1v1h-1zM2 7h2v1h-2zM5 7h1v1h-1zM7 7h1v1h-1zM9 7h3v1h-3zM3 8h1v1h-1zM5 8h1v1h-1zM7 8h1v1h-1zM9 8h1v1h-1zM11 8h1v1h-1zM3 9h2v1h-2zM6 9h1v1h-1zM8 9h1v1h-1zM10 9h2v1h-2zM4 10h1v1h-1zM6 10h1v1h-1zM8 10h1v1h-1zM10 10h1v1h-1zM12 10h1v1h-1zM4 11h2v1h-2zM7 11h1v1h-1zM9 11h1v1h-1zM11 11h2v1h-2zM5 12h1v1h-1zM7 12h1v1h-1zM9 12h1v1h-1zM11 12h2v1h-2zM5 13h8v1h-8z"/><path fill="#ffffa0" d="M1 2h1v1h-1zM3 2h1v1h-1zM5 2h1v1h-1zM2 3h1v1h-1zM4 3h1v1h-1zM6 3h1v1h-1zM2 4h1v1h-1zM4 4h1v1h-1zM6 4h1v1h-1zM8 4h1v1h-1zM3 5h1v1h-1zM5 5h1v1h-1zM7 5h1v1h-1zM3 6h1v1h-1zM5 6h1v1h-1zM7 6h1v1h-1zM9 6h1v1h-1zM4 7h1v1h-1zM6 7h1v1h-1zM8 7h1v1h-1zM4 8h1v1h-1zM6 8h1v1h-1zM8 8h1v1h-1zM10 8h1v1h-1zM5 9h1v1h-1zM7 9h1v1h-1zM9 9h1v1h-1zM5 10h1v1h-1zM7 10h1v1h-1zM9 10h1v1h-1zM11 10h1v1h-1zM6 11h1v1h-1zM8 11h1v1h-1zM10 11h1v1h-1zM6 12h1v1h-1zM8 12h1v1h-1zM10 12h1v1h-1z"/></svg>
<div class="t tr" style="left:82px;top:259px;letter-spacing:-0.273px;">Programs</div>
<div class="a" style="left:75px;top:281px;width:5px;height:1px;background-image:linear-gradient(90deg,#808080 50%,transparent 0);background-size:2px 1px"></div>
<div class="a" style="left:66px;top:277px;width:9px;height:9px;border:1px solid #808080;background:#fff"></div>
<div class="a" style="left:68px;top:281px;width:5px;height:1px;background:#000"></div>
<svg class="ic" style="left:81px;top:273px" width="16" height="16" viewBox="0 0 16 16" shape-rendering="crispEdges"><path fill="#000" d="M4 1h1v1h-1zM6 1h5v1h-5zM2 2h4v1h-4zM11 2h3v1h-3zM1 3h1v1h-1zM14 3h1v1h-1zM0 4h2v1h-2zM14 4h2v1h-2zM1 5h1v1h-1zM7 5h3v1h-3zM14 5h1v1h-1zM1 6h2v1h-2zM6 6h1v1h-1zM8 6h1v1h-1zM10 6h1v1h-1zM13 6h1v1h-1zM2 7h2v1h-2zM5 7h1v1h-1zM7 7h1v1h-1zM9 7h1v1h-1zM11 7h3v1h-3zM3 8h2v1h-2zM6 8h1v1h-1zM8 8h1v1h-1zM10 8h1v1h-1zM12 8h1v1h-1zM4 9h1v1h-1zM6 9h1v1h-1zM8 9h1v1h-1zM10 9h1v1h-1zM12 9h1v1h-1zM4 10h2v1h-2zM7 10h1v1h-1zM9 10h1v1h-1zM11 10h2v1h-2zM5 11h1v1h-1zM7 11h1v1h-1zM9 11h1v1h-1zM11 11h1v1h-1zM5 12h2v1h-2zM8 12h1v1h-1zM10 12h2v1h-2zM6 13h5v1h-5z"/><path fill="#fff" d="M6 2h5v1h-5zM2 3h12v1h-12zM2 4h12v1h-12zM2 5h5v1h-5zM10 5h4v1h-4zM3 6h3v1h-3zM11 6h2v1h-2zM4 7h1v1h-1zM8 7h1v1h-1zM7 9h1v1h-1z"/><path fill="#ffffa0" d="M7 6h1v1h-1zM9 6h1v1h-1zM6 7h1v1h-1zM10 7h1v1h-1zM5 8h1v1h-1zM7 8h1v1h-1zM9 8h1v1h-1zM11 8h1v1h-1zM5 9h1v1h-1zM9 9h1v1h-1zM11 9h1v1h-1zM6 10h1v1h-1zM8 10h1v1h-1zM10 10h1v1h-1zM6 11h1v1h-1zM8 11h1v1h-1zM10 11h1v1h-1zM7 12h1v1h-1zM9 12h1v1h-1z"/></svg>
<div class="t tr" style="left:101px;top:275px;letter-spacing:-0.328px;">NewProgram1</div>
<div class="a" style="left:90px;top:297px;width:10px;height:1px;background-image:linear-gradient(90deg,#808080 50%,transparent 0);background-size:2px 1px"></div>
<svg class="ic" style="left:100px;top:289px" width="16" height="16" viewBox="0 0 16 16" shape-rendering="crispEdges"><path fill="#000" d="M2 1h10v1h-10zM1 2h1v1h-1zM12 2h1v1h-1zM1 3h1v1h-1zM12 3h2v1h-2zM1 4h1v1h-1zM12 4h1v1h-1zM14 4h1v1h-1zM2 5h11v1h-11zM14 5h1v1h-1zM14 6h1v1h-1zM3 7h12v1h-12zM2 8h1v1h-1zM6 8h1v1h-1zM11 8h1v1h-1zM14 8h1v1h-1zM2 9h1v1h-1zM6 9h1v1h-1zM11 9h1v1h-1zM14 9h1v1h-1zM1 11h3v1h-3zM5 11h3v1h-3zM9 11h3v1h-3zM13 11h3v1h-3zM1 12h1v1h-1zM5 12h1v1h-1zM9 12h1v1h-1zM13 12h1v1h-1z"/><path fill="#ffffa0" d="M2 2h10v1h-10zM2 3h10v1h-10zM2 4h10v1h-10z"/><path fill="#fff" d="M13 4h1v1h-1z"/></svg>
<div class="t tr" style="left:120px;top:291px;letter-spacing:-0.355px;">Symbols</div>
<div class="a" style="left:90px;top:313px;width:10px;height:1px;background-image:linear-gradient(90deg,#808080 50%,transparent 0);background-size:2px 1px"></div>
<svg class="ic" style="left:100px;top:305px" width="16" height="16" viewBox="0 0 16 16" shape-rendering="crispEdges"><path fill="#000" d="M3 1h10v1h-10zM2 2h1v1h-1zM13 2h1v1h-1zM1 3h1v1h-1zM4 3h8v1h-8zM14 3h1v1h-1zM1 4h1v1h-1zM14 4h1v1h-1zM1 5h2v1h-2zM13 5h2v1h-2zM1 6h1v1h-1zM3 6h10v1h-10zM14 6h1v1h-1zM1 7h1v1h-1zM5 7h1v1h-1zM8 7h1v1h-1zM11 7h1v1h-1zM14 7h1v1h-1zM2 8h1v1h-1zM5 8h2v1h-2zM8 8h2v1h-2zM11 8h1v1h-1zM13 8h1v1h-1zM2 9h1v1h-1zM5 9h1v1h-1zM8 9h1v1h-1zM11 9h1v1h-1zM13 9h1v1h-1zM3 10h10v1h-10zM5 11h1v1h-1zM10 11h1v1h-1zM5 12h1v1h-1zM10 12h1v1h-1zM6 13h4v1h-4z"/><path fill="#ffffa0" d="M3 2h10v1h-10zM2 3h2v1h-2zM12 3h2v1h-2zM2 4h12v1h-12zM3 5h10v1h-10zM2 6h1v1h-1zM13 6h1v1h-1zM2 7h3v1h-3zM6 7h2v1h-2zM9 7h2v1h-2zM12 7h2v1h-2zM3 8h2v1h-2zM7 8h1v1h-1zM10 8h1v1h-1zM12 8h1v1h-1zM3 9h2v1h-2zM6 9h2v1h-2zM9 9h2v1h-2zM12 9h1v1h-1zM6 11h4v1h-4zM6 12h4v1h-4z"/></svg>
<div class="a" style="left:118px;top:306px;width:46px;height:15px;background:#d4d0c8"></div>
<div class="t tr" style="left:120px;top:307px;letter-spacing:-0.289px;">Section1</div>
<div class="a" style="left:90px;top:329px;width:10px;height:1px;background-image:linear-gradient(90deg,#808080 50%,transparent 0);background-size:2px 1px"></div>
<svg class="ic" style="left:100px;top:321px" width="16" height="16" viewBox="0 0 16 16" shape-rendering="crispEdges"><path fill="#000" d="M3 1h10v1h-10zM2 2h1v1h-1zM13 2h1v1h-1zM1 3h1v1h-1zM4 3h8v1h-8zM14 3h1v1h-1zM1 4h1v1h-1zM14 4h1v1h-1zM1 5h2v1h-2zM13 5h2v1h-2zM1 6h1v1h-1zM3 6h10v1h-10zM14 6h1v1h-1zM1 7h1v1h-1zM5 7h1v1h-1zM8 7h1v1h-1zM11 7h1v1h-1zM14 7h1v1h-1zM2 8h1v1h-1zM5 8h2v1h-2zM8 8h2v1h-2zM11 8h1v1h-1zM13 8h1v1h-1zM2 9h1v1h-1zM5 9h1v1h-1zM8 9h1v1h-1zM11 9h1v1h-1zM13 9h1v1h-1zM3 10h10v1h-10zM5 11h1v1h-1zM10 11h1v1h-1zM5 12h1v1h-1zM10 12h1v1h-1zM6 13h4v1h-4z"/><path fill="#ffffa0" d="M3 2h10v1h-10zM2 3h2v1h-2zM12 3h2v1h-2zM2 4h12v1h-12zM3 5h10v1h-10zM2 6h1v1h-1zM13 6h1v1h-1zM2 7h3v1h-3zM6 7h2v1h-2zM9 7h2v1h-2zM12 7h2v1h-2zM3 8h2v1h-2zM7 8h1v1h-1zM10 8h1v1h-1zM12 8h1v1h-1zM3 9h2v1h-2zM6 9h2v1h-2zM9 9h2v1h-2zM12 9h1v1h-1zM6 11h4v1h-4zM6 12h4v1h-4z"/></svg>
<div class="t tr" style="left:120px;top:323px;"><span style="display:inline-block;transform:scaleX(0.884);transform-origin:0 50%">END</span></div>
<div class="a" style="left:3px;top:734px;width:1px;height:16px;background:#808080"></div>
<div class="a" style="left:4px;top:734px;width:1px;height:16px;background:#404040"></div>
<svg class="a" style="left:0;top:733px" width="300" height="18" viewBox="0 0 300 18"><path d="M5 0.5L11.5 15.5H51.5L57.5 0.5" fill="#fff" stroke="#000" stroke-width="1"/><path d="M57 0.5H296" stroke="#000" stroke-width="1" fill="none"/></svg>
<div class="t tr" style="left:15px;top:735px;letter-spacing:-0.107px;">Project</div>
<div class="a" style="left:0px;top:750px;width:297px;height:1px;background:#808080"></div>
<div class="a" style="left:0px;top:751px;width:1280px;height:1px;background:#fff"></div>
<div class="a" style="left:302px;top:160px;width:1px;height:591px;background:#fff"></div>
<div class="a" style="left:0px;top:159px;width:306px;height:1px;background:#fff"></div>
<div class="a" style="left:307px;top:159px;width:972px;height:574px;background:#fff;border:1px solid;border-color:#000 #404040 #d4d0c8 #000"></div>
<div class="a" style="left:308px;top:160px;width:45px;height:556px;background:#d4d0c8"></div>
<div class="a" style="left:353px;top:160px;width:1px;height:462px;background:#808080"></div>
<div class="a" style="left:354px;top:160px;width:4px;height:462px;background:#e2cdc6"></div>
<div class="a" style="left:308px;top:622px;width:50px;height:94px;background:#fff"></div>
<div class="a" style="left:358px;top:160px;width:1px;height:462px;background:#1a6b2a"></div>
<div class="a" style="left:308px;top:376px;width:46px;height:1px;background:#808080"></div>
<div class="a" style="left:308px;top:377px;width:46px;height:1px;background:#fff"></div>
<div class="a" style="left:308px;top:572px;width:46px;height:1px;background:#808080"></div>
<div class="a" style="left:308px;top:573px;width:46px;height:1px;background:#fff"></div>
<div class="a" style="left:308px;top:621px;width:46px;height:1px;background:#808080"></div>
<div class="a" style="left:308px;top:622px;width:46px;height:1px;background:#fff"></div>
<div class="a" style="left:359px;top:167px;width:903px;height:56px;background:#ffff00"></div>
<div class="a" style="left:359px;top:167px;width:8px;height:56px;background:#1e7a1e"></div>
<div class="t dg" style="left:370px;top:168px;letter-spacing:-0.185px;">[Program Name : NewProgram1]</div>
<div class="t dg" style="left:370px;top:196px;letter-spacing:-0.147px;">[Section Name : Section1]</div>
<div class="t dg" style="left:310px;top:161px;">0</div>
<div class="t dg" style="left:342px;top:175px;">0</div>
<div class="t dg" style="left:310px;top:378px;">1</div>
<div class="t dg" style="left:342px;top:392px;">4</div>
<div class="t dg" style="left:310px;top:574px;">2</div>
<svg class="a" style="left:0;top:0" width="1280" height="800" viewBox="0 0 1280 800" shape-rendering="crispEdges"><rect x="444" y="230" width="1" height="1" fill="#a8a8a8"/><rect x="529" y="230" width="1" height="1" fill="#a8a8a8"/><rect x="614" y="230" width="1" height="1" fill="#a8a8a8"/><rect x="699" y="230" width="1" height="1" fill="#a8a8a8"/><rect x="784" y="230" width="1" height="1" fill="#a8a8a8"/><rect x="869" y="230" width="1" height="1" fill="#a8a8a8"/><rect x="1039" y="230" width="1" height="1" fill="#a8a8a8"/><rect x="1124" y="230" width="1" height="1" fill="#a8a8a8"/><rect x="1209" y="230" width="1" height="1" fill="#a8a8a8"/><rect x="444" y="279" width="1" height="1" fill="#a8a8a8"/><rect x="529" y="279" width="1" height="1" fill="#a8a8a8"/><rect x="614" y="279" width="1" height="1" fill="#a8a8a8"/><rect x="699" y="279" width="1" height="1" fill="#a8a8a8"/><rect x="784" y="279" width="1" height="1" fill="#a8a8a8"/><rect x="869" y="279" width="1" height="1" fill="#a8a8a8"/><rect x="1039" y="279" width="1" height="1" fill="#a8a8a8"/><rect x="1124" y="279" width="1" height="1" fill="#a8a8a8"/><rect x="1209" y="279" width="1" height="1" fill="#a8a8a8"/><rect x="444" y="328" width="1" height="1" fill="#a8a8a8"/><rect x="529" y="328" width="1" height="1" fill="#a8a8a8"/><rect x="614" y="328" width="1" height="1" fill="#a8a8a8"/><rect x="699" y="328" width="1" height="1" fill="#a8a8a8"/><rect x="784" y="328" width="1" height="1" fill="#a8a8a8"/><rect x="869" y="328" width="1" height="1" fill="#a8a8a8"/><rect x="1039" y="328" width="1" height="1" fill="#a8a8a8"/><rect x="1124" y="328" width="1" height="1" fill="#a8a8a8"/><rect x="1209" y="328" width="1" height="1" fill="#a8a8a8"/><rect x="444" y="377" width="1" height="1" fill="#a8a8a8"/><rect x="529" y="377" width="1" height="1" fill="#a8a8a8"/><rect x="614" y="377" width="1" height="1" fill="#a8a8a8"/><rect x="699" y="377" width="1" height="1" fill="#a8a8a8"/><rect x="784" y="377" width="1" height="1" fill="#a8a8a8"/><rect x="869" y="377" width="1" height="1" fill="#a8a8a8"/><rect x="1039" y="377" width="1" height="1" fill="#a8a8a8"/><rect x="1124" y="377" width="1" height="1" fill="#a8a8a8"/><rect x="1209" y="377" width="1" height="1" fill="#a8a8a8"/><rect x="444" y="426" width="1" height="1" fill="#a8a8a8"/><rect x="529" y="426" width="1" height="1" fill="#a8a8a8"/><rect x="614" y="426" width="1" height="1" fill="#a8a8a8"/><rect x="699" y="426" width="1" height="1" fill="#a8a8a8"/><rect x="784" y="426" width="1" height="1" fill="#a8a8a8"/><rect x="869" y="426" width="1" height="1" fill="#a8a8a8"/><rect x="1039" y="426" width="1" height="1" fill="#a8a8a8"/><rect x="1124" y="426" width="1" height="1" fill="#a8a8a8"/><rect x="1209" y="426" width="1" height="1" fill="#a8a8a8"/><rect x="444" y="475" width="1" height="1" fill="#a8a8a8"/><rect x="529" y="475" width="1" height="1" fill="#a8a8a8"/><rect x="614" y="475" width="1" height="1" fill="#a8a8a8"/><rect x="699" y="475" width="1" height="1" fill="#a8a8a8"/><rect x="784" y="475" width="1" height="1" fill="#a8a8a8"/><rect x="869" y="475" width="1" height="1" fill="#a8a8a8"/><rect x="1039" y="475" width="1" height="1" fill="#a8a8a8"/><rect x="1124" y="475" width="1" height="1" fill="#a8a8a8"/><rect x="1209" y="475" width="1" height="1" fill="#a8a8a8"/><rect x="444" y="524" width="1" height="1" fill="#a8a8a8"/><rect x="529" y="524" width="1" height="1" fill="#a8a8a8"/><rect x="614" y="524" width="1" height="1" fill="#a8a8a8"/><rect x="699" y="524" width="1" height="1" fill="#a8a8a8"/><rect x="784" y="524" width="1" height="1" fill="#a8a8a8"/><rect x="869" y="524" width="1" height="1" fill="#a8a8a8"/><rect x="1039" y="524" width="1" height="1" fill="#a8a8a8"/><rect x="1124" y="524" width="1" height="1" fill="#a8a8a8"/><rect x="1209" y="524" width="1" height="1" fill="#a8a8a8"/><rect x="444" y="573" width="1" height="1" fill="#a8a8a8"/><rect x="529" y="573" width="1" height="1" fill="#a8a8a8"/><rect x="614" y="573" width="1" height="1" fill="#a8a8a8"/><rect x="699" y="573" width="1" height="1" fill="#a8a8a8"/><rect x="784" y="573" width="1" height="1" fill="#a8a8a8"/><rect x="869" y="573" width="1" height="1" fill="#a8a8a8"/><rect x="1039" y="573" width="1" height="1" fill="#a8a8a8"/><rect x="1124" y="573" width="1" height="1" fill="#a8a8a8"/><rect x="1209" y="573" width="1" height="1" fill="#a8a8a8"/><rect x="444" y="622" width="1" height="1" fill="#a8a8a8"/><rect x="529" y="622" width="1" height="1" fill="#a8a8a8"/><rect x="614" y="622" width="1" height="1" fill="#a8a8a8"/><rect x="699" y="622" width="1" height="1" fill="#a8a8a8"/><rect x="784" y="622" width="1" height="1" fill="#a8a8a8"/><rect x="869" y="622" width="1" height="1" fill="#a8a8a8"/><rect x="1039" y="622" width="1" height="1" fill="#a8a8a8"/><rect x="1124" y="622" width="1" height="1" fill="#a8a8a8"/><rect x="1209" y="622" width="1" height="1" fill="#a8a8a8"/></svg>
<div class="a" style="left:359px;top:377px;width:903px;height:1px;background:#e0e0e0"></div>
<div class="a" style="left:359px;top:573px;width:903px;height:1px;background:#e0e0e0"></div>
<div class="a" style="left:359px;top:622px;width:903px;height:1px;background:#e0e0e0"></div>
<div class="a" style="left:953px;top:230px;width:1px;height:393px;background:#33503a"></div>
<div class="a" style="left:359px;top:251px;width:36px;height:1px;background:#000"></div>
<div class="a" style="left:395px;top:245px;width:1px;height:13px;background:#000"></div>
<div class="a" style="left:407px;top:245px;width:1px;height:13px;background:#000"></div>
<div class="a" style="left:408px;top:251px;width:465px;height:1px;background:#000"></div>
<div class="t dg" style="left:370px;top:231px;width:62px;text-align:center;">0.00</div>
<div class="a" style="left:359px;top:300px;width:36px;height:1px;background:#000"></div>
<div class="a" style="left:395px;top:294px;width:1px;height:13px;background:#000"></div>
<div class="a" style="left:407px;top:294px;width:1px;height:13px;background:#000"></div>
<div class="a" style="left:408px;top:300px;width:465px;height:1px;background:#000"></div>
<div class="t dg" style="left:370px;top:280px;width:62px;text-align:center;">0.01</div>
<div class="a" style="left:359px;top:349px;width:36px;height:1px;background:#000"></div>
<div class="a" style="left:395px;top:343px;width:1px;height:13px;background:#000"></div>
<div class="a" style="left:407px;top:343px;width:1px;height:13px;background:#000"></div>
<div class="a" style="left:408px;top:349px;width:465px;height:1px;background:#000"></div>
<div class="t dg" style="left:370px;top:329px;width:62px;text-align:center;">0.02</div>
<div class="a" style="left:873px;top:245px;width:77px;height:127px;border:1px solid #000;background:#fff"></div>
<div class="a" style="left:873px;top:279px;width:77px;height:1px;background:#000"></div>
<div class="t dg" style="left:873px;top:256px;width:77px;text-align:center;letter-spacing:-0.266px;">CNTR(12)</div>
<div class="a" style="left:950px;top:252px;width:3px;height:1px;background:#000"></div>
<div class="t dg" style="left:963px;top:256px;letter-spacing:-0.075px;">Reversible Counter</div>
<div class="t dg" style="left:873px;top:281px;width:75px;text-align:center;">000</div>
<div class="t dg" style="left:963px;top:281px;letter-spacing:-0.107px;">Counter number</div>
<div class="t dg" style="left:873px;top:330px;width:75px;text-align:center;">#75</div>
<div class="a" style="left:899px;top:328px;width:25px;height:1px;background:#000"></div>
<div class="t dg" style="left:963px;top:330px;letter-spacing:0.069px;">Set value</div>
<div class="a" style="left:359px;top:398px;width:36px;height:1px;background:#000"></div>
<div class="a" style="left:395px;top:392px;width:1px;height:13px;background:#000"></div>
<div class="a" style="left:407px;top:392px;width:1px;height:13px;background:#000"></div>
<div class="a" style="left:408px;top:398px;width:465px;height:1px;background:#000"></div>
<div class="t dg" style="left:370px;top:378px;width:62px;text-align:center;">0.03</div>
<div class="a" style="left:873px;top:392px;width:77px;height:176px;border:1px solid #000;background:#fff"></div>
<div class="a" style="left:873px;top:426px;width:77px;height:1px;background:#000"></div>
<div class="t dg" style="left:873px;top:403px;width:77px;text-align:center;letter-spacing:0.013px;">DIV(33)</div>
<div class="a" style="left:950px;top:399px;width:3px;height:1px;background:#000"></div>
<div class="t dg" style="left:963px;top:403px;letter-spacing:-0.246px;">BCD Divide</div>
<div class="t dg" style="left:873px;top:428px;width:75px;text-align:center;">CNT0</div>
<div class="t dg" style="left:963px;top:428px;letter-spacing:0.135px;">Dividend word (bcd)</div>
<div class="t dg" style="left:873px;top:477px;width:75px;text-align:center;">#2</div>
<div class="a" style="left:899px;top:475px;width:25px;height:1px;background:#000"></div>
<div class="t dg" style="left:963px;top:477px;letter-spacing:0.214px;">Divisor word (bcd)</div>
<div class="t dg" style="left:873px;top:526px;width:75px;text-align:center;">DM1</div>
<div class="a" style="left:899px;top:524px;width:25px;height:1px;background:#000"></div>
<div class="t dg" style="left:963px;top:526px;letter-spacing:0.193px;">Result word</div>
<div class="a" style="left:356px;top:571px;width:91px;height:53px;background:repeating-linear-gradient(135deg,#000 0,#000 1.1px,#fff 1.1px,#fff 2.83px)"></div>
<div class="a" style="left:359px;top:574px;width:85px;height:47px;background:#9aa6c8"></div>
<div class="a dither" style="left:1262px;top:160px;width:16px;height:556px;"></div>
<div class="a" style="left:1262px;top:160px;width:16px;height:7px;border:1px solid;border-color:#d4d0c8 #404040 #404040 #fff;background:#d4d0c8"></div>
<div class="a btn" style="left:1262px;top:167px;width:16px;height:16px;"><svg width="16" height="16" viewBox="0 0 16 16" shape-rendering="crispEdges" style="left:-1px;top:-1px"><path d="M4 9h7L7.5 5.5z" fill="#000"/></svg></div>
<div class="a btn" style="left:1262px;top:183px;width:16px;height:258px;"></div>
<div class="a btn" style="left:1262px;top:700px;width:16px;height:16px;"><svg width="16" height="16" viewBox="0 0 16 16" shape-rendering="crispEdges" style="left:-1px;top:-1px"><path d="M4 6h7L7.5 9.5z" fill="#000"/></svg></div>
<div class="a dither" style="left:308px;top:716px;width:954px;height:15px;"></div>
<div class="a" style="left:308px;top:716px;width:7px;height:15px;border:1px solid;border-color:#fff #404040 #404040 #d4d0c8;background:#d4d0c8"></div>
<div class="a btn" style="left:315px;top:716px;width:16px;height:15px;"><svg width="16" height="15" viewBox="0 0 16 15" shape-rendering="crispEdges" style="left:-1px;top:-1px"><path d="M9 3v7L5.5 6.5z" fill="#000"/></svg></div>
<div class="a btn" style="left:331px;top:716px;width:559px;height:15px;"></div>
<div class="a btn" style="left:1246px;top:716px;width:16px;height:15px;"><svg width="16" height="15" viewBox="0 0 16 15" shape-rendering="crispEdges" style="left:-1px;top:-1px"><path d="M6 3v7L9.5 6.5z" fill="#000"/></svg></div>
<div class="a" style="left:1262px;top:716px;width:16px;height:15px;background:#d4d0c8"></div>
<div class="a" style="left:303px;top:733px;width:977px;height:1px;background:#fff"></div>
<div class="a btn" style="left:307px;top:736px;width:11px;height:12px;"><svg width="11" height="12" viewBox="0 0 11 12" shape-rendering="crispEdges" style="left:-1px;top:-1px"><path d="M2.5 3l5 5M7.5 3l-5 5" stroke="#000" stroke-width="1.6" shape-rendering="auto"/></svg></div>
<div class="a btn" style="left:320px;top:736px;width:11px;height:12px;"><svg width="11" height="12" viewBox="0 0 11 12" shape-rendering="crispEdges" style="left:-1px;top:-1px"><path d="M6 2.5v6L3 5.5z" fill="#000"/></svg></div>
<div class="a sunk" style="left:334px;top:736px;width:63px;height:16px;"></div>
<div class="t st" style="left:404px;top:738px;letter-spacing:-0.281px;">Name:</div>
<div class="a sunk" style="left:440px;top:736px;width:203px;height:16px;"></div>
<div class="t st" style="left:654px;top:738px;letter-spacing:-0.096px;">Address or Value:</div>
<div class="a sunk" style="left:744px;top:736px;width:71px;height:16px;"></div>
<div class="t st" style="left:823px;top:738px;letter-spacing:-0.219px;">Comment:</div>
<div class="a sunk" style="left:877px;top:736px;width:403px;height:16px;"></div>
<div class="t st" style="left:2px;top:756px;letter-spacing:-0.2px;">For Help, press F1</div>
<div class="a sunk" style="left:456px;top:754px;width:19px;height:16px;"></div>
<div class="a sunk" style="left:478px;top:754px;width:65px;height:16px;"></div>
<div class="a sunk" style="left:546px;top:754px;width:255px;height:16px;"></div>
<div class="t st" style="left:548px;top:756px;white-space:pre;letter-spacing:-0.05px;">NewPLC1(Net:0,Node:0) - Offline</div>
<div class="a sunk" style="left:804px;top:754px;width:55px;height:16px;"></div>
<div class="a sunk" style="left:862px;top:754px;width:55px;height:16px;"></div>
<div class="a sunk" style="left:919px;top:754px;width:131px;height:16px;"></div>
<div class="t st" style="left:921px;top:756px;white-space:pre;letter-spacing:0.148px;">rung 2 (0, 0)  - 100%</div>
<div class="a sunk" style="left:1053px;top:754px;width:105px;height:16px;"></div>
<div class="a sunk" style="left:1160px;top:754px;width:62px;height:16px;"></div>
<div class="t st" style="left:1162px;top:756px;white-space:pre;"><span style="display:inline-block;transform:scaleX(0.9);transform-origin:0 50%">Classic</span></div>
<div class="a sunk" style="left:1224px;top:754px;width:25px;height:16px;"></div>
<div class="a sunk" style="left:1252px;top:754px;width:28px;height:16px;"></div>
<div class="a" style="left:0px;top:771px;width:1280px;height:1px;background:#fff"></div>
<div class="a raised" style="left:2px;top:774px;width:52px;height:22px;"></div>
<svg class="ic" style="left:5px;top:777px" width="16" height="16" viewBox="0 0 16 16" shape-rendering="crispEdges"><g shape-rendering="geometricPrecision"><path d="M1.5 3.5q3-2 5.5-.5v5q-2.500-1.500-5.500.5z" fill="#e8502a"/><path d="M8 3q3 1.500 6-.5v5q-3 2-6 .5z" fill="#5fb830"/><path d="M1.500 9.500q3-2 5.500-.5v5q-2.500-1.500-5.500.5z" fill="#3f78d8"/><path d="M8 9q3 1.500 6-.5v5q-3 2-6 .5z" fill="#f8c820"/></g></svg>
<div class="t" style="left:22px;top:779px;font-weight:bold;font-size:12px;letter-spacing:0.431px;">Start</div>
<div class="a" style="left:60px;top:775px;width:3px;height:20px;border:1px solid;border-color:#fff #808080 #808080 #fff"></div>
<svg class="ic" style="left:70px;top:777px" width="16" height="16" viewBox="0 0 16 16" shape-rendering="crispEdges"><g shape-rendering="geometricPrecision"><path d="M2 3.500l9-2.500 3 2v9.500l-9 3-3-2z" fill="#2f6fb8"/><path d="M3 4.500l8-2.200v9.200l-8 2.500z" fill="#bfe0f8"/><text x="7" y="12" font-family="Liberation Sans,sans-serif" font-size="10" font-weight="bold" fill="#fff" stroke="#2f6fb8" stroke-width=".5" text-anchor="middle" transform="rotate(-12 7 9)">E</text><path d="M12.500 6l2.500 2-2.500 2z" fill="#e06820"/></g></svg>
<svg class="ic" style="left:94px;top:777px" width="16" height="16" viewBox="0 0 16 16" shape-rendering="crispEdges"><g shape-rendering="geometricPrecision"><text x="8" y="14" font-family="Liberation Sans,sans-serif" font-size="19" font-weight="bold" fill="#2f95e8" text-anchor="middle">e</text><path d="M1 13.500q-1.500-4 4.500-8.500 5-3.500 9-3.500-5 1.500-9 5.500-4 4-4.500 6.500z" fill="#f0b830" opacity=".9"/></g></svg>
<svg class="ic" style="left:117px;top:777px" width="16" height="16" viewBox="0 0 16 16" shape-rendering="crispEdges"><g shape-rendering="geometricPrecision"><rect x=".5" y="1.500" width="15" height="14" fill="#dbe9f6" stroke="#3a6ea5"/><path d="M1 2h6l-6 7z" fill="#9fc4ea"/><path d="M2 14q2-4 5-5 3-1 4.500-4 1-2 3.500-2.500v3q-2 .5-3 2.500-1.500 3-4 4-2.500 1-3 2z" fill="#f09a28"/><path d="M9 15l6-7v7z" fill="#9fc4ea"/></g></svg>
<svg class="ic" style="left:141px;top:777px" width="16" height="16" viewBox="0 0 16 16" shape-rendering="crispEdges"><g shape-rendering="geometricPrecision"><circle cx="8" cy="9" r="6.500" fill="#e88a18"/><circle cx="7" cy="8" r="4.500" fill="#f8b040"/><circle cx="6" cy="6.500" r="2.200" fill="#ffe0a0"/><path d="M3 3.500q1.500-1.500 3.500-1.500" stroke="#d07010" stroke-width="1" fill="none"/></g></svg>
<svg class="ic" style="left:163px;top:777px" width="16" height="16" viewBox="0 0 16 16" shape-rendering="crispEdges"><g shape-rendering="geometricPrecision"><circle cx="8" cy="9" r="7" fill="#e8c020"/><path d="M8 9L1.940 5.500A7 7 0 0 1 14.060 5.500z" fill="#d83a28"/><path d="M8 9L1.940 5.500A7 7 0 0 0 8 16z" fill="#3a9a3a"/><circle cx="8" cy="9" r="3.300" fill="#fff"/><circle cx="8" cy="9" r="2.400" fill="#3a78d8"/></g></svg>
<svg class="ic" style="left:186px;top:777px" width="16" height="16" viewBox="0 0 16 16" shape-rendering="crispEdges"><g shape-rendering="geometricPrecision"><circle cx="8" cy="8.500" r="7" fill="#3a68c0"/><path d="M8 8.500L8 1.500A7 7 0 0 1 15 8.500z" fill="#58a838"/><path d="M8 8.500L1 8.500A7 7 0 0 1 8 1.500z" fill="#e07028"/><path d="M8 8.500L15 8.500A7 7 0 0 1 8 15.500z" fill="#e8c838"/><circle cx="8" cy="8.500" r="4.300" fill="#fff"/><path d="M6.500 5.800l4.500 2.700-4.500 2.700z" fill="#202020"/></g></svg>
<svg class="ic" style="left:209px;top:777px" width="16" height="16" viewBox="0 0 16 16" shape-rendering="crispEdges"><g shape-rendering="geometricPrecision"><rect x=".5" y="1.500" width="15.500" height="14.500" rx="1.500" fill="#2a7ab8" stroke="#1a5a90"/><path d="M2 13.500h2.500q1.500 0 2.500-5 .8-3.500 2-3.500 1 0 1.800 3.500 1 5 2.700 5h1.500" stroke="#103050" stroke-width="1.300" fill="none"/></g></svg>
<div class="a" style="left:240px;top:775px;width:3px;height:20px;border:1px solid;border-color:#fff #808080 #808080 #fff"></div>
<div class="a dither" style="left:247px;top:774px;width:159px;height:22px;border:1px solid;border-color:#404040 #fff #fff #404040;box-shadow:inset 1px 1px 0 #808080"></div>
<svg class="ic" style="left:252px;top:777px" width="16" height="16" viewBox="0 0 16 16" shape-rendering="crispEdges"><path fill="#000" d="M0 0h16v1h-16zM0 1h16v1h-16zM0 2h2v1h-2zM13 2h3v1h-3zM0 3h2v1h-2zM14 3h2v1h-2zM0 4h2v1h-2zM14 4h2v1h-2zM0 5h2v1h-2zM14 5h2v1h-2zM0 6h2v1h-2zM14 6h2v1h-2zM0 7h2v1h-2zM13 7h3v1h-3zM0 8h16v1h-16zM0 9h16v1h-16zM0 10h16v1h-16zM0 11h2v1h-2zM13 11h3v1h-3zM0 12h1v1h-1zM13 12h3v1h-3zM0 13h16v1h-16zM1 14h14v1h-14z"/><path fill="#c0c0c0" d="M2 2h11v1h-11zM4 3h1v1h-1zM7 3h1v1h-1zM10 3h1v1h-1zM13 3h1v1h-1zM4 4h1v1h-1zM7 4h1v1h-1zM10 4h1v1h-1zM13 4h1v1h-1zM4 5h1v1h-1zM7 5h1v1h-1zM10 5h1v1h-1zM13 5h1v1h-1zM4 6h1v1h-1zM7 6h1v1h-1zM10 6h1v1h-1zM13 6h1v1h-1zM2 7h11v1h-11z"/><path fill="#fff" d="M2 3h1v1h-1zM5 3h1v1h-1zM8 3h1v1h-1zM11 3h1v1h-1zM2 4h1v1h-1zM5 4h1v1h-1zM8 4h1v1h-1zM11 4h1v1h-1zM2 5h1v1h-1zM5 5h1v1h-1zM8 5h1v1h-1zM11 5h1v1h-1zM2 6h1v1h-1zM5 6h1v1h-1zM8 6h1v1h-1zM11 6h1v1h-1z"/><path fill="#808080" d="M3 3h1v1h-1zM6 3h1v1h-1zM9 3h1v1h-1zM12 3h1v1h-1zM3 4h1v1h-1zM6 4h1v1h-1zM9 4h1v1h-1zM12 4h1v1h-1zM3 5h1v1h-1zM6 5h1v1h-1zM9 5h1v1h-1zM12 5h1v1h-1zM3 6h1v1h-1zM6 6h1v1h-1zM9 6h1v1h-1zM12 6h1v1h-1z"/><path fill="#ff0" d="M2 11h1v1h-1zM4 11h1v1h-1zM6 11h1v1h-1zM8 11h1v1h-1zM10 11h1v1h-1zM12 11h1v1h-1zM1 12h1v1h-1zM3 12h1v1h-1zM5 12h1v1h-1zM7 12h1v1h-1zM9 12h1v1h-1zM11 12h1v1h-1z"/><path fill="#808000" d="M3 11h1v1h-1zM5 11h1v1h-1zM7 11h1v1h-1zM9 11h1v1h-1zM11 11h1v1h-1zM2 12h1v1h-1zM4 12h1v1h-1zM6 12h1v1h-1zM8 12h1v1h-1zM10 12h1v1h-1zM12 12h1v1h-1z"/></svg>
<div class="t" style="left:272px;top:779px;font-weight:bold;font-size:12px;letter-spacing:-0.207px;">Cím nélküli - CX-Progr...</div>
<div class="a raised" style="left:410px;top:774px;width:159px;height:22px;"></div>
<svg class="ic" style="left:415px;top:777px" width="16" height="16" viewBox="0 0 16 16" shape-rendering="crispEdges"><g shape-rendering="geometricPrecision"><path d="M2 2l3.500 11" stroke="#e06820" stroke-width="2.200" stroke-linecap="round"/><path d="M14 2l-5 12" stroke="#4a90d8" stroke-width="2.200" stroke-linecap="round"/><path d="M5.500 4.500l2.500 9.500" stroke="#f0b030" stroke-width="1.800" stroke-linecap="round"/><path d="M10.500 4.500l-3 9.500" stroke="#58b040" stroke-width="1.800" stroke-linecap="round"/><circle cx="2.500" cy="2.500" r="1.500" fill="#c03020"/></g></svg>
<div class="t st" style="left:434px;top:779px;letter-spacing:-0.178px;">CPM1-szamlalo_osztas_1...</div>
<div class="a" style="left:1012px;top:775px;width:3px;height:20px;border:1px solid;border-color:#fff #808080 #808080 #fff"></div>
<div class="a" style="left:1023px;top:778px;width:13px;height:16px;background:#1c3f94"></div>
<div class="t" style="left:1024px;top:780px;color:#fff;font-size:9px;letter-spacing:-0.4px;-webkit-text-stroke:0;">HU</div>
<div class="a" style="left:1039px;top:774px;width:239px;height:22px;border:1px solid;border-color:#808080 #fff #fff #808080"></div>
<div class="t" style="left:1046px;top:779px;font-weight:bold;">«</div>
<svg class="ic" style="left:1057px;top:777px" width="16" height="16" viewBox="0 0 16 16" shape-rendering="crispEdges"><path fill="#000" d="M4 1h1v1h-1zM6 1h1v1h-1zM3 2h1v1h-1zM5 2h1v1h-1zM7 2h1v1h-1zM2 3h7v1h-7zM1 4h14v1h-14zM1 5h1v1h-1zM5 5h1v1h-1zM9 5h1v1h-1zM13 5h2v1h-2zM1 6h1v1h-1zM5 6h1v1h-1zM9 6h1v1h-1zM13 6h2v1h-2zM1 7h14v1h-14zM1 8h1v1h-1zM5 8h1v1h-1zM9 8h1v1h-1zM13 8h2v1h-2zM1 9h1v1h-1zM5 9h1v1h-1zM9 9h1v1h-1zM13 9h2v1h-2zM1 10h14v1h-14zM1 11h1v1h-1zM5 11h1v1h-1zM9 11h1v1h-1zM13 11h2v1h-2zM1 12h14v1h-14z"/><path fill="#ff0" d="M8 1h2v1h-2zM8 2h3v1h-3zM9 3h2v1h-2z"/><path fill="#c0c0c0" d="M2 5h3v1h-3zM6 5h3v1h-3zM10 5h3v1h-3zM2 6h3v1h-3zM6 6h3v1h-3zM10 6h3v1h-3zM2 8h3v1h-3zM6 8h3v1h-3zM10 8h3v1h-3zM2 9h3v1h-3zM6 9h3v1h-3zM10 9h3v1h-3zM2 11h3v1h-3zM6 11h3v1h-3zM10 11h3v1h-3z"/></svg>
<svg class="ic" style="left:1075px;top:777px" width="16" height="16" viewBox="0 0 16 16" shape-rendering="crispEdges"><path fill="#5cc6e8" d="M1 0h14v1h-14zM0 1h1v1h-1zM15 1h1v1h-1zM0 2h1v1h-1zM15 2h1v1h-1zM0 3h1v1h-1zM15 3h1v1h-1zM0 4h1v1h-1zM15 4h1v1h-1zM0 5h1v1h-1zM15 5h1v1h-1zM0 6h1v1h-1zM15 6h1v1h-1zM0 7h1v1h-1zM15 7h1v1h-1zM0 8h1v1h-1zM15 8h1v1h-1zM0 9h1v1h-1zM15 9h1v1h-1zM0 10h1v1h-1zM15 10h1v1h-1zM0 11h1v1h-1zM15 11h1v1h-1zM0 12h1v1h-1zM15 12h1v1h-1zM1 13h14v1h-14z"/><path fill="#3a6ea5" d="M1 1h14v1h-14zM1 2h1v1h-1zM4 2h11v1h-11zM1 3h1v1h-1zM3 3h1v1h-1zM6 3h9v1h-9zM1 4h1v1h-1zM4 4h2v1h-2zM8 4h7v1h-7zM1 5h3v1h-3zM5 5h3v1h-3zM9 5h6v1h-6zM1 6h4v1h-4zM6 6h3v1h-3zM10 6h5v1h-5zM1 7h5v1h-5zM7 7h3v1h-3zM13 7h2v1h-2zM1 8h6v1h-6zM8 8h1v1h-1zM10 8h3v1h-3zM14 8h1v1h-1zM1 9h7v1h-7zM9 9h2v1h-2zM12 9h1v1h-1zM14 9h1v1h-1zM1 10h7v1h-7zM9 10h4v1h-4zM14 10h1v1h-1zM1 11h8v1h-8zM13 11h2v1h-2zM1 12h14v1h-14z"/><path fill="#fff" d="M2 2h2v1h-2zM2 3h1v1h-1zM4 3h2v1h-2zM2 4h2v1h-2zM6 4h2v1h-2zM4 5h1v1h-1zM8 5h1v1h-1zM5 6h1v1h-1zM9 6h1v1h-1zM6 7h1v1h-1zM10 7h3v1h-3zM7 8h1v1h-1zM9 8h1v1h-1zM13 8h1v1h-1zM8 9h1v1h-1zM11 9h1v1h-1zM13 9h1v1h-1zM8 10h1v1h-1zM13 10h1v1h-1zM9 11h4v1h-4z"/></svg>
<svg class="ic" style="left:1093px;top:777px" width="16" height="16" viewBox="0 0 16 16" shape-rendering="crispEdges"><path fill="#808080" d="M2 1h9v1h-9zM13 1h1v1h-1zM2 2h1v1h-1zM10 2h1v1h-1zM12 2h1v1h-1zM2 3h1v1h-1zM10 3h1v1h-1zM12 3h1v1h-1zM14 3h1v1h-1zM2 4h1v1h-1zM10 4h1v1h-1zM12 4h1v1h-1zM14 4h1v1h-1zM2 5h1v1h-1zM10 5h1v1h-1zM12 5h1v1h-1zM2 6h9v1h-9zM13 6h1v1h-1zM4 7h5v1h-5zM2 8h8v1h-8zM2 9h1v1h-1zM9 9h1v1h-1zM2 10h8v1h-8z"/><path fill="#000080" d="M3 2h7v1h-7zM3 3h1v1h-1zM8 3h2v1h-2zM3 4h1v1h-1zM8 4h2v1h-2zM3 5h7v1h-7z"/><path fill="#a0a0ff" d="M4 3h4v1h-4zM4 4h4v1h-4z"/><path fill="#f00" d="M10 7h1v1h-1zM14 7h1v1h-1zM10 8h2v1h-2zM13 8h2v1h-2zM11 9h3v1h-3zM10 10h2v1h-2zM13 10h2v1h-2zM10 11h1v1h-1zM14 11h1v1h-1z"/><path fill="#c0c0c0" d="M3 9h6v1h-6z"/></svg>
<svg class="ic" style="left:1111px;top:777px" width="16" height="16" viewBox="0 0 16 16" shape-rendering="crispEdges"><path fill="#808080" d="M5 1h8v1h-8zM5 2h1v1h-1zM12 2h1v1h-1zM2 3h8v1h-8zM12 3h1v1h-1zM2 4h1v1h-1zM9 4h1v1h-1zM12 4h1v1h-1zM2 5h1v1h-1zM9 5h4v1h-4zM2 6h1v1h-1zM9 6h1v1h-1zM2 7h1v1h-1zM9 7h1v1h-1zM2 8h8v1h-8zM3 9h6v1h-6zM2 10h1v1h-1zM9 10h1v1h-1zM2 11h8v1h-8z"/><path fill="#000080" d="M6 2h6v1h-6zM10 3h2v1h-2zM3 4h6v1h-6zM10 4h2v1h-2zM3 5h1v1h-1zM7 5h2v1h-2zM3 6h1v1h-1zM7 6h2v1h-2zM3 7h6v1h-6z"/><path fill="#a0a0ff" d="M4 5h3v1h-3zM4 6h3v1h-3z"/><path fill="#f00" d="M10 7h1v1h-1zM14 7h1v1h-1zM10 8h2v1h-2zM13 8h2v1h-2zM11 9h3v1h-3zM10 10h2v1h-2zM13 10h2v1h-2zM10 11h1v1h-1zM14 11h1v1h-1z"/><path fill="#c0c0c0" d="M3 10h6v1h-6z"/></svg>
<svg class="ic" style="left:1129px;top:777px" width="16" height="16" viewBox="0 0 16 16" shape-rendering="crispEdges"><path fill="#808080" d="M3 1h8v1h-8zM2 2h1v1h-1zM11 2h1v1h-1zM1 3h1v1h-1zM12 3h1v1h-1zM1 4h1v1h-1zM12 4h1v1h-1zM1 5h1v1h-1zM12 5h1v1h-1zM1 6h1v1h-1zM12 6h1v1h-1zM1 7h1v1h-1zM12 7h1v1h-1zM1 8h1v1h-1zM12 8h1v1h-1zM2 9h1v1h-1zM11 9h1v1h-1zM3 10h1v1h-1zM10 10h1v1h-1zM4 11h1v1h-1zM9 11h1v1h-1zM5 12h1v1h-1zM8 12h1v1h-1zM6 13h2v1h-2z"/><path fill="#800000" d="M3 2h8v1h-8zM2 3h1v1h-1zM11 3h1v1h-1zM2 4h1v1h-1zM11 4h1v1h-1zM2 5h1v1h-1zM11 5h1v1h-1zM2 6h1v1h-1zM11 6h1v1h-1zM2 7h1v1h-1zM11 7h1v1h-1zM2 8h1v1h-1zM11 8h1v1h-1zM3 9h1v1h-1zM10 9h1v1h-1zM4 10h1v1h-1zM9 10h1v1h-1zM5 11h1v1h-1zM8 11h1v1h-1zM6 12h2v1h-2z"/><path fill="#f00" d="M3 3h8v1h-8zM3 4h1v1h-1zM5 4h4v1h-4zM10 4h1v1h-1zM3 5h2v1h-2zM6 5h2v1h-2zM9 5h2v1h-2zM3 6h3v1h-3zM8 6h3v1h-3zM3 7h3v1h-3zM8 7h3v1h-3zM3 8h2v1h-2zM6 8h2v1h-2zM9 8h2v1h-2zM5 9h4v1h-4zM5 10h4v1h-4zM6 11h2v1h-2z"/><path fill="#fff" d="M4 4h1v1h-1zM9 4h1v1h-1zM5 5h1v1h-1zM8 5h1v1h-1zM6 6h2v1h-2zM6 7h2v1h-2zM5 8h1v1h-1zM8 8h1v1h-1zM4 9h1v1h-1zM9 9h1v1h-1z"/></svg>
<svg class="ic" style="left:1147px;top:777px" width="16" height="16" viewBox="0 0 16 16" shape-rendering="crispEdges"><path fill="#000" d="M0 0h16v1h-16zM0 14h16v1h-16z"/><path fill="#fff" d="M0 1h16v1h-16zM0 2h16v1h-16zM0 3h16v1h-16zM0 4h16v1h-16zM0 5h16v1h-16zM0 6h16v1h-16zM0 7h16v1h-16zM0 8h16v1h-16zM0 9h16v1h-16zM0 10h16v1h-16zM0 11h16v1h-16zM0 12h16v1h-16zM0 13h16v1h-16z"/><text x="0.5" y="11.5" font-family="Liberation Sans,sans-serif" font-size="13" font-weight="bold" fill="#008000" text-anchor="start" >V</text><text x="9" y="8" font-family="Liberation Sans,sans-serif" font-size="8" font-weight="normal" fill="#008000" text-anchor="start" >2</text><text x="9.5" y="13.5" font-family="Liberation Sans,sans-serif" font-size="8" font-weight="bold" fill="#e00000" text-anchor="start" >c</text></svg>
<svg class="ic" style="left:1165px;top:777px" width="16" height="16" viewBox="0 0 16 16" shape-rendering="crispEdges"><path fill="#000080" d="M4 1h7v1h-7zM3 2h1v1h-1zM11 2h1v1h-1zM2 3h1v1h-1zM12 3h1v1h-1zM2 4h1v1h-1zM12 4h1v1h-1zM2 5h1v1h-1zM12 5h1v1h-1zM2 6h1v1h-1zM12 6h1v1h-1zM2 7h1v1h-1zM12 7h1v1h-1zM2 8h1v1h-1zM12 8h1v1h-1zM2 9h1v1h-1zM12 9h1v1h-1zM2 10h1v1h-1zM12 10h1v1h-1zM2 11h1v1h-1zM12 11h1v1h-1zM3 12h1v1h-1zM11 12h1v1h-1zM4 13h7v1h-7z"/><path fill="#00f" d="M4 2h7v1h-7zM3 3h3v1h-3zM7 3h5v1h-5zM3 4h3v1h-3zM8 4h4v1h-4zM3 5h1v1h-1zM5 5h1v1h-1zM7 5h1v1h-1zM9 5h3v1h-3zM3 6h2v1h-2zM8 6h4v1h-4zM3 7h3v1h-3zM8 7h4v1h-4zM3 8h2v1h-2zM8 8h4v1h-4zM3 9h1v1h-1zM5 9h1v1h-1zM7 9h1v1h-1zM9 9h3v1h-3zM3 10h3v1h-3zM8 10h4v1h-4zM3 11h3v1h-3zM7 11h5v1h-5zM4 12h7v1h-7z"/><path fill="#f00" d="M6 3h1v1h-1zM6 4h2v1h-2zM4 5h1v1h-1zM6 5h1v1h-1zM8 5h1v1h-1zM5 6h3v1h-3zM6 7h2v1h-2zM5 8h3v1h-3zM4 9h1v1h-1zM6 9h1v1h-1zM8 9h1v1h-1zM6 10h2v1h-2zM6 11h1v1h-1z"/></svg>
<svg class="ic" style="left:1183px;top:777px" width="16" height="16" viewBox="0 0 16 16" shape-rendering="crispEdges"><path fill="#808080" d="M1 1h10v1h-10zM1 2h1v1h-1zM10 2h1v1h-1zM1 3h10v1h-10zM1 4h1v1h-1zM10 4h1v1h-1zM1 5h10v1h-10zM1 6h1v1h-1zM1 7h6v1h-6zM1 8h1v1h-1zM1 9h4v1h-4zM1 10h1v1h-1zM1 11h4v1h-4z"/><path fill="#fff" d="M2 2h8v1h-8zM2 4h8v1h-8zM2 6h6v1h-6zM8 7h5v1h-5zM2 8h4v1h-4zM7 8h1v1h-1zM10 8h4v1h-4zM6 9h2v1h-2zM12 9h2v1h-2zM2 10h3v1h-3zM6 10h2v1h-2zM13 10h1v1h-1zM6 11h2v1h-2zM12 11h2v1h-2zM7 12h1v1h-1zM10 12h3v1h-3zM8 13h4v1h-4z"/><path fill="#000" d="M8 6h5v1h-5zM7 7h1v1h-1zM13 7h1v1h-1zM6 8h1v1h-1zM14 8h1v1h-1zM5 9h1v1h-1zM14 9h1v1h-1zM5 10h1v1h-1zM14 10h1v1h-1zM5 11h1v1h-1zM14 11h1v1h-1zM6 12h1v1h-1zM13 12h1v1h-1zM7 13h1v1h-1zM12 13h1v1h-1zM8 14h4v1h-4z"/><path fill="#008000" d="M8 8h2v1h-2zM8 9h4v1h-4zM8 10h5v1h-5zM8 11h4v1h-4zM8 12h2v1h-2z"/></svg>
<svg class="ic" style="left:1201px;top:777px" width="16" height="16" viewBox="0 0 16 16" shape-rendering="crispEdges"><path fill="#3a6ea5" d="M0 0h16v1h-16zM0 1h16v1h-16zM0 2h16v1h-16zM0 3h16v1h-16zM0 4h16v1h-16zM0 5h16v1h-16zM0 6h16v1h-16zM0 7h16v1h-16zM0 8h1v1h-1zM15 8h1v1h-1zM0 9h16v1h-16zM0 10h1v1h-1zM3 10h13v1h-13zM0 11h1v1h-1zM4 11h12v1h-12zM0 12h1v1h-1zM3 12h13v1h-13zM0 13h16v1h-16zM0 14h16v1h-16z"/><path fill="#a0a0ff" d="M1 8h14v1h-14zM1 10h2v1h-2zM1 11h1v1h-1zM3 11h1v1h-1zM1 12h2v1h-2z"/><path fill="#fff" d="M2 11h1v1h-1z"/><text x="0.5" y="7" font-family="Liberation Sans,sans-serif" font-size="8" font-weight="normal" fill="#d0d8ff" text-anchor="start" textLength="15" lengthAdjust="spacingAndGlyphs">Cfle</text></svg>
<svg class="ic" style="left:1219px;top:777px" width="16" height="16" viewBox="0 0 16 16" shape-rendering="crispEdges"><path fill="#000" d="M0 1h14v1h-14zM0 2h1v1h-1zM13 2h1v1h-1zM0 3h1v1h-1zM13 3h1v1h-1zM0 4h1v1h-1zM13 4h1v1h-1zM0 5h1v1h-1zM13 5h1v1h-1zM0 6h1v1h-1zM13 6h1v1h-1zM0 7h1v1h-1zM13 7h1v1h-1zM0 8h14v1h-14zM4 9h6v1h-6zM3 10h8v1h-8z"/><path fill="#000080" d="M1 2h12v1h-12zM1 3h1v1h-1zM8 3h2v1h-2zM11 3h2v1h-2zM1 4h1v1h-1zM8 4h1v1h-1zM11 4h2v1h-2zM1 5h1v1h-1zM7 5h1v1h-1zM1 6h8v1h-8zM11 6h1v1h-1zM1 7h9v1h-9zM11 7h1v1h-1z"/><path fill="#3a6ea5" d="M2 3h6v1h-6zM2 4h6v1h-6zM2 5h5v1h-5z"/><path fill="#9fd0f0" d="M10 3h1v1h-1zM9 4h2v1h-2zM8 5h5v1h-5zM9 6h2v1h-2zM12 6h1v1h-1zM10 7h1v1h-1zM12 7h1v1h-1z"/></svg>
<div class="t st" style="left:1241px;top:779px;letter-spacing:0.094px;">15:57</div>
</div>
</body>
</html>
